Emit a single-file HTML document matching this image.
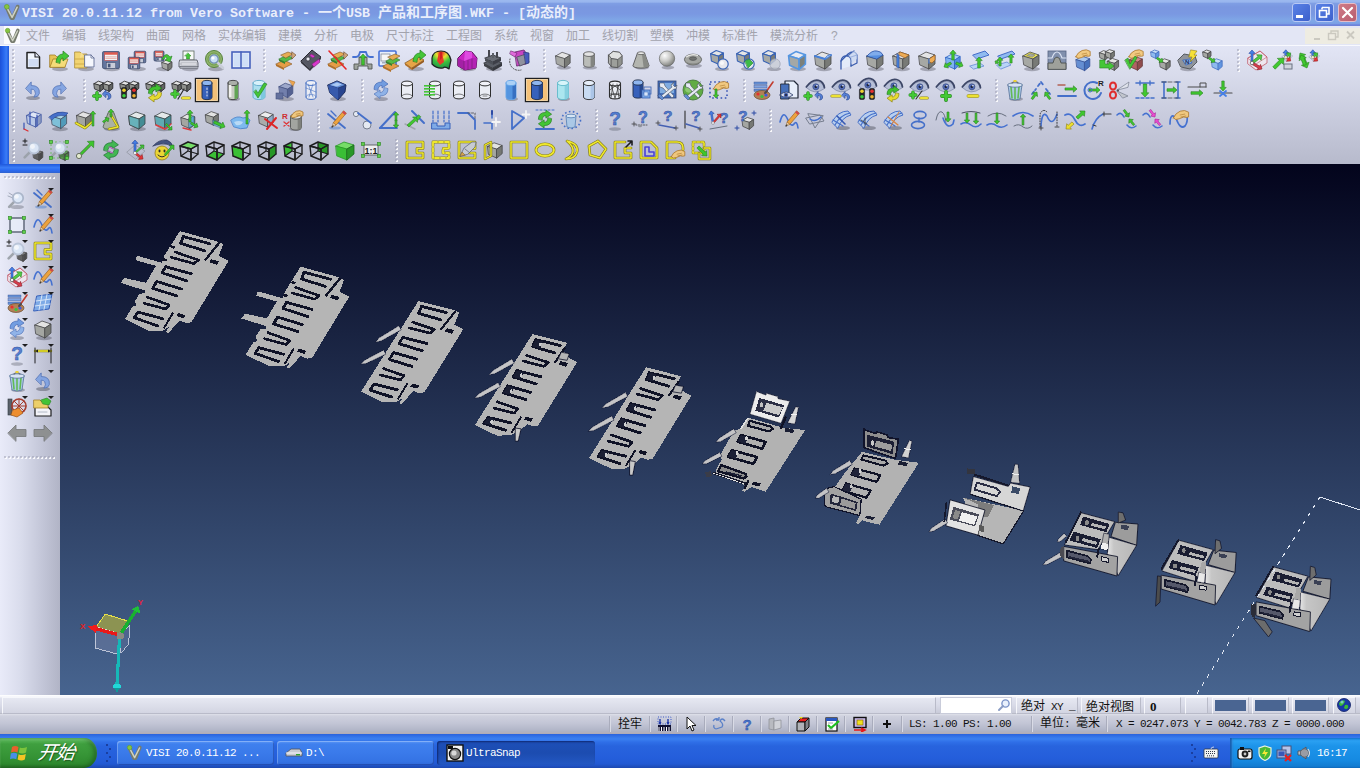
<!DOCTYPE html>
<html lang="zh-CN"><head><meta charset="utf-8"><title>VISI 20.0.11.12 from Vero Software</title>
<style>

html,body{margin:0;padding:0;}
body{width:1360px;height:768px;overflow:hidden;position:relative;background:#c8cbdc;font-family:"Liberation Sans","Noto Sans CJK SC",sans-serif;font-size:12px;}
.abs{position:absolute;}
#title{left:0;top:0;width:1360px;height:26px;background:linear-gradient(#9cb9ef 0,#98b5ee 2px,#7f9ee4 3.5px,#7a97e0 7px,#7a98e2 14px,#7fa8e7 21px,#7b9fe5 23.5px,#6d80d9 25px,#7085db 26px);}
#title .t{position:absolute;left:22px;top:4px;height:18px;line-height:18px;color:#e9eefb;font-weight:bold;white-space:pre;font-family:"Liberation Mono","Noto Sans CJK SC",monospace;font-size:13.33px;}
#title .t .c{font-size:14px;letter-spacing:0;font-weight:bold;}
#menu{left:0;top:26px;width:1360px;height:20px;background:linear-gradient(#e3e6f5 0,#e3e6f5 18.5px,#f8f9fe 19px,#f8f9fe 20px);}
#menu span{position:absolute;top:2px;line-height:16px;font-size:12px;color:#a2a3ad;white-space:pre;font-family:"Liberation Sans","Noto Sans CJK SC",sans-serif;}
#tb{left:0;top:46px;width:1360px;height:118px;background:linear-gradient(#e2e5f5,#dadded 20%,#c8cbdd 60%,#b7bacc);}
#lstrip{left:0;top:46px;width:9px;height:127px;background:linear-gradient(90deg,#1c50d8,#2a6af0 45%,#3a7cf6 70%,#1f58dc);}
#lbar{left:0;top:164px;width:60px;height:9px;background:linear-gradient(#1f58dc,#3a7cf6 40%,#2a6af0 70%,#2e62d0);}
#ltb{left:0;top:173px;width:60px;height:522px;background:linear-gradient(90deg,#e9ebf9,#d9dcec 35%,#c3c6d8 70%,#b1b4c6);}
#st1{left:0;top:695px;width:1360px;height:19px;background:linear-gradient(#ffffff 0,#f4f5fb 2px,#e1e3ef 3px,#d9dbe8 10px,#c9cbd9 18px,#a9abb5 19px);}
#st2{left:0;top:714px;width:1360px;height:20px;background:linear-gradient(#dfe1ea 0,#cfd1de 2px,#c3c6d6 9px,#b2b6c8 16px,#aeb0c0 18px,#b8b0b8 19px,#a6a8b8 20px);}
#task{left:0;top:734px;width:1360px;height:34px;background:linear-gradient(#2a62dc 0,#3576ea 3px,#3b80f0 5px,#2f6fe8 8px,#2864de 12px,#245edb 24px,#2259d2 30px,#1c48b0 34px);}
.mono{font-family:"Liberation Mono","Noto Sans CJK SC",monospace;}

</style></head>
<body>
<div id="title" class="abs"><svg class="abs" style="left:3px;top:3px" width="18.0" height="18.0" viewBox="0 0 18 18"><path d="M4 5 L8.4 15 L10 15 L14.6 3.6" fill="none" stroke="#767b6e" stroke-width="3.8" stroke-linecap="round" stroke-linejoin="round"/><path d="M4.4 5.6 L9.1 14.4 L14.2 4.2" fill="none" stroke="#cfd3c4" stroke-width="1.5" stroke-linecap="round" stroke-linejoin="round"/><circle cx="3.8" cy="3.8" r="2.4" fill="#86c440" stroke="#5f9a2a" stroke-width=".6"/></svg><div class="t">VISI 20.0.11.12 from Vero Software - <span class="c">一个</span>USB <span class="c">产品和工序图</span>.WKF - [<span class="c">动态的</span>]</div></div>
<div id="menu" class="abs"><div class="abs" style="left:4px;top:0;width:16px;height:18px;background:#fbfbfe"></div><svg class="abs" style="left:4px;top:1px" width="17.099999999999998" height="17.099999999999998" viewBox="0 0 18 18"><path d="M4 5 L8.4 15 L10 15 L14.6 3.6" fill="none" stroke="#767b6e" stroke-width="3.8" stroke-linecap="round" stroke-linejoin="round"/><path d="M4.4 5.6 L9.1 14.4 L14.2 4.2" fill="none" stroke="#cfd3c4" stroke-width="1.5" stroke-linecap="round" stroke-linejoin="round"/><circle cx="3.8" cy="3.8" r="2.4" fill="#86c440" stroke="#5f9a2a" stroke-width=".6"/></svg><span style="left:26px">文件</span><span style="left:62px">编辑</span><span style="left:98px">线架构</span><span style="left:146px">曲面</span><span style="left:182px">网格</span><span style="left:218px">实体编辑</span><span style="left:278px">建模</span><span style="left:314px">分析</span><span style="left:350px">电极</span><span style="left:386px">尺寸标注</span><span style="left:446px">工程图</span><span style="left:494px">系统</span><span style="left:530px">视窗</span><span style="left:566px">加工</span><span style="left:602px">线切割</span><span style="left:650px">塑模</span><span style="left:686px">冲模</span><span style="left:722px">标准件</span><span style="left:770px">模流分析</span><span style="left:831px">?</span></div>
<div id="tb" class="abs"></div><div id="lstrip" class="abs"></div><div id="lbar" class="abs"></div><div id="ltb" class="abs"></div>
<div id="st1" class="abs"></div><div id="st2" class="abs"></div><div id="task" class="abs"></div>
<div class="abs" style="left:1292px;top:3px;width:19px;height:19px;border:1px solid #b9c9f4;border-radius:3px;background:linear-gradient(135deg,#5a82e6,#3c60cc);box-sizing:border-box"></div><svg class="abs" style="left:1292px;top:3px" width="19" height="19" viewBox="0 0 19 19"><rect x="4" y="12" width="7" height="3" fill="#fff"/></svg><div class="abs" style="left:1315px;top:3px;width:19px;height:19px;border:1px solid #b9c9f4;border-radius:3px;background:linear-gradient(135deg,#5a82e6,#3c60cc);box-sizing:border-box"></div><svg class="abs" style="left:1315px;top:3px" width="19" height="19" viewBox="0 0 19 19"><path d="M7 4.5 H14 V11 H12 M7 4.5 V6.5" fill="none" stroke="#fff" stroke-width="1.6"/><rect x="4.5" y="7.5" width="7" height="6.5" fill="none" stroke="#fff" stroke-width="1.6"/></svg><div class="abs" style="left:1338px;top:3px;width:19px;height:19px;border:1px solid #e6bcc6;border-radius:3px;background:linear-gradient(135deg,#cf7a86,#b85e70);box-sizing:border-box"></div><svg class="abs" style="left:1338px;top:3px" width="19" height="19" viewBox="0 0 19 19"><path d="M5 5 L14 14 M14 5 L5 14" stroke="#fff" stroke-width="2.2" stroke-linecap="round"/></svg><div class="abs" style="left:1305px;top:28px;width:55px;height:16px;background:#eeece2"></div><svg class="abs" style="left:1305px;top:28px" width="55" height="16" viewBox="0 0 55 16"><rect x="9" y="10" width="6" height="2" fill="#cbc9c0"/><path d="M26 5 V3 H33 V9 H31" fill="none" stroke="#cbc9c0" stroke-width="1.4"/><rect x="23.5" y="5.5" width="7" height="6" fill="none" stroke="#cbc9c0" stroke-width="1.4"/><path d="M42 3.5 L49 10.5 M49 3.5 L42 10.5" stroke="#cbc9c0" stroke-width="1.8"/></svg><div class="abs" style="left:2px;top:697px;width:934px;height:17px;box-sizing:border-box;border:1px solid #f6f7fb;border-right-color:#b9bbc9;border-bottom-color:#b9bbc9;background:linear-gradient(#e6e8f2,#d3d5e2)"></div><div class="abs" style="left:940px;top:697px;width:72px;height:17px;background:#fff;border:1px solid #c9ccda;box-sizing:border-box"></div><svg class="abs" style="left:997px;top:698px" width="14" height="14" viewBox="0 0 14 14"><circle cx="8.5" cy="5.5" r="3.6" fill="#e8f0fc" stroke="#7a92c8" stroke-width="1.4"/><path d="M6 8 L2 12" stroke="#8a9cc4" stroke-width="2" stroke-linecap="round"/></svg><div class="abs" style="left:1016px;top:697px;width:62px;height:17px;box-sizing:border-box;border:1px solid #f6f7fb;border-right-color:#b9bbc9;border-bottom-color:#b9bbc9;background:linear-gradient(#e6e8f2,#d3d5e2)"><span class="mono" style="position:absolute;top:2px;line-height:14px;font-size:12px;color:#101010;white-space:pre;left:4px;font-size:11px;letter-spacing:-.6px"><span style="font-size:12px;letter-spacing:0">绝对</span> XY _</span></div><div class="abs" style="left:1081px;top:697px;width:60px;height:17px;box-sizing:border-box;border:1px solid #f6f7fb;border-right-color:#b9bbc9;border-bottom-color:#b9bbc9;background:linear-gradient(#e6e8f2,#d3d5e2)"><span style="position:absolute;top:2px;line-height:14px;font-size:12px;color:#101010;white-space:pre;left:4px;">绝对视图</span></div><div class="abs" style="left:1144px;top:697px;width:37px;height:17px;box-sizing:border-box;border:1px solid #f6f7fb;border-right-color:#b9bbc9;border-bottom-color:#b9bbc9;background:linear-gradient(#e6e8f2,#d3d5e2)"><span style="position:absolute;top:2px;line-height:14px;font-size:12px;color:#101010;white-space:pre;left:5px;font-weight:bold;font-family:'Liberation Serif',serif;font-size:13px">0</span></div><div class="abs" style="left:1185px;top:697px;width:23px;height:17px;box-sizing:border-box;border:1px solid #f6f7fb;border-right-color:#b9bbc9;border-bottom-color:#b9bbc9;background:linear-gradient(#e6e8f2,#d3d5e2)"></div><div class="abs" style="left:1212px;top:697px;width:37px;height:17px;box-sizing:border-box;border:1px solid #f6f7fb;border-right-color:#b9bbc9;border-bottom-color:#b9bbc9;background:linear-gradient(#e6e8f2,#d3d5e2)"><div style="position:absolute;left:2px;top:2px;width:31px;height:11px;background:#4a6592"></div></div><div class="abs" style="left:1252px;top:697px;width:37px;height:17px;box-sizing:border-box;border:1px solid #f6f7fb;border-right-color:#b9bbc9;border-bottom-color:#b9bbc9;background:linear-gradient(#e6e8f2,#d3d5e2)"><div style="position:absolute;left:2px;top:2px;width:31px;height:11px;background:#4a6592"></div></div><div class="abs" style="left:1292px;top:697px;width:37px;height:17px;box-sizing:border-box;border:1px solid #f6f7fb;border-right-color:#b9bbc9;border-bottom-color:#b9bbc9;background:linear-gradient(#e6e8f2,#d3d5e2)"><div style="position:absolute;left:2px;top:2px;width:31px;height:11px;background:#4a6592"></div></div><div class="abs" style="left:1333px;top:697px;width:23px;height:17px;box-sizing:border-box;border:1px solid #f6f7fb;border-right-color:#b9bbc9;border-bottom-color:#b9bbc9;background:linear-gradient(#e6e8f2,#d3d5e2)"></div><svg class="abs" style="left:1336px;top:697px" width="16" height="16" viewBox="0 0 16 16"><circle cx="8" cy="8" r="6.5" fill="#1838a8" stroke="#0a1a60" stroke-width=".8"/><path d="M3 6 Q6 2 9 4 Q8 8 5 9 Q3 9 3 6Z M9 8 Q13 7 12 11 Q10 13 8 11Z" fill="#38b838"/><circle cx="6" cy="5" r="1.6" fill="#9ad0f8" opacity=".7"/></svg><div class="abs" style="left:610px;top:716px;width:1px;height:16px;background:#d9dbe6"></div><div class="abs" style="left:609px;top:716px;width:1px;height:16px;background:#a9acbc"></div><div class="abs" style="left:650px;top:716px;width:1px;height:16px;background:#d9dbe6"></div><div class="abs" style="left:649px;top:716px;width:1px;height:16px;background:#a9acbc"></div><div class="abs" style="left:677px;top:716px;width:1px;height:16px;background:#d9dbe6"></div><div class="abs" style="left:676px;top:716px;width:1px;height:16px;background:#a9acbc"></div><div class="abs" style="left:705px;top:716px;width:1px;height:16px;background:#d9dbe6"></div><div class="abs" style="left:704px;top:716px;width:1px;height:16px;background:#a9acbc"></div><div class="abs" style="left:733px;top:716px;width:1px;height:16px;background:#d9dbe6"></div><div class="abs" style="left:732px;top:716px;width:1px;height:16px;background:#a9acbc"></div><div class="abs" style="left:761px;top:716px;width:1px;height:16px;background:#d9dbe6"></div><div class="abs" style="left:760px;top:716px;width:1px;height:16px;background:#a9acbc"></div><div class="abs" style="left:789px;top:716px;width:1px;height:16px;background:#d9dbe6"></div><div class="abs" style="left:788px;top:716px;width:1px;height:16px;background:#a9acbc"></div><div class="abs" style="left:817px;top:716px;width:1px;height:16px;background:#d9dbe6"></div><div class="abs" style="left:816px;top:716px;width:1px;height:16px;background:#a9acbc"></div><div class="abs" style="left:845px;top:716px;width:1px;height:16px;background:#d9dbe6"></div><div class="abs" style="left:844px;top:716px;width:1px;height:16px;background:#a9acbc"></div><div class="abs" style="left:873px;top:716px;width:1px;height:16px;background:#d9dbe6"></div><div class="abs" style="left:872px;top:716px;width:1px;height:16px;background:#a9acbc"></div><div class="abs" style="left:902px;top:716px;width:1px;height:16px;background:#d9dbe6"></div><div class="abs" style="left:901px;top:716px;width:1px;height:16px;background:#a9acbc"></div><div class="abs" style="left:1032px;top:716px;width:1px;height:16px;background:#d9dbe6"></div><div class="abs" style="left:1031px;top:716px;width:1px;height:16px;background:#a9acbc"></div><div class="abs" style="left:1107px;top:716px;width:1px;height:16px;background:#d9dbe6"></div><div class="abs" style="left:1106px;top:716px;width:1px;height:16px;background:#a9acbc"></div><span style="position:absolute;top:717px;line-height:15px;font-size:12px;color:#101010;white-space:pre;left:618px;">拴牢</span><span class="mono" style="position:absolute;top:717px;line-height:15px;font-size:12px;color:#101010;white-space:pre;left:909px;font-size:11px;letter-spacing:-.6px;">LS: 1.00 PS: 1.00</span><span class="mono" style="position:absolute;top:717px;line-height:15px;font-size:12px;color:#101010;white-space:pre;left:1040px;font-size:11px;letter-spacing:-.6px;"><span style="font-size:12px;letter-spacing:0">单位</span>: <span style="font-size:12px;letter-spacing:0">毫米</span></span><span class="mono" style="position:absolute;top:717px;line-height:15px;font-size:12px;color:#101010;white-space:pre;left:1116px;font-size:11px;letter-spacing:-.6px;">X = 0247.073 Y = 0042.783 Z = 0000.000</span><svg class="abs" style="left:656px;top:716px" width="16" height="16" viewBox="0 0 16 16"><rect x="2" y="9" width="13" height="6" fill="#101030"/><path d="M3 15 V11 M5.5 15 V11 M8 15 V11 M10.5 15 V11 M13 15 V11" stroke="#fff" stroke-width="1"/><path d="M2 1 H15 V8 H2Z" fill="none" stroke="#3a58c8" stroke-width="1" stroke-dasharray="1 1.5"/><path d="M4 3 V8 M12 3 V8" stroke="#2038a8" stroke-width="1.4"/><path d="M2.5 6 L4 9 L5.5 6 M10.5 6 L12 9 L13.5 6" fill="#2038a8"/></svg><svg class="abs" style="left:683px;top:716px" width="16" height="16" viewBox="0 0 16 16"><path d="M4 1 V13 L7 10 L9 15 L11 14 L9 9.5 H13Z" fill="#fff" stroke="#101010" stroke-width="1"/></svg><svg class="abs" style="left:711px;top:716px" width="16" height="16" viewBox="0 0 16 16"><path d="M2 5 Q5 1 8 4 M8 4 L5 4 M8 4 L8 1 M14 5 Q11 1 9 5 Q13 8 11 11 L5 13 M3 9 Q2 12 5 13" fill="none" stroke="#5a80c8" stroke-width="1.3"/></svg><svg class="abs" style="left:739px;top:716px" width="16" height="16" viewBox="0 0 16 16"><text x="8" y="14" text-anchor="middle" font-family="Liberation Sans,sans-serif" font-weight="bold" font-size="15" fill="#4a78d0" stroke="#28479a" stroke-width=".4">?</text></svg><svg class="abs" style="left:767px;top:716px" width="16" height="16" viewBox="0 0 16 16"><path d="M2 3 L7 2 L7 14 L2 13Z" fill="#b8bac0" stroke="#8a8c94" stroke-width=".7"/><path d="M7 5 L14 4 V12 L7 14Z" fill="#d0d2d8" stroke="#8a8c94" stroke-width=".7"/></svg><svg class="abs" style="left:795px;top:716px" width="16" height="16" viewBox="0 0 16 16"><path d="M2 6 L6 2 H14 L10 6Z" fill="#e82020" stroke="#101010" stroke-width="1"/><path d="M2 6 H10 V15 H2Z" fill="#b0b2b8" stroke="#101010" stroke-width="1"/><path d="M10 6 L14 2 V11 L10 15Z" fill="#808288" stroke="#101010" stroke-width="1"/><path d="M4 1 L6 3 L8 1" fill="#f0e020"/></svg><svg class="abs" style="left:824px;top:716px" width="16" height="16" viewBox="0 0 16 16"><rect x="2" y="2" width="11" height="13" fill="#fff" stroke="#101010" stroke-width="1.2"/><rect x="2" y="2" width="11" height="3" fill="#2a58c0"/><path d="M4 9 L7 12 L15 5" fill="none" stroke="#20c020" stroke-width="2.2"/><path d="M4 7 H9 M4 13 H9" stroke="#8a8c94" stroke-width=".8"/></svg><svg class="abs" style="left:852px;top:716px" width="16" height="16" viewBox="0 0 16 16"><rect x="2" y="1.5" width="12" height="10" fill="#c8b8e8" stroke="#101010" stroke-width="1.4"/><rect x="5" y="4" width="6" height="5" fill="#f0e020" stroke="#806000" stroke-width=".6"/><path d="M2 14 H12 M9 12 L13 14 L9 16" fill="none" stroke="#e81818" stroke-width="1.6"/></svg><svg class="abs" style="left:879px;top:716px" width="16" height="16" viewBox="0 0 16 16"><path d="M8 4 V12 M4 8 H12" stroke="#101010" stroke-width="2"/></svg><div class="abs" style="left:0;top:738px;width:97px;height:30px;border-radius:0 14px 14px 0/0 16px 16px 0;background:linear-gradient(#4aa84a 0,#5cbc5c 2px,#3f9f3f 6px,#379637 16px,#2f8a2f 26px,#256f25 30px);box-shadow:inset -3px 0 5px rgba(20,70,20,.55),inset 0 2px 2px rgba(160,230,160,.45)"></div><svg class="abs" style="left:10px;top:743px" width="20" height="20" viewBox="0 0 20 20"><path d="M2 4 Q5 2 8.5 4 L7.5 9.5 Q4.5 7.8 1 9.5Z" fill="#e8602c"/><path d="M9.8 4.4 Q13 6 17 4 L16 9.6 Q12.5 11.5 8.8 9.8Z" fill="#7cc43c"/><path d="M0.8 10.6 Q4 9 7.3 10.8 L6.3 16.2 Q3 14.6 0 16.2Z" fill="#4a8ee8"/><path d="M8.6 11.2 Q12 13 15.8 11 L14.8 16.6 Q11.5 18.4 7.6 16.6Z" fill="#f4c424"/></svg><div class="abs" style="left:38px;top:741px;width:50px;height:24px;line-height:24px;color:#fff;font-size:19px;font-style:italic;font-family:'Liberation Sans','Noto Sans CJK SC',sans-serif;text-shadow:1px 1px 1px rgba(20,60,20,.7);letter-spacing:-1px;transform:skewX(-8deg)">开始</div><div class="abs" style="left:106px;top:744px;width:2px;height:2px;background:#1a3fa0"></div><div class="abs" style="left:109px;top:748px;width:2px;height:2px;background:#1a3fa0"></div><div class="abs" style="left:106px;top:752px;width:2px;height:2px;background:#1a3fa0"></div><div class="abs" style="left:109px;top:756px;width:2px;height:2px;background:#1a3fa0"></div><div class="abs" style="left:106px;top:760px;width:2px;height:2px;background:#1a3fa0"></div><div class="abs" style="left:117px;top:741px;width:157px;height:24px;border-radius:3px;background:linear-gradient(#5e98f6 0,#3f80ee 3px,#3a7aea 50%,#3573e4 85%,#2f68d8);box-shadow:inset 1px 1px 0 rgba(255,255,255,.25),inset -1px -1px 0 rgba(0,0,60,.25)"></div><svg class="abs" style="left:126px;top:744px" width="17.099999999999998" height="17.099999999999998" viewBox="0 0 18 18"><path d="M4 5 L8.4 15 L10 15 L14.6 3.6" fill="none" stroke="#767b6e" stroke-width="3.8" stroke-linecap="round" stroke-linejoin="round"/><path d="M4.4 5.6 L9.1 14.4 L14.2 4.2" fill="none" stroke="#cfd3c4" stroke-width="1.5" stroke-linecap="round" stroke-linejoin="round"/><circle cx="3.8" cy="3.8" r="2.4" fill="#86c440" stroke="#5f9a2a" stroke-width=".6"/></svg><span class="abs mono" style="left:146px;top:745px;line-height:16px;font-size:11px;letter-spacing:-.6px;color:#fff;white-space:pre">VISI 20.0.11.12 ...</span><div class="abs" style="left:277px;top:741px;width:157px;height:24px;border-radius:3px;background:linear-gradient(#5e98f6 0,#3f80ee 3px,#3a7aea 50%,#3573e4 85%,#2f68d8);box-shadow:inset 1px 1px 0 rgba(255,255,255,.25),inset -1px -1px 0 rgba(0,0,60,.25)"></div><svg class="abs" style="left:285px;top:746px" width="18" height="14" viewBox="0 0 18 14"><path d="M1 7 L6 3 H15 L17 7 V10 H1Z" fill="#c8ccd4" stroke="#50545c" stroke-width=".8"/><path d="M1 7 H17" stroke="#f4f4f8" stroke-width="1"/><rect x="11" y="8" width="4" height="1.4" fill="#30a030"/></svg><span class="abs mono" style="left:306px;top:745px;line-height:16px;font-size:11px;letter-spacing:-.6px;color:#fff;white-space:pre">D:\</span><div class="abs" style="left:437px;top:741px;width:158px;height:24px;border-radius:3px;background:linear-gradient(#1d4fb8 0,#1c4cb0 50%,#2358c4);box-shadow:inset 1px 1px 2px rgba(0,0,40,.5)"></div><svg class="abs" style="left:446px;top:744px" width="18" height="18" viewBox="0 0 18 18"><rect x="1" y="1" width="16" height="16" fill="#f4f4f4" stroke="#101010" stroke-width="1.4"/><circle cx="9" cy="10" r="5.6" fill="#888" stroke="#101010" stroke-width="1.2"/><circle cx="8" cy="9" r="2.6" fill="#d8d8d8"/><rect x="2" y="2" width="5" height="3" fill="#101010"/></svg><span class="abs mono" style="left:466px;top:745px;line-height:16px;font-size:11px;letter-spacing:-.6px;color:#fff;white-space:pre">UltraSnap</span><div class="abs" style="left:1191px;top:744px;width:2px;height:2px;background:#1a3fa0"></div><div class="abs" style="left:1194px;top:748px;width:2px;height:2px;background:#1a3fa0"></div><div class="abs" style="left:1191px;top:752px;width:2px;height:2px;background:#1a3fa0"></div><div class="abs" style="left:1194px;top:756px;width:2px;height:2px;background:#1a3fa0"></div><div class="abs" style="left:1191px;top:760px;width:2px;height:2px;background:#1a3fa0"></div><svg class="abs" style="left:1203px;top:746px" width="16" height="14" viewBox="0 0 16 14"><rect x="1" y="3" width="14" height="9" rx="1" fill="#f4f4f4" stroke="#303848" stroke-width=".8"/><path d="M3 5.5 H13 M3 7.5 H13 M4 9.8 H12" stroke="#303848" stroke-width="1" stroke-dasharray="1 1"/><path d="M8 3 Q8 1 11 1" fill="none" stroke="#e8e8f0" stroke-width=".8"/></svg><div class="abs" style="left:1230px;top:738px;width:130px;height:30px;background:linear-gradient(#1a86e0 0,#2aa0f2 3px,#1d94ea 8px,#168ae2 22px,#1278cc 30px);box-shadow:inset 2px 0 2px rgba(10,50,130,.6),inset 3px 0 0 rgba(90,180,250,.25)"></div><svg class="abs" style="left:1237px;top:745px" width="16" height="16" viewBox="0 0 16 16"><rect x="1" y="4" width="14" height="10" rx="2" fill="#f4f4f4" stroke="#101010" stroke-width="1.2"/><circle cx="8" cy="9" r="3.4" fill="#202020"/><circle cx="8" cy="9" r="1.4" fill="#c8c8c8"/><rect x="3" y="2" width="4" height="3" fill="#101010"/><rect x="11" y="5.5" width="2.5" height="1.6" fill="#101010"/></svg><svg class="abs" style="left:1257px;top:745px" width="16" height="16" viewBox="0 0 16 16"><path d="M8 1 L14 3 V8 Q14 13 8 15.5 Q2 13 2 8 V3Z" fill="#48b838" stroke="#e8f0e0" stroke-width="1.2"/><path d="M9 3 L5 9 H8 L7 13 L11 7 H8Z" fill="#f8e838"/></svg><svg class="abs" style="left:1276px;top:745px" width="17" height="17" viewBox="0 0 17 17"><rect x="6" y="1" width="9" height="8" fill="#b8c4e8" stroke="#485078" stroke-width="1"/><rect x="1" y="5" width="9" height="8" fill="#98a8d8" stroke="#485078" stroke-width="1"/><rect x="2.5" y="6.5" width="6" height="4.5" fill="#3858b8"/><path d="M9 10 L15 16 M15 10 L9 16" stroke="#e82020" stroke-width="2.2"/></svg><svg class="abs" style="left:1296px;top:745px" width="16" height="16" viewBox="0 0 16 16"><path d="M2 6 H5 L10 2 V14 L5 10 H2Z" fill="#c4c6cc" stroke="#50545c" stroke-width=".9"/><circle cx="8.5" cy="8" r="4.2" fill="#9a9ca4" stroke="#50545c" stroke-width=".8"/><path d="M12 4 Q15 8 12 12" fill="none" stroke="#d8dae0" stroke-width="1.2"/></svg><span class="abs mono" style="left:1317px;top:745px;line-height:16px;font-size:11px;letter-spacing:-.6px;color:#fff;white-space:pre">16:17</span><svg class="abs" style="left:0;top:0;opacity:.92" width="1360" height="700" viewBox="0 0 1360 700">
<rect x="13" y="50" width="2" height="2" fill="#fdfdff"/><rect x="12" y="49" width="2" height="2" fill="#9a9cb0" opacity=".55"/><rect x="13" y="54" width="2" height="2" fill="#fdfdff"/><rect x="12" y="53" width="2" height="2" fill="#9a9cb0" opacity=".55"/><rect x="13" y="58" width="2" height="2" fill="#fdfdff"/><rect x="12" y="57" width="2" height="2" fill="#9a9cb0" opacity=".55"/><rect x="13" y="62" width="2" height="2" fill="#fdfdff"/><rect x="12" y="61" width="2" height="2" fill="#9a9cb0" opacity=".55"/><rect x="13" y="66" width="2" height="2" fill="#fdfdff"/><rect x="12" y="65" width="2" height="2" fill="#9a9cb0" opacity=".55"/><rect x="13" y="70" width="2" height="2" fill="#fdfdff"/><rect x="12" y="69" width="2" height="2" fill="#9a9cb0" opacity=".55"/>
<g transform="translate(33,60)"><path d="M-6 -7.5 H2 L6.5 -3 V8 H-6 Z" fill="#f4f8ff" stroke="#101010" stroke-width="1.5" stroke-linejoin="round" stroke-linecap="round" /><path d="M-4.6 -1 L5.2 -1 L5.2 6.6 L-4.6 6.6Z" fill="#cfdcf4" stroke="none" stroke-width="1" stroke-linejoin="round" stroke-linecap="round" /><path d="M2 -7.5 V-3 H6.5" fill="#e8eefc" stroke="#101010" stroke-width="1.1" stroke-linejoin="round" stroke-linecap="round" /></g>
<g transform="translate(59,60)"><ellipse cx="1" cy="9" rx="8" ry="2.2" fill="#30323c" stroke="none" stroke-width="1" opacity="0.35"/><path d="M-9 -5 H-4 L-2 -3 H6 V7 H-9 Z" fill="#e8c048" stroke="#a07818" stroke-width="0.8" stroke-linejoin="round" stroke-linecap="round" /><path d="M-9 7 L-6 -1 H9 L6 7 Z" fill="#f8dc70" stroke="#a07818" stroke-width="0.8" stroke-linejoin="round" stroke-linecap="round" /><path d="M-3 2 Q-2 -6 4 -6 L4 -9 L10 -4 L4 1 L4 -2 Q1 -2 1 3 Z" fill="#38c428" stroke="#187a10" stroke-width="0.7" stroke-linejoin="round" stroke-linecap="round" /></g>
<g transform="translate(85,60)"><ellipse cx="1" cy="9" rx="8" ry="2.2" fill="#30323c" stroke="none" stroke-width="1" opacity="0.35"/><path d="M-10 -8 H-5 L-3 -6 H2 V8 H-10 Z" fill="#f4d468" stroke="#a88420" stroke-width="0.8" stroke-linejoin="round" stroke-linecap="round" /><path d="M-10 -1 H1 M-10 4 H1" fill="none" stroke="#c8a030" stroke-width="0.8" stroke-linejoin="round" stroke-linecap="round" /><path d="M0 -5 H6 L9 -2 V7 H0 Z" fill="#f8faff" stroke="#5a6890" stroke-width="0.9" stroke-linejoin="round" stroke-linecap="round" /><path d="M6 -5 V-2 H9" fill="none" stroke="#5a6890" stroke-width="0.8" stroke-linejoin="round" stroke-linecap="round" /><path d="M-4 -8 L-1 -4 L-5 -2 Z" fill="#f8e088" stroke="none" stroke-width="1" stroke-linejoin="round" stroke-linecap="round" /></g>
<g transform="translate(111,60)"><ellipse cx="1" cy="9" rx="8" ry="2.2" fill="#30323c" stroke="none" stroke-width="1" opacity="0.35"/><rect x="-8.4" y="-8.4" width="16.8" height="16.8" rx="1" fill="#5a6e98" stroke="#2c3a5c" stroke-width="0.8" /><rect x="-6.300000000000001" y="-7.3500000000000005" width="12.600000000000001" height="7.875" rx="0" fill="#f4f4f4" stroke="#c03030" stroke-width="0.6" /><rect x="-6.300000000000001" y="-7.3500000000000005" width="12.600000000000001" height="2.1" rx="0" fill="#e05040" stroke="none" stroke-width="1" /><line x1="-5.25" y1="-3.1500000000000004" x2="5.25" y2="-3.1500000000000004" stroke="#e08070" stroke-width="0.6" stroke-linecap="round" /><line x1="-5.25" y1="-1.5750000000000002" x2="5.25" y2="-1.5750000000000002" stroke="#e08070" stroke-width="0.6" stroke-linecap="round" /><rect x="-4.7250000000000005" y="2.625" width="9.450000000000001" height="5.775" rx="0" fill="#c8ccd8" stroke="#2c3a5c" stroke-width="0.5" /><rect x="-3.1500000000000004" y="3.6750000000000003" width="2.625" height="3.6750000000000003" rx="0" fill="#3a4a70" stroke="none" stroke-width="1" /></g>
<g transform="translate(137,60)"><ellipse cx="1" cy="9" rx="8" ry="2.2" fill="#30323c" stroke="none" stroke-width="1" opacity="0.35"/><rect x="-2.76" y="-8.76" width="11.52" height="11.52" rx="1" fill="#5a6e98" stroke="#2c3a5c" stroke-width="0.8" /><rect x="-1.3200000000000003" y="-8.04" width="8.64" height="5.3999999999999995" rx="0" fill="#f4f4f4" stroke="#c03030" stroke-width="0.6" /><rect x="-1.3200000000000003" y="-8.04" width="8.64" height="1.44" rx="0" fill="#e05040" stroke="none" stroke-width="1" /><line x1="-0.5999999999999996" y1="-5.16" x2="6.6" y2="-5.16" stroke="#e08070" stroke-width="0.6" stroke-linecap="round" /><line x1="-0.5999999999999996" y1="-4.08" x2="6.6" y2="-4.08" stroke="#e08070" stroke-width="0.6" stroke-linecap="round" /><rect x="-0.23999999999999977" y="-1.2000000000000002" width="6.4799999999999995" height="3.96" rx="0" fill="#c8ccd8" stroke="#2c3a5c" stroke-width="0.5" /><rect x="0.8399999999999999" y="-0.48" width="1.7999999999999998" height="2.52" rx="0" fill="#3a4a70" stroke="none" stroke-width="1" /><rect x="-8.76" y="-2.76" width="11.52" height="11.52" rx="1" fill="#5a6e98" stroke="#2c3a5c" stroke-width="0.8" /><rect x="-7.32" y="-2.04" width="8.64" height="5.3999999999999995" rx="0" fill="#f4f4f4" stroke="#c03030" stroke-width="0.6" /><rect x="-7.32" y="-2.04" width="8.64" height="1.44" rx="0" fill="#e05040" stroke="none" stroke-width="1" /><line x1="-6.6" y1="0.8399999999999999" x2="0.5999999999999996" y2="0.8399999999999999" stroke="#e08070" stroke-width="0.6" stroke-linecap="round" /><line x1="-6.6" y1="1.92" x2="0.5999999999999996" y2="1.92" stroke="#e08070" stroke-width="0.6" stroke-linecap="round" /><rect x="-6.24" y="4.8" width="6.4799999999999995" height="3.96" rx="0" fill="#c8ccd8" stroke="#2c3a5c" stroke-width="0.5" /><rect x="-5.16" y="5.52" width="1.7999999999999998" height="2.52" rx="0" fill="#3a4a70" stroke="none" stroke-width="1" /></g>
<g transform="translate(163,60)"><ellipse cx="1" cy="9" rx="8" ry="2.2" fill="#30323c" stroke="none" stroke-width="1" opacity="0.35"/><rect x="-8.96" y="-8.96" width="9.92" height="9.92" rx="1" fill="#5a6e98" stroke="#2c3a5c" stroke-width="0.8" /><rect x="-7.72" y="-8.34" width="7.4399999999999995" height="4.65" rx="0" fill="#f4f4f4" stroke="#c03030" stroke-width="0.6" /><rect x="-7.72" y="-8.34" width="7.4399999999999995" height="1.24" rx="0" fill="#e05040" stroke="none" stroke-width="1" /><line x1="-7.1" y1="-5.859999999999999" x2="-0.8999999999999999" y2="-5.859999999999999" stroke="#e08070" stroke-width="0.6" stroke-linecap="round" /><line x1="-7.1" y1="-4.93" x2="-0.8999999999999999" y2="-4.93" stroke="#e08070" stroke-width="0.6" stroke-linecap="round" /><rect x="-6.79" y="-2.45" width="5.58" height="3.41" rx="0" fill="#c8ccd8" stroke="#2c3a5c" stroke-width="0.5" /><rect x="-5.859999999999999" y="-1.83" width="1.55" height="2.17" rx="0" fill="#3a4a70" stroke="none" stroke-width="1" /><path d="M-1.0 2.5 L3.4 0.0 L9.0 1.9 L5.2 4.4 Z" fill="#e6e6e4" stroke="#3c3c3c" stroke-width="0.8" stroke-linejoin="round" stroke-linecap="round" /><path d="M-1.0 2.5 L5.2 4.4 L5.2 10.6 L-0.3 8.1 Z" fill="#a2a49e" stroke="#3c3c3c" stroke-width="0.8" stroke-linejoin="round" stroke-linecap="round" /><path d="M5.2 4.4 L9.0 1.9 L9.0 7.5 L5.2 10.6 Z" fill="#70726c" stroke="#3c3c3c" stroke-width="0.8" stroke-linejoin="round" stroke-linecap="round" /><path d="M-1 -1 Q3 -9 7 -3 L9 -4 L7 2 L2 0 L4 -1 Q3 -5 1 -1 Z" fill="#38c428" stroke="#187a10" stroke-width="0.6" stroke-linejoin="round" stroke-linecap="round" /></g>
<g transform="translate(189,60)"><ellipse cx="1" cy="9" rx="8" ry="2.2" fill="#30323c" stroke="none" stroke-width="1" opacity="0.35"/><rect x="-6" y="-9" width="11" height="9" rx="0" fill="#f8fcf8" stroke="#506050" stroke-width="0.8" /><path d="M-1 -7 L2 -4 H0.5 V-1 H-2.5 V-4 H-4 Z" fill="#38c428" stroke="#187a10" stroke-width="0.5" stroke-linejoin="round" stroke-linecap="round" /><path d="M-9 0 H8 L9 3 V7 H-10 V3 Z" fill="#d8dae0" stroke="#50545c" stroke-width="0.9" stroke-linejoin="round" stroke-linecap="round" /><rect x="-8" y="3" width="16" height="2" rx="0" fill="#f4f4f8" stroke="#80848c" stroke-width="0.5" /><rect x="-9" y="6.5" width="18" height="2" rx="0" fill="#a8aab4" stroke="#50545c" stroke-width="0.5" /></g>
<g transform="translate(215,60)"><ellipse cx="1" cy="9" rx="8" ry="2.2" fill="#30323c" stroke="none" stroke-width="1" opacity="0.35"/><ellipse cx="-1" cy="-1" rx="8.5" ry="8.5" fill="#8ab060" stroke="#4a7a30" stroke-width="1" /><ellipse cx="-1" cy="-1" rx="6" ry="6" fill="#9ac070" stroke="#5a8a38" stroke-width="0.8" /><line x1="3" y1="3" x2="8" y2="8" stroke="#c8ccd8" stroke-width="2.6" stroke-linecap="round" /><ellipse cx="-1" cy="-1" rx="4.2" ry="4.2" fill="#c8e0f8" stroke="#6a88b0" stroke-width="1.2" /><ellipse cx="-2" cy="-2" rx="1.6" ry="1.6" fill="#fff" stroke="none" stroke-width="1" /></g>
<g transform="translate(241,60)"><rect x="-9" y="-8" width="18" height="16" rx="0" fill="#e8f0fc" stroke="#3a58b8" stroke-width="1.6" /><line x1="0" y1="-8" x2="0" y2="8" stroke="#3a58b8" stroke-width="1.6" stroke-linecap="round" /><path d="M-7.5 -6.5 H-1 V6.5 H-7.5Z M1 -6.5 H7.5 V6.5 H1Z" fill="#cfe0f8" stroke="none" stroke-width="1" stroke-linejoin="round" stroke-linecap="round" /></g>
<rect x="264" y="50" width="2" height="2" fill="#fdfdff"/><rect x="263" y="49" width="2" height="2" fill="#9a9cb0" opacity=".55"/><rect x="264" y="54" width="2" height="2" fill="#fdfdff"/><rect x="263" y="53" width="2" height="2" fill="#9a9cb0" opacity=".55"/><rect x="264" y="58" width="2" height="2" fill="#fdfdff"/><rect x="263" y="57" width="2" height="2" fill="#9a9cb0" opacity=".55"/><rect x="264" y="62" width="2" height="2" fill="#fdfdff"/><rect x="263" y="61" width="2" height="2" fill="#9a9cb0" opacity=".55"/><rect x="264" y="66" width="2" height="2" fill="#fdfdff"/><rect x="263" y="65" width="2" height="2" fill="#9a9cb0" opacity=".55"/><rect x="264" y="70" width="2" height="2" fill="#fdfdff"/><rect x="263" y="69" width="2" height="2" fill="#9a9cb0" opacity=".55"/>
<g transform="translate(285,60)"><path d="M-9 4 L-1 0 L7 4 L-1 8Z" fill="#e89838" stroke="#7a4a10" stroke-width="0.6" stroke-linejoin="round" stroke-linecap="round" /><path d="M-6 -1 L2 -5 L8 -2 L0 2Z" fill="#48b838" stroke="#20701a" stroke-width="0.6" stroke-linejoin="round" stroke-linecap="round" /><path d="M-4 -5 L3 -8 L8 -6 L1 -2Z" fill="#e8a848" stroke="#7a4a10" stroke-width="0.6" stroke-linejoin="round" stroke-linecap="round" /><path d="M-6 -1 L0 2 L0 4 L-6 1Z" fill="#2a7a20" stroke="none" stroke-width="1" stroke-linejoin="round" stroke-linecap="round" /><path d="M-9 4 L-1 8 L-1 10 L-9 6Z" fill="#b06818" stroke="none" stroke-width="1" stroke-linejoin="round" stroke-linecap="round" /><path d="M7 -8 L11 -5 L7 -1 Z" fill="#d0a070" stroke="#604020" stroke-width="0.6" stroke-linejoin="round" stroke-linecap="round" /></g>
<g transform="translate(311,60)"><path d="M-10 1 L1 -10 L10 -3 L-1 9 Z" fill="#4a4c58" stroke="#181820" stroke-width="1" stroke-linejoin="round" stroke-linecap="round" /><path d="M-10 1 L-1 9 L-1 11 L-10 3Z" fill="#282830" stroke="none" stroke-width="1" stroke-linejoin="round" stroke-linecap="round" /><path d="M-1 9 L10 -3 L10 -1 L-1 11Z" fill="#30323a" stroke="none" stroke-width="1" stroke-linejoin="round" stroke-linecap="round" /><ellipse cx="-3" cy="-1" rx="2" ry="2" fill="#e8e8f0" stroke="#181820" stroke-width="0.6" /><path d="M1 4 L8 -1 L9 2 L3 7 Z" fill="#d828c8" stroke="#701068" stroke-width="0.6" stroke-linejoin="round" stroke-linecap="round" /><path d="M0 -6 L4 -4 L2 -2 L-1 -4Z" fill="#d828c8" stroke="#701068" stroke-width="0.5" stroke-linejoin="round" stroke-linecap="round" /></g>
<g transform="translate(337,60)"><path d="M-9 4 L-1 0 L7 4 L-1 8Z" fill="#e89838" stroke="#7a4a10" stroke-width="0.6" stroke-linejoin="round" stroke-linecap="round" /><path d="M-6 -1 L2 -5 L8 -2 L0 2Z" fill="#48b838" stroke="#20701a" stroke-width="0.6" stroke-linejoin="round" stroke-linecap="round" /><path d="M-4 -5 L3 -8 L8 -6 L1 -2Z" fill="#e8a848" stroke="#7a4a10" stroke-width="0.6" stroke-linejoin="round" stroke-linecap="round" /><path d="M-6 -1 L0 2 L0 4 L-6 1Z" fill="#2a7a20" stroke="none" stroke-width="1" stroke-linejoin="round" stroke-linecap="round" /><path d="M-9 4 L-1 8 L-1 10 L-9 6Z" fill="#b06818" stroke="none" stroke-width="1" stroke-linejoin="round" stroke-linecap="round" /><path d="M7 -8 L11 -5 L7 -1 Z" fill="#d0a070" stroke="#604020" stroke-width="0.6" stroke-linejoin="round" stroke-linecap="round" /><line x1="-8" y1="-9" x2="9" y2="9" stroke="#e81818" stroke-width="1.6" stroke-linecap="round" /></g>
<g transform="translate(363,60)"><path d="M-9 9 V4 H-4 V-3 H4 V4 H9 V9 H5 V6 H-5 V9Z" fill="#9aa098" stroke="#484c48" stroke-width="0.9" stroke-linejoin="round" stroke-linecap="round" /><path d="M-10 -3 H-7 Q-4 -3 -3 -8 H3 Q4 -3 7 -3 H10" fill="none" stroke="#3a68d0" stroke-width="1.8" stroke-linejoin="round" stroke-linecap="round" /><polygon points="1.3,5.0 1.3,-2.4 3.2,-2.4 0.0,-6.0 -3.2,-2.4 -1.3,-2.4 -1.3,5.0" fill="#34c820" stroke="#1c7a10" stroke-width=".6" stroke-linejoin="round"/></g>
<g transform="translate(389,60)"><rect x="-10" y="-9" width="17" height="15" rx="1" fill="#e8f0fc" stroke="#3a68d8" stroke-width="1.6" /><rect x="-8" y="-6" width="9" height="7" rx="0" fill="#f8f8f8" stroke="#707888" stroke-width="0.7" /><rect x="-7" y="2" width="6" height="1.5" rx="0" fill="#a0a8b8" stroke="none" stroke-width="1" /><path d="M-6 6 L2 2 L10 6 L2 10Z" fill="#e89838" stroke="#7a4a10" stroke-width="0.6" stroke-linejoin="round" stroke-linecap="round" /><path d="M-3 1 L5 -3 L11 0 L3 4Z" fill="#48b838" stroke="#20701a" stroke-width="0.6" stroke-linejoin="round" stroke-linecap="round" /><path d="M-1 -3 L6 -6 L11 -4 L4 0Z" fill="#e8a848" stroke="#7a4a10" stroke-width="0.6" stroke-linejoin="round" stroke-linecap="round" /><path d="M-3 1 L3 4 L3 6 L-3 3Z" fill="#2a7a20" stroke="none" stroke-width="1" stroke-linejoin="round" stroke-linecap="round" /><path d="M-6 6 L2 10 L2 12 L-6 8Z" fill="#b06818" stroke="none" stroke-width="1" stroke-linejoin="round" stroke-linecap="round" /></g>
<g transform="translate(415,60)"><ellipse cx="1" cy="9" rx="8" ry="2.2" fill="#30323c" stroke="none" stroke-width="1" opacity="0.35"/><path d="M-10 3 L2 -4 L9 0 L-3 8Z" fill="#e8a038" stroke="#7a4a10" stroke-width="0.7" stroke-linejoin="round" stroke-linecap="round" /><path d="M-10 3 L-3 8 L-3 10 L-10 5Z" fill="#b06818" stroke="none" stroke-width="1" stroke-linejoin="round" stroke-linecap="round" /><path d="M-3 8 L9 0 L9 2 L-3 10Z" fill="#905010" stroke="none" stroke-width="1" stroke-linejoin="round" stroke-linecap="round" /><path d="M-2 1 Q-1 -7 5 -7 L5 -10 L11 -5 L5 0 L5 -3 Q2 -3 2 2Z" fill="#38c428" stroke="#187a10" stroke-width="0.7" stroke-linejoin="round" stroke-linecap="round" /></g>
<g transform="translate(441,60)"><defs><radialGradient id="rb" cx=".5" cy=".1" r=".9"><stop offset="0" stop-color="#e81818"/><stop offset=".3" stop-color="#f0e020"/><stop offset=".6" stop-color="#30c030"/><stop offset="1" stop-color="#108838"/></radialGradient></defs><path d="M-9 -2 Q-8 -9 0 -9 Q8 -9 10 0 L8 9 Q4 6 2 8 Q-4 9 -9 4 Z" fill="url(#rb)" stroke="#101010" stroke-width="1.2" stroke-linejoin="round" stroke-linecap="round" /><path d="M-2 -8 L1 -8 L3 2 L-1 5 L-4 1Z" fill="#e83018" stroke="none" stroke-width="1" stroke-linejoin="round" stroke-linecap="round" /><path d="M-1 -8 L1 -8 L1 -2 L-1 0Z" fill="#d01010" stroke="none" stroke-width="1" stroke-linejoin="round" stroke-linecap="round" /></g>
<g transform="translate(467,60)"><ellipse cx="1" cy="9" rx="8" ry="2.2" fill="#30323c" stroke="none" stroke-width="1" opacity="0.35"/><path d="M-9 -2 L-2 -9 L5 -8 L10 -2 L9 8 L-2 10 L-9 6Z" fill="#c818c0" stroke="#500850" stroke-width="1" stroke-linejoin="round" stroke-linecap="round" /><path d="M-9 -2 L-3 1 L-2 10 L-9 6Z" fill="#a010a0" stroke="none" stroke-width="1" stroke-linejoin="round" stroke-linecap="round" /><path d="M-3 1 L5 -2 L10 -2 L9 8 L-2 10Z" fill="#b014b0" stroke="none" stroke-width="1" stroke-linejoin="round" stroke-linecap="round" /><path d="M-3 1 V10 M1 0 V9.5 M5 -1 V9" fill="none" stroke="#701070" stroke-width="0.7" stroke-linejoin="round" stroke-linecap="round" /><path d="M-2 -9 L-3 1 L5 -2 L5 -8Z" fill="#e040e0" stroke="none" stroke-width="1" stroke-linejoin="round" stroke-linecap="round" /></g>
<g transform="translate(493,60)"><ellipse cx="1" cy="9" rx="8" ry="2.2" fill="#30323c" stroke="none" stroke-width="1" opacity="0.35"/><path d="M-9 3 L0 -1 L9 3 L0 8Z" fill="#50545c" stroke="#181a20" stroke-width="0.8" stroke-linejoin="round" stroke-linecap="round" /><path d="M-9 3 V6 L0 11 V8Z" fill="#34363c" stroke="none" stroke-width="1" stroke-linejoin="round" stroke-linecap="round" /><path d="M0 8 L9 3 V6 L0 11Z" fill="#282a30" stroke="none" stroke-width="1" stroke-linejoin="round" stroke-linecap="round" /><path d="M-8 -2 L0 -5 L8 -2 L0 2Z" fill="#60646c" stroke="#181a20" stroke-width="0.8" stroke-linejoin="round" stroke-linecap="round" /><path d="M-8 -2 V1 L0 5 V2Z" fill="#40444c" stroke="none" stroke-width="1" stroke-linejoin="round" stroke-linecap="round" /><path d="M0 2 L8 -2 V1 L0 5Z" fill="#30323a" stroke="none" stroke-width="1" stroke-linejoin="round" stroke-linecap="round" /><rect x="-5" y="-10" width="2" height="7" rx="0" fill="#383a42" stroke="none" stroke-width="1" /><rect x="3" y="-8" width="2" height="6" rx="0" fill="#383a42" stroke="none" stroke-width="1" /><rect x="-1" y="-7" width="2" height="5" rx="0" fill="#50545c" stroke="none" stroke-width="1" /></g>
<g transform="translate(519,60)"><path d="M-9 -1 A9 9 0 0 0 2 10" fill="none" stroke="#404040" stroke-width="1" stroke-linejoin="round" stroke-linecap="round" stroke-dasharray="1 1.6"/><path d="M-4 -8 L5 -10 L9 -4 L7 4 L-2 6Z" fill="#c838c0" stroke="#601060" stroke-width="0.8" stroke-linejoin="round" stroke-linecap="round" /><path d="M-2 -3 L7 -6 L10 2 L1 6Z" fill="#8a8c98" stroke="#404450" stroke-width="0.8" stroke-linejoin="round" stroke-linecap="round" /><path d="M5 -8 L10 -7 L10 3 L7 4Z" fill="#3a50b8" stroke="#182868" stroke-width="0.7" stroke-linejoin="round" stroke-linecap="round" /><path d="M-8 -9 L-2 -7 L-4 -3 L-9 -6Z" fill="#e060d8" stroke="#601060" stroke-width="0.6" stroke-linejoin="round" stroke-linecap="round" /></g>
<rect x="544" y="50" width="2" height="2" fill="#fdfdff"/><rect x="543" y="49" width="2" height="2" fill="#9a9cb0" opacity=".55"/><rect x="544" y="54" width="2" height="2" fill="#fdfdff"/><rect x="543" y="53" width="2" height="2" fill="#9a9cb0" opacity=".55"/><rect x="544" y="58" width="2" height="2" fill="#fdfdff"/><rect x="543" y="57" width="2" height="2" fill="#9a9cb0" opacity=".55"/><rect x="544" y="62" width="2" height="2" fill="#fdfdff"/><rect x="543" y="61" width="2" height="2" fill="#9a9cb0" opacity=".55"/><rect x="544" y="66" width="2" height="2" fill="#fdfdff"/><rect x="543" y="65" width="2" height="2" fill="#9a9cb0" opacity=".55"/><rect x="544" y="70" width="2" height="2" fill="#fdfdff"/><rect x="543" y="69" width="2" height="2" fill="#9a9cb0" opacity=".55"/>
<g transform="translate(563,60)"><g transform="translate(0,-0.5) scale(0.9)"><ellipse cx="1" cy="9" rx="8" ry="2.2" fill="#30323c" stroke="none" stroke-width="1" opacity="0.35"/><path d="M-8.0 -4.0 L-1.0 -8.0 L8.0 -5.0 L2.0 -1.0 Z" fill="#e6e6e4" stroke="#3c3c3c" stroke-width="0.8" stroke-linejoin="round" stroke-linecap="round" /><path d="M-8.0 -4.0 L2.0 -1.0 L2.0 9.0 L-7.0 5.0 Z" fill="#a2a49e" stroke="#3c3c3c" stroke-width="0.8" stroke-linejoin="round" stroke-linecap="round" /><path d="M2.0 -1.0 L8.0 -5.0 L8.0 4.0 L2.0 9.0 Z" fill="#70726c" stroke="#3c3c3c" stroke-width="0.8" stroke-linejoin="round" stroke-linecap="round" /></g></g>
<g transform="translate(589,60)"><g transform="translate(0,-0.5) scale(0.9)"><ellipse cx="1" cy="9" rx="8" ry="2.2" fill="#30323c" stroke="none" stroke-width="1" opacity="0.35"/><path d="M-6 -6.0 L-6 6.0 A6 2.6 0 0 0 6 6.0 L6 -6.0 Z" fill="#b8bab4" stroke="#4a4a4a" stroke-width="0.9" stroke-linejoin="round" stroke-linecap="round" /><path d="M1.7999999999999998 -4.0 L1.7999999999999998 8.2 A6 2.6 0 0 0 6 6.0 L6 -6.0 Z" fill="#7c7e78" stroke="none" stroke-width="1" stroke-linejoin="round" stroke-linecap="round" /><ellipse cx="0" cy="-6.0" rx="6" ry="2.6" fill="#e4e4e2" stroke="#4a4a4a" stroke-width="0.9" /></g></g>
<g transform="translate(615,60)"><g transform="translate(0,-0.5) scale(0.9)"><ellipse cx="1" cy="9" rx="8" ry="2.2" fill="#30323c" stroke="none" stroke-width="1" opacity="0.35"/><path d="M-7 -5 L-2 -9 L5 -8 L8 -4 V5 L3 9 L-4 8 L-7 4Z" fill="#8a8c86" stroke="#3c3c3c" stroke-width="0.8" stroke-linejoin="round" stroke-linecap="round" /><path d="M-7 -5 L-2 -9 L5 -8 L8 -4 L3 0 L-4 -1Z" fill="#e2e2e0" stroke="#3c3c3c" stroke-width="0.8" stroke-linejoin="round" stroke-linecap="round" /><path d="M-7 -5 L-4 -1 V8 L-7 4Z" fill="#b0b2ac" stroke="#3c3c3c" stroke-width="0.7" stroke-linejoin="round" stroke-linecap="round" /><path d="M-4 -1 L3 0 V9 L-4 8Z" fill="#989a94" stroke="#3c3c3c" stroke-width="0.7" stroke-linejoin="round" stroke-linecap="round" /></g></g>
<g transform="translate(641,60)"><g transform="translate(0,-0.5) scale(0.9)"><ellipse cx="1" cy="9" rx="8" ry="2.2" fill="#30323c" stroke="none" stroke-width="1" opacity="0.35"/><path d="M-4 -7 L-9 7 A9 2.6 0 0 0 9 7 L4 -7Z" fill="#b0b2aa" stroke="#3c3c3c" stroke-width="0.9" stroke-linejoin="round" stroke-linecap="round" /><path d="M1 -6 L3 9.4 A9 2.6 0 0 0 9 7 L4 -7Z" fill="#82847e" stroke="none" stroke-width="1" stroke-linejoin="round" stroke-linecap="round" /><ellipse cx="0" cy="-7" rx="4" ry="1.6" fill="#ecece8" stroke="#3c3c3c" stroke-width="0.8" /></g></g>
<g transform="translate(667,60)"><g transform="translate(0,-0.5) scale(0.9)"><ellipse cx="1" cy="9" rx="7" ry="2" fill="#30323c" stroke="none" stroke-width="1" opacity="0.35"/><defs><radialGradient id="sg" cx=".35" cy=".3" r=".75"><stop offset="0" stop-color="#ffffff"/><stop offset=".5" stop-color="#c8c8c4"/><stop offset="1" stop-color="#70726c"/></radialGradient></defs><ellipse cx="0" cy="-1" rx="8.5" ry="8.5" fill="url(#sg)" stroke="#50524e" stroke-width="0.7" /></g></g>
<g transform="translate(693,60)"><g transform="translate(0,-0.5) scale(0.9)"><ellipse cx="1" cy="7" rx="9" ry="2.5" fill="#30323c" stroke="none" stroke-width="1" opacity="0.35"/><ellipse cx="0" cy="0" rx="9.5" ry="6" fill="#a0a29c" stroke="#484a46" stroke-width="0.9" /><path d="M-9.5 0 A9.5 6 0 0 0 9.5 0 A9.5 4.5 0 0 1 -9.5 0" fill="#7a7c76" stroke="none" stroke-width="1" stroke-linejoin="round" stroke-linecap="round" /><ellipse cx="0" cy="-1" rx="4" ry="2" fill="#686a66" stroke="#404240" stroke-width="0.7" /><path d="M-7 -3 A8 4 0 0 1 5 -4.5" fill="none" stroke="#e8e8e4" stroke-width="1.4" stroke-linejoin="round" stroke-linecap="round" /></g></g>
<g transform="translate(719,60)"><ellipse cx="3" cy="9" rx="7" ry="2" fill="#30323c" stroke="none" stroke-width="1" opacity="0.35"/><path d="M-8.4 -6.2 L-2.8 -9.4 L4.4 -7.0 L-0.4 -3.8 Z" fill="#e6e6e4" stroke="#2a58b0" stroke-width="1.1" stroke-linejoin="round" stroke-linecap="round" /><path d="M-8.4 -6.2 L-0.4 -3.8 L-0.4 4.2 L-7.6 1.0 Z" fill="#a2a49e" stroke="#2a58b0" stroke-width="1.1" stroke-linejoin="round" stroke-linecap="round" /><path d="M-0.4 -3.8 L4.4 -7.0 L4.4 0.2 L-0.4 4.2 Z" fill="#70726c" stroke="#2a58b0" stroke-width="1.1" stroke-linejoin="round" stroke-linecap="round" /><ellipse cx="4" cy="4" rx="5.2" ry="5.2" fill="#e8e8ec" stroke="#2a58b0" stroke-width="1.2" /><ellipse cx="3" cy="3" rx="2" ry="2" fill="#fff" stroke="none" stroke-width="1" opacity=".8"/></g>
<g transform="translate(745,60)"><ellipse cx="3" cy="9" rx="7" ry="2" fill="#30323c" stroke="none" stroke-width="1" opacity="0.35"/><path d="M-8.4 -6.2 L-2.8 -9.4 L4.4 -7.0 L-0.4 -3.8 Z" fill="#e6e6e4" stroke="#2a58b0" stroke-width="1.1" stroke-linejoin="round" stroke-linecap="round" /><path d="M-8.4 -6.2 L-0.4 -3.8 L-0.4 4.2 L-7.6 1.0 Z" fill="#a2a49e" stroke="#2a58b0" stroke-width="1.1" stroke-linejoin="round" stroke-linecap="round" /><path d="M-0.4 -3.8 L4.4 -7.0 L4.4 0.2 L-0.4 4.2 Z" fill="#70726c" stroke="#2a58b0" stroke-width="1.1" stroke-linejoin="round" stroke-linecap="round" /><ellipse cx="4" cy="4" rx="5.2" ry="5.2" fill="#e4e8ec" stroke="#2a58b0" stroke-width="1.2" /><path d="M0 1 L4 -1 L8 3 L3 8 Z" fill="#30b838" stroke="#107018" stroke-width="0.6" stroke-linejoin="round" stroke-linecap="round" /></g>
<g transform="translate(771,60)"><ellipse cx="3" cy="9" rx="7" ry="2" fill="#30323c" stroke="none" stroke-width="1" opacity="0.35"/><path d="M-8.4 -6.2 L-2.8 -9.4 L4.4 -7.0 L-0.4 -3.8 Z" fill="#e6e6e4" stroke="#2a58b0" stroke-width="1.1" stroke-linejoin="round" stroke-linecap="round" /><path d="M-8.4 -6.2 L-0.4 -3.8 L-0.4 4.2 L-7.6 1.0 Z" fill="#a2a49e" stroke="#2a58b0" stroke-width="1.1" stroke-linejoin="round" stroke-linecap="round" /><path d="M-0.4 -3.8 L4.4 -7.0 L4.4 0.2 L-0.4 4.2 Z" fill="#70726c" stroke="#2a58b0" stroke-width="1.1" stroke-linejoin="round" stroke-linecap="round" /><ellipse cx="4" cy="4" rx="5.2" ry="5.2" fill="#c8ccd4" stroke="#9098a8" stroke-width="0.8" opacity=".8"/></g>
<g transform="translate(797,60)"><ellipse cx="1" cy="9" rx="8" ry="2.2" fill="#30323c" stroke="none" stroke-width="1" opacity="0.35"/><path d="M-8.4 -4.2 L-1.1 -8.4 L8.4 -5.2 L2.1 -1.1 Z" fill="#e8ecf4" stroke="#4a90e0" stroke-width="1.6" stroke-linejoin="round" stroke-linecap="round" /><path d="M-8.4 -4.2 L2.1 -1.1 L2.1 9.5 L-7.4 5.2 Z" fill="#a0a4a0" stroke="#4a90e0" stroke-width="1.6" stroke-linejoin="round" stroke-linecap="round" /><path d="M2.1 -1.1 L8.4 -5.2 L8.4 4.2 L2.1 9.5 Z" fill="#747870" stroke="#4a90e0" stroke-width="1.6" stroke-linejoin="round" stroke-linecap="round" /></g>
<g transform="translate(823,60)"><ellipse cx="1" cy="9" rx="8" ry="2.2" fill="#30323c" stroke="none" stroke-width="1" opacity="0.35"/><path d="M-8.0 -4.0 L-1.0 -8.0 L8.0 -5.0 L2.0 -1.0 Z" fill="#e6e6e4" stroke="#3c3c3c" stroke-width="0.8" stroke-linejoin="round" stroke-linecap="round" /><path d="M-8.0 -4.0 L2.0 -1.0 L2.0 9.0 L-7.0 5.0 Z" fill="#a2a49e" stroke="#3c3c3c" stroke-width="0.8" stroke-linejoin="round" stroke-linecap="round" /><path d="M2.0 -1.0 L8.0 -5.0 L8.0 4.0 L2.0 9.0 Z" fill="#70726c" stroke="#3c3c3c" stroke-width="0.8" stroke-linejoin="round" stroke-linecap="round" /><path d="M-8 -4 L2 -1 L8 -5" fill="none" stroke="#3a78d8" stroke-width="2" stroke-linejoin="round" stroke-linecap="round" /><path d="M2 -1 Q4 -6 8 -5" fill="#a8c8f0" stroke="#3a78d8" stroke-width="1" stroke-linejoin="round" stroke-linecap="round" /></g>
<g transform="translate(849,60)"><path d="M-8 9 V1 Q-7 -5 -1 -4 Q3 -3 2 4 V6" fill="#e4ecfa" stroke="#2a50a8" stroke-width="1.3" stroke-linejoin="round" stroke-linecap="round" /><path d="M-8 1 L-1 -6 Q5 -11 8 -5 L8 3 L2 6 M2 -3 L8 -5 M-1 -4 L5 -9" fill="none" stroke="#2a50a8" stroke-width="1.2" stroke-linejoin="round" stroke-linecap="round" /><path d="M-1 -4 Q3 -3 2 4 L8 -1 Q9 -8 5 -9Z" fill="#c8d8f4" stroke="none" stroke-width="1" stroke-linejoin="round" stroke-linecap="round" opacity=".7"/></g>
<g transform="translate(875,60)"><ellipse cx="1" cy="9" rx="8" ry="2.2" fill="#30323c" stroke="none" stroke-width="1" opacity="0.35"/><path d="M-8.0 -4.0 L-1.0 -8.0 L8.0 -5.0 L2.0 -1.0 Z" fill="#e6e6e4" stroke="#3c3c3c" stroke-width="0.8" stroke-linejoin="round" stroke-linecap="round" /><path d="M-8.0 -4.0 L2.0 -1.0 L2.0 9.0 L-7.0 5.0 Z" fill="#a2a49e" stroke="#3c3c3c" stroke-width="0.8" stroke-linejoin="round" stroke-linecap="round" /><path d="M2.0 -1.0 L8.0 -5.0 L8.0 4.0 L2.0 9.0 Z" fill="#70726c" stroke="#3c3c3c" stroke-width="0.8" stroke-linejoin="round" stroke-linecap="round" /><path d="M-8 -4 L-1 -8 L8 -5 L2 -1Z" fill="#4a88e0" stroke="#2048a0" stroke-width="0.8" stroke-linejoin="round" stroke-linecap="round" /><path d="M-8 -4 Q-3 -10 2 -9 Q6 -9 8 -5" fill="#78a8ec" stroke="#2048a0" stroke-width="0.8" stroke-linejoin="round" stroke-linecap="round" /></g>
<g transform="translate(901,60)"><ellipse cx="1" cy="9" rx="8" ry="2.2" fill="#30323c" stroke="none" stroke-width="1" opacity="0.35"/><path d="M-8.0 -4.0 L-1.0 -8.0 L8.0 -5.0 L2.0 -1.0 Z" fill="#e6e6e4" stroke="#3c3c3c" stroke-width="0.8" stroke-linejoin="round" stroke-linecap="round" /><path d="M-8.0 -4.0 L2.0 -1.0 L2.0 9.0 L-7.0 5.0 Z" fill="#a2a49e" stroke="#3c3c3c" stroke-width="0.8" stroke-linejoin="round" stroke-linecap="round" /><path d="M2.0 -1.0 L8.0 -5.0 L8.0 4.0 L2.0 9.0 Z" fill="#70726c" stroke="#3c3c3c" stroke-width="0.8" stroke-linejoin="round" stroke-linecap="round" /><path d="M-1 -8 L8 -5 L4 -2 L-2 -5Z" fill="#f0a848" stroke="#905010" stroke-width="0.7" stroke-linejoin="round" stroke-linecap="round" /><path d="M-4 -6 L-2 -5 V8 L-4 7Z" fill="#3a78d8" stroke="#1a3c98" stroke-width="0.5" stroke-linejoin="round" stroke-linecap="round" /></g>
<g transform="translate(927,60)"><ellipse cx="1" cy="9" rx="8" ry="2.2" fill="#30323c" stroke="none" stroke-width="1" opacity="0.35"/><path d="M-8.0 -4.0 L-1.0 -8.0 L8.0 -5.0 L2.0 -1.0 Z" fill="#e6e6e4" stroke="#3c3c3c" stroke-width="0.8" stroke-linejoin="round" stroke-linecap="round" /><path d="M-8.0 -4.0 L2.0 -1.0 L2.0 9.0 L-7.0 5.0 Z" fill="#a2a49e" stroke="#3c3c3c" stroke-width="0.8" stroke-linejoin="round" stroke-linecap="round" /><path d="M2.0 -1.0 L8.0 -5.0 L8.0 4.0 L2.0 9.0 Z" fill="#70726c" stroke="#3c3c3c" stroke-width="0.8" stroke-linejoin="round" stroke-linecap="round" /><path d="M2 -1 L8 -5 V0 L5 3 L2 2Z" fill="#f0a848" stroke="#905010" stroke-width="0.7" stroke-linejoin="round" stroke-linecap="round" /><path d="M2 -1 V3" fill="none" stroke="#3a78d8" stroke-width="1.4" stroke-linejoin="round" stroke-linecap="round" /></g>
<g transform="translate(953,60)"><path d="M-7.2 -2.6 L-0.9 -6.2 L7.2 -3.5 L1.8 0.1 Z" fill="#a8d0f8" stroke="#2058c0" stroke-width="0.8" stroke-linejoin="round" stroke-linecap="round" /><path d="M-7.2 -2.6 L1.8 0.1 L1.8 9.1 L-6.3 5.5 Z" fill="#78b0f0" stroke="#2058c0" stroke-width="0.8" stroke-linejoin="round" stroke-linecap="round" /><path d="M1.8 0.1 L7.2 -3.5 L7.2 4.6 L1.8 9.1 Z" fill="#4888e0" stroke="#2058c0" stroke-width="0.8" stroke-linejoin="round" stroke-linecap="round" /><polygon points="1.2,0.0 1.2,-6.6 3.1,-6.6 0.0,-10.0 -3.1,-6.6 -1.2,-6.6 -1.2,-0.0" fill="#34c820" stroke="#1c7a10" stroke-width=".6" stroke-linejoin="round"/><polygon points="-2.6,2.0 -6.6,4.3 -7.6,2.7 -9.0,7.0 -4.5,8.0 -5.5,6.4 -1.4,4.0" fill="#34c820" stroke="#1c7a10" stroke-width=".6" stroke-linejoin="round"/><polygon points="2.5,4.1 6.4,5.8 5.7,7.5 10.0,6.0 8.1,1.8 7.3,3.6 3.5,1.9" fill="#34c820" stroke="#1c7a10" stroke-width=".6" stroke-linejoin="round"/></g>
<g transform="translate(979,60)"><path d="M-6 -5 L6 -9 L10 -5 L-2 -1Z" fill="#8ab8f0" stroke="#2a58c0" stroke-width="0.9" stroke-linejoin="round" stroke-linecap="round" /><path d="M-9 6 L1 3 L5 6 L-5 9Z" fill="#b8d4f8" stroke="#4a78d0" stroke-width="0.7" stroke-linejoin="round" stroke-linecap="round" /><polygon points="1.3,8.0 1.3,0.6 3.2,0.6 0.0,-3.0 -3.2,0.6 -1.3,0.6 -1.3,8.0" fill="#34c820" stroke="#1c7a10" stroke-width=".6" stroke-linejoin="round"/></g>
<g transform="translate(1005,60)"><path d="M-7 -4 L7 -9 L10 -6 L-4 -1Z" fill="#8ab8f0" stroke="#2a58c0" stroke-width="0.9" stroke-linejoin="round" stroke-linecap="round" /><path d="M-8 5 L2 2 L6 5 L-4 9Z" fill="#b8d4f8" stroke="#4a78d0" stroke-width="0.7" stroke-linejoin="round" stroke-linecap="round" /><polygon points="-3.9,6.0 -3.9,0.2 -2.1,0.2 -5.0,-3.0 -7.9,0.2 -6.1,0.2 -6.1,6.0" fill="#34c820" stroke="#1c7a10" stroke-width=".6" stroke-linejoin="round"/><polygon points="7.1,3.0 7.1,-2.8 8.9,-2.8 6.0,-6.0 3.1,-2.8 4.9,-2.8 4.9,3.0" fill="#34c820" stroke="#1c7a10" stroke-width=".6" stroke-linejoin="round"/><polygon points="-6.6,2.3 -7.6,1.7 -6.8,0.5 -10.0,1.0 -9.2,4.1 -8.4,3.0 -7.4,3.7" fill="#34c820" stroke="#1c7a10" stroke-width=".6" stroke-linejoin="round"/></g>
<g transform="translate(1031,60)"><ellipse cx="1" cy="9" rx="8" ry="2.2" fill="#30323c" stroke="none" stroke-width="1" opacity="0.35"/><path d="M-8.0 -4.0 L-1.0 -8.0 L8.0 -5.0 L2.0 -1.0 Z" fill="#f0e848" stroke="#3c3c3c" stroke-width="0.8" stroke-linejoin="round" stroke-linecap="round" /><path d="M-8.0 -4.0 L2.0 -1.0 L2.0 9.0 L-7.0 5.0 Z" fill="#a2a49e" stroke="#3c3c3c" stroke-width="0.8" stroke-linejoin="round" stroke-linecap="round" /><path d="M2.0 -1.0 L8.0 -5.0 L8.0 4.0 L2.0 9.0 Z" fill="#70726c" stroke="#3c3c3c" stroke-width="0.8" stroke-linejoin="round" stroke-linecap="round" /><path d="M-4 -4.5 L-0.5 -6.5 L4 -5 L1.5 -3Z" fill="#a0a29a" stroke="#606058" stroke-width="0.5" stroke-linejoin="round" stroke-linecap="round" /></g>
<g transform="translate(1057,60)"><rect x="-9" y="-9" width="18" height="18" rx="0" fill="#7a8aa8" stroke="#4a5878" stroke-width="0.8" /><path d="M-9 9 V3 H-4 Q-3 -3 0 -3 Q3 -3 4 3 H9 V9Z" fill="#9a9c94" stroke="#404440" stroke-width="0.9" stroke-linejoin="round" stroke-linecap="round" /><path d="M-9 -2 H-5 Q-3 -8 0 -8 Q3 -8 5 -2 H9" fill="none" stroke="#dce4f4" stroke-width="1.2" stroke-linejoin="round" stroke-linecap="round" /></g>
<g transform="translate(1083,60)"><path d="M-6.8 -0.4 L-0.8 -3.8 L6.8 -1.2 L1.7 2.1 Z" fill="#a8c8f0" stroke="#2a4890" stroke-width="0.8" stroke-linejoin="round" stroke-linecap="round" /><path d="M-6.8 -0.4 L1.7 2.1 L1.7 10.6 L-6.0 7.2 Z" fill="#5a88d0" stroke="#2a4890" stroke-width="0.8" stroke-linejoin="round" stroke-linecap="round" /><path d="M1.7 2.1 L6.8 -1.2 L6.8 6.4 L1.7 10.6 Z" fill="#3a68b8" stroke="#2a4890" stroke-width="0.8" stroke-linejoin="round" stroke-linecap="round" /><path d="M-7.2 -3.2 Q-5.4 -7.7 -0.9 -9.5 Q3.6 -11.3 7.2 -8.6 L7.2 -4.1 Q4.5 -3.2 2.7 -4.1 L-1.8 -2.3 Q-5.4 -0.5 -7.2 -3.2 Z" fill="#f4c878" stroke="#a87020" stroke-width="0.8" stroke-linejoin="round" stroke-linecap="round" /><path d="M-0.9 -5.9 L3.6 -6.8 M0.0 -4.1 L4.5 -5.0" fill="none" stroke="#a87020" stroke-width="0.6" stroke-linejoin="round" stroke-linecap="round" /></g>
<g transform="translate(1109,60)"><path d="M-9.4 -7.2 L-5.5 -9.4 L-0.6 -7.8 L-3.9 -5.5 Z" fill="#e6e6e4" stroke="#3c3c3c" stroke-width="0.8" stroke-linejoin="round" stroke-linecap="round" /><path d="M-9.4 -7.2 L-3.9 -5.5 L-3.9 -0.0 L-8.9 -2.2 Z" fill="#a2a49e" stroke="#3c3c3c" stroke-width="0.8" stroke-linejoin="round" stroke-linecap="round" /><path d="M-3.9 -5.5 L-0.6 -7.8 L-0.6 -2.8 L-3.9 -0.0 Z" fill="#70726c" stroke="#3c3c3c" stroke-width="0.8" stroke-linejoin="round" stroke-linecap="round" /><path d="M-3.4 -8.2 L0.4 -10.4 L5.4 -8.8 L2.1 -6.5 Z" fill="#e6e6e4" stroke="#3c3c3c" stroke-width="0.8" stroke-linejoin="round" stroke-linecap="round" /><path d="M-3.4 -8.2 L2.1 -6.5 L2.1 -1.0 L-2.9 -3.2 Z" fill="#a2a49e" stroke="#3c3c3c" stroke-width="0.8" stroke-linejoin="round" stroke-linecap="round" /><path d="M2.1 -6.5 L5.4 -8.8 L5.4 -3.8 L2.1 -1.0 Z" fill="#70726c" stroke="#3c3c3c" stroke-width="0.8" stroke-linejoin="round" stroke-linecap="round" /><path d="M-1.6 1.2 L3.3 -1.6 L9.6 0.5 L5.4 3.3 Z" fill="#e6e6e4" stroke="#3c3c3c" stroke-width="0.8" stroke-linejoin="round" stroke-linecap="round" /><path d="M-1.6 1.2 L5.4 3.3 L5.4 10.3 L-0.9 7.5 Z" fill="#a2a49e" stroke="#3c3c3c" stroke-width="0.8" stroke-linejoin="round" stroke-linecap="round" /><path d="M5.4 3.3 L9.6 0.5 L9.6 6.8 L5.4 10.3 Z" fill="#70726c" stroke="#3c3c3c" stroke-width="0.8" stroke-linejoin="round" stroke-linecap="round" /><path d="M-9 0 L-4 0 L-4 4 L0 4 L0 2 L5 6 L0 10 L0 8 L-9 8Z" fill="#38c428" stroke="#187a10" stroke-width="0.6" stroke-linejoin="round" stroke-linecap="round" /></g>
<g transform="translate(1135,60)"><path d="M-5.4 -0.2 L0.2 -3.4 L7.4 -1.0 L2.6 2.2 Z" fill="#d08080" stroke="#603030" stroke-width="0.8" stroke-linejoin="round" stroke-linecap="round" /><path d="M-5.4 -0.2 L2.6 2.2 L2.6 10.2 L-4.6 7.0 Z" fill="#b05858" stroke="#603030" stroke-width="0.8" stroke-linejoin="round" stroke-linecap="round" /><path d="M2.6 2.2 L7.4 -1.0 L7.4 6.2 L2.6 10.2 Z" fill="#8a4040" stroke="#603030" stroke-width="0.8" stroke-linejoin="round" stroke-linecap="round" /><path d="M-6.2 -3.2 Q-4.4 -7.7 0.1 -9.5 Q4.6 -11.3 8.2 -8.6 L8.2 -4.1 Q5.5 -3.2 3.7 -4.1 L-0.8 -2.3 Q-4.4 -0.5 -6.2 -3.2 Z" fill="#f4c878" stroke="#a87020" stroke-width="0.8" stroke-linejoin="round" stroke-linecap="round" /><path d="M0.1 -5.9 L4.6 -6.8 M1.0 -4.1 L5.5 -5.0" fill="none" stroke="#a87020" stroke-width="0.6" stroke-linejoin="round" stroke-linecap="round" /><path d="M-10 0 L-7 -2 L-5 4 L0 -4 L2 -2 L-5 9Z" fill="#38c428" stroke="#187a10" stroke-width="0.6" stroke-linejoin="round" stroke-linecap="round" /></g>
<g transform="translate(1161,60)"><path d="M-10.0 -8.0 L-6.5 -10.0 L-2.0 -8.5 L-5.0 -6.5 Z" fill="#c8e0f8" stroke="#3a68c0" stroke-width="0.8" stroke-linejoin="round" stroke-linecap="round" /><path d="M-10.0 -8.0 L-5.0 -6.5 L-5.0 -1.5 L-9.5 -3.5 Z" fill="#88b8f0" stroke="#3a68c0" stroke-width="0.8" stroke-linejoin="round" stroke-linecap="round" /><path d="M-5.0 -6.5 L-2.0 -8.5 L-2.0 -4.0 L-5.0 -1.5 Z" fill="#5890e0" stroke="#3a68c0" stroke-width="0.8" stroke-linejoin="round" stroke-linecap="round" /><path d="M-1.2 1.4 L3.4 -1.2 L9.2 0.8 L5.3 3.4 Z" fill="#e6e6e4" stroke="#3c3c3c" stroke-width="0.8" stroke-linejoin="round" stroke-linecap="round" /><path d="M-1.2 1.4 L5.3 3.4 L5.3 9.9 L-0.5 7.2 Z" fill="#a2a49e" stroke="#3c3c3c" stroke-width="0.8" stroke-linejoin="round" stroke-linecap="round" /><path d="M5.3 3.4 L9.2 0.8 L9.2 6.6 L5.3 9.9 Z" fill="#70726c" stroke="#3c3c3c" stroke-width="0.8" stroke-linejoin="round" stroke-linecap="round" /><polygon points="-4.6,-1.2 -1.1,1.2 -2.0,2.6 2.0,2.0 1.0,-1.9 0.1,-0.5 -3.4,-2.8" fill="#34c820" stroke="#1c7a10" stroke-width=".6" stroke-linejoin="round"/></g>
<g transform="translate(1187,60)"><ellipse cx="1" cy="9" rx="8" ry="2.2" fill="#30323c" stroke="none" stroke-width="1" opacity="0.35"/><path d="M-9 0 L-3 -6 L8 -4 L10 2 L3 9 L-6 7Z" fill="#8a8e94" stroke="#404448" stroke-width="0.9" stroke-linejoin="round" stroke-linecap="round" /><path d="M-4 0 L3 -1 L5 3 L-1 5Z" fill="#78a8e8" stroke="#2a58b0" stroke-width="0.7" stroke-linejoin="round" stroke-linecap="round" /><path d="M4 -10 L10 -9 L7 -5 L10 -5 L3 2 L5 -3 L2 -3Z" fill="#f8e028" stroke="#907800" stroke-width="0.6" stroke-linejoin="round" stroke-linecap="round" /><text x="-2" y="4" font-family="Liberation Sans,sans-serif" font-weight="bold" font-size="6" fill="#102050">N</text></g>
<g transform="translate(1213,60)"><path d="M-10.0 -8.0 L-6.5 -10.0 L-2.0 -8.5 L-5.0 -6.5 Z" fill="#e6e6e4" stroke="#3c3c3c" stroke-width="0.8" stroke-linejoin="round" stroke-linecap="round" /><path d="M-10.0 -8.0 L-5.0 -6.5 L-5.0 -1.5 L-9.5 -3.5 Z" fill="#a2a49e" stroke="#3c3c3c" stroke-width="0.8" stroke-linejoin="round" stroke-linecap="round" /><path d="M-5.0 -6.5 L-2.0 -8.5 L-2.0 -4.0 L-5.0 -1.5 Z" fill="#70726c" stroke="#3c3c3c" stroke-width="0.8" stroke-linejoin="round" stroke-linecap="round" /><path d="M-1.2 1.4 L3.4 -1.2 L9.2 0.8 L5.3 3.4 Z" fill="#c8e0f8" stroke="#3a68c0" stroke-width="0.8" stroke-linejoin="round" stroke-linecap="round" /><path d="M-1.2 1.4 L5.3 3.4 L5.3 9.9 L-0.5 7.2 Z" fill="#88b8f0" stroke="#3a68c0" stroke-width="0.8" stroke-linejoin="round" stroke-linecap="round" /><path d="M5.3 3.4 L9.2 0.8 L9.2 6.6 L5.3 9.9 Z" fill="#5890e0" stroke="#3a68c0" stroke-width="0.8" stroke-linejoin="round" stroke-linecap="round" /><polygon points="-4.6,-1.2 -1.1,1.2 -2.0,2.6 2.0,2.0 1.0,-1.9 0.1,-0.5 -3.4,-2.8" fill="#34c820" stroke="#1c7a10" stroke-width=".6" stroke-linejoin="round"/></g>
<rect x="1238" y="50" width="2" height="2" fill="#fdfdff"/><rect x="1237" y="49" width="2" height="2" fill="#9a9cb0" opacity=".55"/><rect x="1238" y="54" width="2" height="2" fill="#fdfdff"/><rect x="1237" y="53" width="2" height="2" fill="#9a9cb0" opacity=".55"/><rect x="1238" y="58" width="2" height="2" fill="#fdfdff"/><rect x="1237" y="57" width="2" height="2" fill="#9a9cb0" opacity=".55"/><rect x="1238" y="62" width="2" height="2" fill="#fdfdff"/><rect x="1237" y="61" width="2" height="2" fill="#9a9cb0" opacity=".55"/><rect x="1238" y="66" width="2" height="2" fill="#fdfdff"/><rect x="1237" y="65" width="2" height="2" fill="#9a9cb0" opacity=".55"/><rect x="1238" y="70" width="2" height="2" fill="#fdfdff"/><rect x="1237" y="69" width="2" height="2" fill="#9a9cb0" opacity=".55"/>
<g transform="translate(1257,60)"><path d="M-9 -2 L3 -9 L10 -3 L10 3 L-1 10 L-9 4Z" fill="#f0e8f0" stroke="#c05060" stroke-width="0.8" stroke-linejoin="round" stroke-linecap="round" /><path d="M-9 -2 L3 -9 L10 -3 L-1 4Z" fill="none" stroke="#c05060" stroke-width="0.6" stroke-linejoin="round" stroke-linecap="round" /><polygon points="-4.0,3.0 -4.0,-6.6 -1.9,-6.6 -5.0,-10.0 -8.1,-6.6 -6.0,-6.6 -6.0,3.0" fill="#3a78e8" stroke="#1a3c98" stroke-width=".6" stroke-linejoin="round"/><polygon points="-4.2,4.0 2.7,-1.5 4.1,0.3 5.0,-5.0 -0.4,-5.3 1.1,-3.5 -5.8,2.0" fill="#48c838" stroke="#187a10" stroke-width=".6" stroke-linejoin="round"/><polygon points="-5.6,4.0 1.3,8.2 0.2,9.9 5.0,9.0 3.6,4.4 2.5,6.1 -4.4,2.0" fill="#d83040" stroke="#801018" stroke-width=".6" stroke-linejoin="round"/><ellipse cx="-5" cy="3" rx="1.8" ry="1.8" fill="#f8f8f8" stroke="#404040" stroke-width="0.7" /></g>
<g transform="translate(1283,60)"><path d="M-0.96 -3.38 L4.62 -7.72 L9.58 -4.0 L4 0.96 Z" fill="#e8ecf6" stroke="#8a94b0" stroke-width="0.6" stroke-linejoin="round" stroke-linecap="round" /><polygon points="3.7,-2.8 3.7,-7.0 5.6,-7.0 2.8,-10.2 -0.1,-7.0 1.9,-7.0 1.9,-2.8" fill="#3a78e8" stroke="#1a3c98" stroke-width=".6" stroke-linejoin="round"/><polygon points="3.4,-2.1 5.9,-4.3 7.2,-2.8 7.7,-7.1 3.4,-7.2 4.7,-5.7 2.2,-3.4" fill="#38c828" stroke="#187a10" stroke-width=".6" stroke-linejoin="round"/><polygon points="2.2,-2.0 4.6,-0.2 3.4,1.3 7.7,1.0 6.9,-3.3 5.7,-1.7 3.3,-3.5" fill="#e82828" stroke="#901010" stroke-width=".6" stroke-linejoin="round"/><ellipse cx="2.76" cy="-2.76" rx="1.6" ry="1.6" fill="#f0f0d0" stroke="#707060" stroke-width="0.5" /><polygon points="-7.8,9.2 -1.3,2.7 0.6,4.7 1.0,-2.0 -5.7,-1.6 -3.7,0.3 -10.2,6.8" fill="#34c820" stroke="#1c7a10" stroke-width=".6" stroke-linejoin="round"/><rect x="1" y="4" width="8" height="5" rx="0" fill="#d0d4dc" stroke="#606878" stroke-width="1" /></g>
<g transform="translate(1309,60)"><path d="M0.040000000000000036 -3.38 L5.62 -7.72 L10.58 -4.0 L5 0.96 Z" fill="#e8ecf6" stroke="#8a94b0" stroke-width="0.6" stroke-linejoin="round" stroke-linecap="round" /><polygon points="4.7,-2.8 4.7,-7.0 6.6,-7.0 3.8,-10.2 0.9,-7.0 2.9,-7.0 2.9,-2.8" fill="#3a78e8" stroke="#1a3c98" stroke-width=".6" stroke-linejoin="round"/><polygon points="4.4,-2.1 6.9,-4.3 8.2,-2.8 8.7,-7.1 4.4,-7.2 5.7,-5.7 3.2,-3.4" fill="#38c828" stroke="#187a10" stroke-width=".6" stroke-linejoin="round"/><polygon points="3.2,-2.0 5.6,-0.2 4.4,1.3 8.7,1.0 7.9,-3.3 6.7,-1.7 4.3,-3.5" fill="#e82828" stroke="#901010" stroke-width=".6" stroke-linejoin="round"/><ellipse cx="3.76" cy="-2.76" rx="1.6" ry="1.6" fill="#f0f0d0" stroke="#707060" stroke-width="0.5" /><polygon points="-3.8,-1.8 -5.3,-4.2 -3.3,-5.5 -9.0,-7.0 -9.9,-1.1 -7.8,-2.5 -6.2,-0.2" fill="#34c820" stroke="#1c7a10" stroke-width=".6" stroke-linejoin="round"/><polygon points="-7.6,-1.4 -5.3,4.4 -7.6,5.3 -2.0,8.0 0.1,2.2 -2.1,3.1 -4.4,-2.6" fill="#34c820" stroke="#1c7a10" stroke-width=".6" stroke-linejoin="round"/><polygon points="-2.6,4.4 -5.0,-1.5 -2.7,-2.4 -8.0,-5.0 -10.0,0.6 -7.8,-0.4 -5.4,5.6" fill="#34c820" stroke="#1c7a10" stroke-width=".6" stroke-linejoin="round"/></g>
<rect x="13" y="80" width="2" height="2" fill="#fdfdff"/><rect x="12" y="79" width="2" height="2" fill="#9a9cb0" opacity=".55"/><rect x="13" y="84" width="2" height="2" fill="#fdfdff"/><rect x="12" y="83" width="2" height="2" fill="#9a9cb0" opacity=".55"/><rect x="13" y="88" width="2" height="2" fill="#fdfdff"/><rect x="12" y="87" width="2" height="2" fill="#9a9cb0" opacity=".55"/><rect x="13" y="92" width="2" height="2" fill="#fdfdff"/><rect x="12" y="91" width="2" height="2" fill="#9a9cb0" opacity=".55"/><rect x="13" y="96" width="2" height="2" fill="#fdfdff"/><rect x="12" y="95" width="2" height="2" fill="#9a9cb0" opacity=".55"/><rect x="13" y="100" width="2" height="2" fill="#fdfdff"/><rect x="12" y="99" width="2" height="2" fill="#9a9cb0" opacity=".55"/>
<g transform="translate(33,90)"><ellipse cx="0" cy="8" rx="7" ry="2" fill="#30323c" stroke="none" stroke-width="1" opacity="0.4"/><path d="M-7.2 -1.8 L-1.8 -8.1 L-1.8 -4.5 Q7.2 -4.5 6.3 3.6 Q5.4 7.2 0.9 7.2 Q3.6 3.6 1.8 0.9 Q0.9 -0.9 -1.8 -0.9 L-1.8 3.6 Z" fill="#7fa2e2" stroke="#4a6cb4" stroke-width="0.8" stroke-linejoin="round" stroke-linecap="round" /></g>
<g transform="translate(59,90)"><ellipse cx="0" cy="8" rx="7" ry="2" fill="#30323c" stroke="none" stroke-width="1" opacity="0.4"/><path d="M7.2 -1.8 L1.8 -8.1 L1.8 -4.5 Q-7.2 -4.5 -6.3 3.6 Q-5.4 7.2 -0.9 7.2 Q-3.6 3.6 -1.8 0.9 Q-0.9 -0.9 1.8 -0.9 L1.8 3.6 Z" fill="#7fa2e2" stroke="#4a6cb4" stroke-width="0.8" stroke-linejoin="round" stroke-linecap="round" /></g>
<rect x="84" y="80" width="2" height="2" fill="#fdfdff"/><rect x="83" y="79" width="2" height="2" fill="#9a9cb0" opacity=".55"/><rect x="84" y="84" width="2" height="2" fill="#fdfdff"/><rect x="83" y="83" width="2" height="2" fill="#9a9cb0" opacity=".55"/><rect x="84" y="88" width="2" height="2" fill="#fdfdff"/><rect x="83" y="87" width="2" height="2" fill="#9a9cb0" opacity=".55"/><rect x="84" y="92" width="2" height="2" fill="#fdfdff"/><rect x="83" y="91" width="2" height="2" fill="#9a9cb0" opacity=".55"/><rect x="84" y="96" width="2" height="2" fill="#fdfdff"/><rect x="83" y="95" width="2" height="2" fill="#9a9cb0" opacity=".55"/><rect x="84" y="100" width="2" height="2" fill="#fdfdff"/><rect x="83" y="99" width="2" height="2" fill="#9a9cb0" opacity=".55"/>
<g transform="translate(103,90)"><path d="M-8.8 -6.4 L-4.6 -8.8 L0.8 -7.0 L-2.8 -4.6 Z" fill="#e6e6e4" stroke="#202020" stroke-width="0.9" stroke-linejoin="round" stroke-linecap="round" /><path d="M-8.8 -6.4 L-2.8 -4.6 L-2.8 1.4 L-8.2 -1.0 Z" fill="#8a8c86" stroke="#202020" stroke-width="0.9" stroke-linejoin="round" stroke-linecap="round" /><path d="M-2.8 -4.6 L0.8 -7.0 L0.8 -1.6 L-2.8 1.4 Z" fill="#5a5c58" stroke="#202020" stroke-width="0.9" stroke-linejoin="round" stroke-linecap="round" /><path d="M0.2 -6.4 L4.4 -8.8 L9.8 -7.0 L6.2 -4.6 Z" fill="#e6e6e4" stroke="#202020" stroke-width="0.9" stroke-linejoin="round" stroke-linecap="round" /><path d="M0.2 -6.4 L6.2 -4.6 L6.2 1.4 L0.8 -1.0 Z" fill="#8a8c86" stroke="#202020" stroke-width="0.9" stroke-linejoin="round" stroke-linecap="round" /><path d="M6.2 -4.6 L9.8 -7.0 L9.8 -1.6 L6.2 1.4 Z" fill="#5a5c58" stroke="#202020" stroke-width="0.9" stroke-linejoin="round" stroke-linecap="round" /><path d="M-9.2 6 H-2.8 M-6 2.8 V9.2" fill="none" stroke="#187a10" stroke-width="3.4" stroke-linejoin="round" stroke-linecap="round" /><path d="M-9.2 6 H-2.8 M-6 2.8 V9.2" fill="none" stroke="#38c828" stroke-width="2.4" stroke-linejoin="round" stroke-linecap="round" /><path d="M-0.4 3.9 L2.9 0.0 L2.9 2.2 Q8.4 2.2 7.9 7.2 Q7.3 9.4 4.5 9.4 Q6.2 7.2 5.1 5.5 Q4.5 4.5 2.9 4.5 L2.9 7.2 Z" fill="#4a7ad8" stroke="#2a4a98" stroke-width="0.8" stroke-linejoin="round" stroke-linecap="round" /></g>
<g transform="translate(129,90)"><path d="M-8.8 -6.4 L-4.6 -8.8 L0.8 -7.0 L-2.8 -4.6 Z" fill="#e6e6e4" stroke="#202020" stroke-width="0.9" stroke-linejoin="round" stroke-linecap="round" /><path d="M-8.8 -6.4 L-2.8 -4.6 L-2.8 1.4 L-8.2 -1.0 Z" fill="#8a8c86" stroke="#202020" stroke-width="0.9" stroke-linejoin="round" stroke-linecap="round" /><path d="M-2.8 -4.6 L0.8 -7.0 L0.8 -1.6 L-2.8 1.4 Z" fill="#5a5c58" stroke="#202020" stroke-width="0.9" stroke-linejoin="round" stroke-linecap="round" /><path d="M0.2 -6.4 L4.4 -8.8 L9.8 -7.0 L6.2 -4.6 Z" fill="#e6e6e4" stroke="#202020" stroke-width="0.9" stroke-linejoin="round" stroke-linecap="round" /><path d="M0.2 -6.4 L6.2 -4.6 L6.2 1.4 L0.8 -1.0 Z" fill="#8a8c86" stroke="#202020" stroke-width="0.9" stroke-linejoin="round" stroke-linecap="round" /><path d="M6.2 -4.6 L9.8 -7.0 L9.8 -1.6 L6.2 1.4 Z" fill="#5a5c58" stroke="#202020" stroke-width="0.9" stroke-linejoin="round" stroke-linecap="round" /><rect x="-7.6" y="-2.5" width="5.2" height="11" rx="1.5" fill="#181818" stroke="#000" stroke-width="0.5" /><ellipse cx="-5" cy="0.2999999999999998" rx="1.8" ry="1.8" fill="#f0d020" stroke="none" stroke-width="1" /><ellipse cx="-5" cy="5.7" rx="1.8" ry="1.8" fill="#30d030" stroke="none" stroke-width="1" /><rect x="2.4" y="-2.5" width="5.2" height="11" rx="1.5" fill="#181818" stroke="#000" stroke-width="0.5" /><ellipse cx="5" cy="0.2999999999999998" rx="1.8" ry="1.8" fill="#e82020" stroke="none" stroke-width="1" /><ellipse cx="5" cy="5.7" rx="1.8" ry="1.8" fill="#f0b020" stroke="none" stroke-width="1" /></g>
<g transform="translate(155,90)"><path d="M-8.8 -6.4 L-4.6 -8.8 L0.8 -7.0 L-2.8 -4.6 Z" fill="#e6e6e4" stroke="#202020" stroke-width="0.9" stroke-linejoin="round" stroke-linecap="round" /><path d="M-8.8 -6.4 L-2.8 -4.6 L-2.8 1.4 L-8.2 -1.0 Z" fill="#8a8c86" stroke="#202020" stroke-width="0.9" stroke-linejoin="round" stroke-linecap="round" /><path d="M-2.8 -4.6 L0.8 -7.0 L0.8 -1.6 L-2.8 1.4 Z" fill="#5a5c58" stroke="#202020" stroke-width="0.9" stroke-linejoin="round" stroke-linecap="round" /><path d="M0.2 -6.4 L4.4 -8.8 L9.8 -7.0 L6.2 -4.6 Z" fill="#e6e6e4" stroke="#202020" stroke-width="0.9" stroke-linejoin="round" stroke-linecap="round" /><path d="M0.2 -6.4 L6.2 -4.6 L6.2 1.4 L0.8 -1.0 Z" fill="#8a8c86" stroke="#202020" stroke-width="0.9" stroke-linejoin="round" stroke-linecap="round" /><path d="M6.2 -4.6 L9.8 -7.0 L9.8 -1.6 L6.2 1.4 Z" fill="#5a5c58" stroke="#202020" stroke-width="0.9" stroke-linejoin="round" stroke-linecap="round" /><path d="M-6.6 3.0 Q-6.6 -3.6 0.9 -3.6 L0.9 -6.0 L6.6 -1.8 L0.9 2.0 L0.9 -0.3 Q-2.8 -0.3 -2.8 4.0 Z" fill="#34c020" stroke="#1a7a10" stroke-width="0.7" stroke-linejoin="round" stroke-linecap="round" /><path d="M6.6 3.0 Q6.6 9.6 -0.9 9.6 L-0.9 12.0 L-6.6 7.8 L-0.9 4.0 L-0.9 6.3 Q2.8 6.3 2.8 2.0 Z" fill="#e8dc20" stroke="#8a8000" stroke-width="0.7" stroke-linejoin="round" stroke-linecap="round" /></g>
<g transform="translate(181,90)"><path d="M-8.8 -6.4 L-4.6 -8.8 L0.8 -7.0 L-2.8 -4.6 Z" fill="#e6e6e4" stroke="#202020" stroke-width="0.9" stroke-linejoin="round" stroke-linecap="round" /><path d="M-8.8 -6.4 L-2.8 -4.6 L-2.8 1.4 L-8.2 -1.0 Z" fill="#8a8c86" stroke="#202020" stroke-width="0.9" stroke-linejoin="round" stroke-linecap="round" /><path d="M-2.8 -4.6 L0.8 -7.0 L0.8 -1.6 L-2.8 1.4 Z" fill="#5a5c58" stroke="#202020" stroke-width="0.9" stroke-linejoin="round" stroke-linecap="round" /><path d="M0.2 -6.4 L4.4 -8.8 L9.8 -7.0 L6.2 -4.6 Z" fill="#e6e6e4" stroke="#202020" stroke-width="0.9" stroke-linejoin="round" stroke-linecap="round" /><path d="M0.2 -6.4 L6.2 -4.6 L6.2 1.4 L0.8 -1.0 Z" fill="#8a8c86" stroke="#202020" stroke-width="0.9" stroke-linejoin="round" stroke-linecap="round" /><path d="M6.2 -4.6 L9.8 -7.0 L9.8 -1.6 L6.2 1.4 Z" fill="#5a5c58" stroke="#202020" stroke-width="0.9" stroke-linejoin="round" stroke-linecap="round" /><path d="M-9 4 H-3 M-6 1 V7" fill="none" stroke="#187a10" stroke-width="3.4" stroke-linejoin="round" stroke-linecap="round" /><path d="M-9 4 H-3 M-6 1 V7" fill="none" stroke="#38c828" stroke-width="2.4" stroke-linejoin="round" stroke-linecap="round" /><line x1="-3" y1="9" x2="3" y2="-1" stroke="#202020" stroke-width="1.2" stroke-linecap="round" /><path d="M1.6 8 H8.4" fill="none" stroke="#908400" stroke-width="3.2" stroke-linejoin="round" stroke-linecap="round" /><path d="M1.6 8 H8.4" fill="none" stroke="#f0e424" stroke-width="2.2" stroke-linejoin="round" stroke-linecap="round" /></g>
<g transform="translate(207,90)"><rect x="-11.5" y="-11.5" width="23" height="23" rx="0" fill="#f8c070" stroke="#101010" stroke-width="1.4" /><rect x="-10.5" y="-10.5" width="21" height="21" rx="0" fill="none" stroke="#fce0b0" stroke-width="0.8" /><path d="M-5 -7.0 L-5 7.0 A5 2.6 0 0 0 5 7.0 L5 -7.0 Z" fill="#2a58b8" stroke="#102040" stroke-width="0.9" stroke-linejoin="round" stroke-linecap="round" /><path d="M1.5 -5.0 L1.5 9.2 A5 2.6 0 0 0 5 7.0 L5 -7.0 Z" fill="#183c88" stroke="none" stroke-width="1" stroke-linejoin="round" stroke-linecap="round" /><ellipse cx="0" cy="-7.0" rx="5" ry="2.6" fill="#8ab4f0" stroke="#102040" stroke-width="0.9" /><line x1="0" y1="-2" x2="0" y2="6" stroke="#e8e8f0" stroke-width="1" stroke-linecap="round" stroke-dasharray="1.5 2"/></g>
<g transform="translate(233,90)"><ellipse cx="1" cy="9" rx="6" ry="2" fill="#30323c" stroke="none" stroke-width="1" opacity="0.35"/><path d="M-5 -7.0 L-5 7.0 A5 2.6 0 0 0 5 7.0 L5 -7.0 Z" fill="#c8ccc0" stroke="#303030" stroke-width="0.9" stroke-linejoin="round" stroke-linecap="round" /><path d="M1.5 -5.0 L1.5 9.2 A5 2.6 0 0 0 5 7.0 L5 -7.0 Z" fill="#58a048" stroke="none" stroke-width="1" stroke-linejoin="round" stroke-linecap="round" /><ellipse cx="0" cy="-7.0" rx="5" ry="2.6" fill="#a8aca4" stroke="#303030" stroke-width="0.9" /><rect x="-4" y="-5" width="2.4" height="12" rx="0" fill="#f4f4f0" stroke="none" stroke-width="1" /></g>
<g transform="translate(259,90)"><path d="M-6 -7.0 L-6 7.0 A6 2.6 0 0 0 6 7.0 L6 -7.0 Z" fill="#a8e0f0" stroke="#58a8c8" stroke-width="0.9" stroke-linejoin="round" stroke-linecap="round" /><path d="M1.7999999999999998 -5.0 L1.7999999999999998 9.2 A6 2.6 0 0 0 6 7.0 L6 -7.0 Z" fill="#78c8e0" stroke="none" stroke-width="1" stroke-linejoin="round" stroke-linecap="round" /><ellipse cx="0" cy="-7.0" rx="6" ry="2.6" fill="#d8f4fc" stroke="#58a8c8" stroke-width="0.9" /><path d="M-5 2 L-1 8 L8 -6 L5 -7 L-1 3 L-3 0Z" fill="#38c428" stroke="#187a10" stroke-width="0.6" stroke-linejoin="round" stroke-linecap="round" /></g>
<g transform="translate(285,90)"><ellipse cx="1" cy="9" rx="8" ry="2.2" fill="#30323c" stroke="none" stroke-width="1" opacity="0.35"/><path d="M-5.8 -3.4 L0.2 -6.8 L7.8 -4.2 L2.7 -0.8 Z" fill="#98a4c8" stroke="#3a4878" stroke-width="0.8" stroke-linejoin="round" stroke-linecap="round" /><path d="M-5.8 -3.4 L2.7 -0.8 L2.7 7.6 L-5.0 4.2 Z" fill="#6a78a8" stroke="#3a4878" stroke-width="0.8" stroke-linejoin="round" stroke-linecap="round" /><path d="M2.7 -0.8 L7.8 -4.2 L7.8 3.4 L2.7 7.6 Z" fill="#4a588a" stroke="#3a4878" stroke-width="0.8" stroke-linejoin="round" stroke-linecap="round" /><rect x="-9" y="3" width="7" height="6" rx="0" fill="#5a6898" stroke="#3a4878" stroke-width="0.6" /><path d="M4 -10 L10 -8 L8 -4Z" fill="#f0a040" stroke="#a06010" stroke-width="0.5" stroke-linejoin="round" stroke-linecap="round" /></g>
<g transform="translate(311,90)"><path d="M-5 -7.0 L-5 7.0 A5 2.4 0 0 0 5 7.0 L5 -7.0" fill="#eef0f6" stroke="#3a68c0" stroke-width="1.0" stroke-linejoin="round" stroke-linecap="round" /><ellipse cx="0" cy="-7.0" rx="5" ry="2.4" fill="#f4f5fa" stroke="#3a68c0" stroke-width="1.0" /><path d="M-5 7.0 A5 2.4 0 0 1 5 7.0" fill="none" stroke="#3a68c0" stroke-width="0.6" stroke-linejoin="round" stroke-linecap="round" /><path d="M-3 -6 L2 7 M2 -6 L-2 7 M-5 -2 L5 2" fill="none" stroke="#3a68c0" stroke-width="0.6" stroke-linejoin="round" stroke-linecap="round" /></g>
<g transform="translate(337,90)"><ellipse cx="1" cy="9" rx="8" ry="2.2" fill="#30323c" stroke="none" stroke-width="1" opacity="0.35"/><path d="M-9 -5 L0 -9 L9 -5 L8 2 L1 10 L-7 3Z" fill="#1a3888" stroke="#0a1848" stroke-width="0.9" stroke-linejoin="round" stroke-linecap="round" /><path d="M-9 -5 L0 -9 L9 -5 L1 -2Z" fill="#5a88d8" stroke="#0a1848" stroke-width="0.6" stroke-linejoin="round" stroke-linecap="round" /><path d="M-9 -5 L1 -2 L1 10 L-7 3Z" fill="#2a50a8" stroke="none" stroke-width="1" stroke-linejoin="round" stroke-linecap="round" /><path d="M-6 -5 L0 -7.5 L5 -5.5 L0 -3.5Z" fill="#a8c8f4" stroke="none" stroke-width="1" stroke-linejoin="round" stroke-linecap="round" /></g>
<rect x="362" y="80" width="2" height="2" fill="#fdfdff"/><rect x="361" y="79" width="2" height="2" fill="#9a9cb0" opacity=".55"/><rect x="362" y="84" width="2" height="2" fill="#fdfdff"/><rect x="361" y="83" width="2" height="2" fill="#9a9cb0" opacity=".55"/><rect x="362" y="88" width="2" height="2" fill="#fdfdff"/><rect x="361" y="87" width="2" height="2" fill="#9a9cb0" opacity=".55"/><rect x="362" y="92" width="2" height="2" fill="#fdfdff"/><rect x="361" y="91" width="2" height="2" fill="#9a9cb0" opacity=".55"/><rect x="362" y="96" width="2" height="2" fill="#fdfdff"/><rect x="361" y="95" width="2" height="2" fill="#9a9cb0" opacity=".55"/><rect x="362" y="100" width="2" height="2" fill="#fdfdff"/><rect x="361" y="99" width="2" height="2" fill="#9a9cb0" opacity=".55"/>
<g transform="translate(381,90)"><ellipse cx="0" cy="9" rx="7" ry="2" fill="#30323c" stroke="none" stroke-width="1" opacity="0.35"/><path d="M-7.0 -1.0 Q-7.0 -8.0 1.0 -8.0 L1.0 -10.5 L7.0 -6.0 L1.0 -2.0 L1.0 -4.5 Q-3.0 -4.5 -3.0 0.0 Z" fill="#6a98e0" stroke="#3a60b0" stroke-width="0.7" stroke-linejoin="round" stroke-linecap="round" /><path d="M7.0 -1.0 Q7.0 6.0 -1.0 6.0 L-1.0 8.5 L-7.0 4.0 L-1.0 0.0 L-1.0 2.5 Q3.0 2.5 3.0 -2.0 Z" fill="#8ab0e8" stroke="#4a70b8" stroke-width="0.7" stroke-linejoin="round" stroke-linecap="round" /></g>
<g transform="translate(407,90)"><path d="M-5.5 -6.5 L-5.5 6.5 A5.5 2.4 0 0 0 5.5 6.5 L5.5 -6.5" fill="#eef0f6" stroke="#202020" stroke-width="1.0" stroke-linejoin="round" stroke-linecap="round" /><ellipse cx="0" cy="-6.5" rx="5.5" ry="2.4" fill="#f4f5fa" stroke="#202020" stroke-width="1.0" /><path d="M-5.5 6.5 A5.5 2.4 0 0 1 5.5 6.5" fill="none" stroke="#202020" stroke-width="0.6" stroke-linejoin="round" stroke-linecap="round" /></g>
<g transform="translate(433,90)"><path d="M-3.5 -6.5 L-3.5 6.5 A5.5 2.4 0 0 0 7.5 6.5 L7.5 -6.5" fill="#eef0f6" stroke="#202020" stroke-width="1.0" stroke-linejoin="round" stroke-linecap="round" /><ellipse cx="2" cy="-6.5" rx="5.5" ry="2.4" fill="#f4f5fa" stroke="#202020" stroke-width="1.0" /><path d="M-3.5 6.5 A5.5 2.4 0 0 1 7.5 6.5" fill="none" stroke="#202020" stroke-width="0.6" stroke-linejoin="round" stroke-linecap="round" /><rect x="-9" y="-2" width="11" height="1.6" rx="0" fill="#38c428" stroke="none" stroke-width="1" /><rect x="-9" y="1" width="11" height="1.6" rx="0" fill="#38c428" stroke="none" stroke-width="1" /><rect x="-9" y="4" width="11" height="1.6" rx="0" fill="#38c428" stroke="none" stroke-width="1" /><rect x="-9" y="-5" width="11" height="1.6" rx="0" fill="#38c428" stroke="none" stroke-width="1" /></g>
<g transform="translate(459,90)"><path d="M-5.5 -6.5 L-5.5 6.5 A5.5 2.4 0 0 0 5.5 6.5 L5.5 -6.5" fill="#eef0f6" stroke="#202020" stroke-width="1.0" stroke-linejoin="round" stroke-linecap="round" /><ellipse cx="0" cy="-6.5" rx="5.5" ry="2.4" fill="#f4f5fa" stroke="#202020" stroke-width="1.0" /><path d="M-5.5 6.5 A5.5 2.4 0 0 1 5.5 6.5" fill="none" stroke="#202020" stroke-width="0.6" stroke-linejoin="round" stroke-linecap="round" /></g>
<g transform="translate(485,90)"><path d="M-5.5 -6.5 L-5.5 6.5 A5.5 2.4 0 0 0 5.5 6.5 L5.5 -6.5" fill="#eef0f6" stroke="#202020" stroke-width="1.0" stroke-linejoin="round" stroke-linecap="round" /><ellipse cx="0" cy="-6.5" rx="5.5" ry="2.4" fill="#f4f5fa" stroke="#202020" stroke-width="1.0" /><path d="M-5.5 6.5 A5.5 2.4 0 0 1 5.5 6.5" fill="none" stroke="#202020" stroke-width="0.6" stroke-linejoin="round" stroke-linecap="round" /><line x1="-2" y1="6" x2="2" y2="6" stroke="#606060" stroke-width="0.8" stroke-linecap="round" /></g>
<g transform="translate(511,90)"><ellipse cx="1" cy="9" rx="6" ry="2" fill="#30323c" stroke="none" stroke-width="1" opacity="0.35"/><path d="M-5 -7.0 L-5 7.0 A5 2.6 0 0 0 5 7.0 L5 -7.0 Z" fill="#4a90e0" stroke="#5aa0e8" stroke-width="0.9" stroke-linejoin="round" stroke-linecap="round" /><path d="M1.5 -5.0 L1.5 9.2 A5 2.6 0 0 0 5 7.0 L5 -7.0 Z" fill="#2a68c0" stroke="none" stroke-width="1" stroke-linejoin="round" stroke-linecap="round" /><ellipse cx="0" cy="-7.0" rx="5" ry="2.6" fill="#a8d0f8" stroke="#5aa0e8" stroke-width="0.9" /></g>
<g transform="translate(537,90)"><rect x="-11.5" y="-11.5" width="23" height="23" rx="0" fill="#f8c070" stroke="#101010" stroke-width="1.4" /><rect x="-10.5" y="-10.5" width="21" height="21" rx="0" fill="none" stroke="#fce0b0" stroke-width="0.8" /><path d="M-5.5 -7.0 L-5.5 7.0 A5.5 2.6 0 0 0 5.5 7.0 L5.5 -7.0 Z" fill="#2a58b8" stroke="#102040" stroke-width="0.9" stroke-linejoin="round" stroke-linecap="round" /><path d="M1.65 -5.0 L1.65 9.2 A5.5 2.6 0 0 0 5.5 7.0 L5.5 -7.0 Z" fill="#183c88" stroke="none" stroke-width="1" stroke-linejoin="round" stroke-linecap="round" /><ellipse cx="0" cy="-7.0" rx="5.5" ry="2.6" fill="#8ab4f0" stroke="#102040" stroke-width="0.9" /></g>
<g transform="translate(563,90)"><ellipse cx="1" cy="9" rx="6" ry="2" fill="#30323c" stroke="none" stroke-width="1" opacity="0.35"/><path d="M-5.5 -7.0 L-5.5 7.0 A5.5 2.6 0 0 0 5.5 7.0 L5.5 -7.0 Z" fill="#a8e8f0" stroke="#58b8c8" stroke-width="0.9" stroke-linejoin="round" stroke-linecap="round" /><path d="M1.65 -5.0 L1.65 9.2 A5.5 2.6 0 0 0 5.5 7.0 L5.5 -7.0 Z" fill="#80d0e0" stroke="none" stroke-width="1" stroke-linejoin="round" stroke-linecap="round" /><ellipse cx="0" cy="-7.0" rx="5.5" ry="2.6" fill="#d8f8fc" stroke="#58b8c8" stroke-width="0.9" /></g>
<g transform="translate(589,90)"><path d="M-5.5 -7.0 L-5.5 7.0 A5.5 2.6 0 0 0 5.5 7.0 L5.5 -7.0 Z" fill="#c8dcf4" stroke="#202020" stroke-width="0.9" stroke-linejoin="round" stroke-linecap="round" /><path d="M1.65 -5.0 L1.65 9.2 A5.5 2.6 0 0 0 5.5 7.0 L5.5 -7.0 Z" fill="#a8c4e8" stroke="none" stroke-width="1" stroke-linejoin="round" stroke-linecap="round" /><ellipse cx="0" cy="-7.0" rx="5.5" ry="2.6" fill="#e8f0fc" stroke="#202020" stroke-width="0.9" /></g>
<g transform="translate(615,90)"><path d="M-5.5 -6.5 L-5.5 6.5 A5.5 2.4 0 0 0 5.5 6.5 L5.5 -6.5" fill="#eef0f6" stroke="#202020" stroke-width="1.1" stroke-linejoin="round" stroke-linecap="round" /><ellipse cx="0" cy="-6.5" rx="5.5" ry="2.4" fill="#f4f5fa" stroke="#202020" stroke-width="1.1" /><path d="M-5.5 6.5 A5.5 2.4 0 0 1 5.5 6.5" fill="none" stroke="#202020" stroke-width="0.66" stroke-linejoin="round" stroke-linecap="round" /><path d="M-4 -5 L0 8 L4 -5 M-5 0 L0 -4 L5 0 M-5 4 L5 4 M-2 -6 L-4 8 M2 -6 L4 8" fill="none" stroke="#202020" stroke-width="0.7" stroke-linejoin="round" stroke-linecap="round" /></g>
<g transform="translate(641,90)"><path d="M-8 -7.5 L-8 5.5 A5 2.6 0 0 0 2 5.5 L2 -7.5 Z" fill="#2a58b8" stroke="#102040" stroke-width="0.9" stroke-linejoin="round" stroke-linecap="round" /><path d="M-1.5 -5.5 L-1.5 7.7 A5 2.6 0 0 0 2 5.5 L2 -7.5 Z" fill="#183c88" stroke="none" stroke-width="1" stroke-linejoin="round" stroke-linecap="round" /><ellipse cx="-3" cy="-7.5" rx="5" ry="2.6" fill="#8ab4f0" stroke="#102040" stroke-width="0.9" /><rect x="1" y="0" width="8" height="8" rx="0" fill="#78a8e8" stroke="#2a58b0" stroke-width="0.8" /><rect x="3" y="-3" width="7" height="7" rx="0" fill="none" stroke="#2a58b0" stroke-width="0.8" /><rect x="3" y="2" width="4" height="4" rx="0" fill="#d8e8fc" stroke="#2a58b0" stroke-width="0.5" /></g>
<g transform="translate(667,90)"><rect x="-9" y="-9" width="18" height="17" rx="0" fill="#3a68b8" stroke="#203870" stroke-width="0.8" /><rect x="-7" y="-7" width="14" height="10" rx="0" fill="#78a8e0" stroke="none" stroke-width="1" /><path d="M-7 -7 L-3 -7 L-2 -4 L7 6 L5 8 L-4 -2 L-7 -3Z" fill="#e8ecf4" stroke="#404858" stroke-width="0.6" stroke-linejoin="round" stroke-linecap="round" /><path d="M7 -8 L4 -5 L5 -3 L-6 6 L-4 8 L7 -1 L9 -1 L10 -5 L8 -3 L6 -5Z" fill="#e8ecf4" stroke="#404858" stroke-width="0.6" stroke-linejoin="round" stroke-linecap="round" /><path d="M-7 4 L-3 8 L-5 10 L-9 6Z" fill="#5a88d0" stroke="#203870" stroke-width="0.5" stroke-linejoin="round" stroke-linecap="round" /></g>
<g transform="translate(693,90)"><ellipse cx="0" cy="0" rx="10" ry="10" fill="#58a838" stroke="#306820" stroke-width="0.8" /><path d="M-6 -7 Q0 -4 -2 2 Q-6 4 -8 0Z" fill="#88c868" stroke="none" stroke-width="1" stroke-linejoin="round" stroke-linecap="round" /><path d="M-7 -7 L-3 -7 L-2 -4 L7 6 L5 8 L-4 -2 L-7 -3Z" fill="#e8ecf4" stroke="#404858" stroke-width="0.6" stroke-linejoin="round" stroke-linecap="round" /><path d="M7 -8 L4 -5 L5 -3 L-6 6 L-4 8 L7 -1 L9 -1 L10 -5 L8 -3 L6 -5Z" fill="#e8ecf4" stroke="#404858" stroke-width="0.6" stroke-linejoin="round" stroke-linecap="round" /><path d="M-7 4 L-3 8 L-5 10 L-9 6Z" fill="#5a88d0" stroke="#203870" stroke-width="0.5" stroke-linejoin="round" stroke-linecap="round" /></g>
<g transform="translate(719,90)"><rect x="-9" y="-8" width="17" height="16" rx="0" fill="none" stroke="#2a48b0" stroke-width="1.6" stroke-dasharray="1.6 2.6"/><path d="M-5.6 -1.1 Q-3.7 -5.8 1.1 -7.8 Q5.8 -9.6 9.6 -6.8 L9.6 -2.0 Q6.8 -1.1 4.8 -2.0 L0.1 -0.2 Q-3.7 1.8 -5.6 -1.1 Z" fill="#f4c878" stroke="#a87020" stroke-width="0.8" stroke-linejoin="round" stroke-linecap="round" /><path d="M1.1 -4.0 L5.8 -4.9 M2.0 -2.0 L6.8 -3.0" fill="none" stroke="#a87020" stroke-width="0.6" stroke-linejoin="round" stroke-linecap="round" /><polygon points="-4.0,-1.0 -4.0,5.0 -5.7,5.0 -3.0,8.0 -0.3,5.0 -2.0,5.0 -2.0,-1.0" fill="#34c820" stroke="#1c7a10" stroke-width=".6" stroke-linejoin="round"/></g>
<rect x="744" y="80" width="2" height="2" fill="#fdfdff"/><rect x="743" y="79" width="2" height="2" fill="#9a9cb0" opacity=".55"/><rect x="744" y="84" width="2" height="2" fill="#fdfdff"/><rect x="743" y="83" width="2" height="2" fill="#9a9cb0" opacity=".55"/><rect x="744" y="88" width="2" height="2" fill="#fdfdff"/><rect x="743" y="87" width="2" height="2" fill="#9a9cb0" opacity=".55"/><rect x="744" y="92" width="2" height="2" fill="#fdfdff"/><rect x="743" y="91" width="2" height="2" fill="#9a9cb0" opacity=".55"/><rect x="744" y="96" width="2" height="2" fill="#fdfdff"/><rect x="743" y="95" width="2" height="2" fill="#9a9cb0" opacity=".55"/><rect x="744" y="100" width="2" height="2" fill="#fdfdff"/><rect x="743" y="99" width="2" height="2" fill="#9a9cb0" opacity=".55"/>
<g transform="translate(763,90)"><rect x="-9" y="-8" width="13" height="2.4" rx="0" fill="#5a88d0" stroke="#2a4890" stroke-width="0.4" /><rect x="-9" y="-4.5" width="13" height="2.4" rx="0" fill="#7aa0e0" stroke="#2a4890" stroke-width="0.4" /><rect x="-9" y="-1" width="13" height="2.4" rx="0" fill="#5a88d0" stroke="#2a4890" stroke-width="0.4" /><ellipse cx="-1" cy="5" rx="8" ry="4.5" fill="#b07848" stroke="#604020" stroke-width="0.7" /><ellipse cx="-5" cy="4" rx="1.6" ry="1.6" fill="#e82020" stroke="none" stroke-width="1" /><ellipse cx="-1" cy="6.5" rx="1.6" ry="1.6" fill="#30c030" stroke="none" stroke-width="1" /><ellipse cx="3" cy="5" rx="1.6" ry="1.6" fill="#3050e0" stroke="none" stroke-width="1" /><line x1="3" y1="2" x2="10" y2="-8" stroke="#c03020" stroke-width="1.6" stroke-linecap="round" /><line x1="2" y1="3" x2="4" y2="1" stroke="#404040" stroke-width="2" stroke-linecap="round" /></g>
<g transform="translate(789,90)"><path d="M-4 -9 H5 L9 -5 V8 H-4Z" fill="#e8f0fc" stroke="#101828" stroke-width="1.2" stroke-linejoin="round" stroke-linecap="round" /><path d="M-8 -6 H0 V9 H-8Z" fill="#3a68b8" stroke="#101828" stroke-width="0.9" stroke-linejoin="round" stroke-linecap="round" /><path d="M-9 5 Q-3 -1 4 5 Q-3 10 -9 5Z" fill="#d8e0f0" stroke="#203060" stroke-width="0.8" stroke-linejoin="round" stroke-linecap="round" /><ellipse cx="-3" cy="5" rx="2.2" ry="2.2" fill="#3a58a8" stroke="none" stroke-width="1" /><ellipse cx="-3" cy="5" rx="1" ry="1" fill="#101020" stroke="none" stroke-width="1" /></g>
<g transform="translate(815,90)"><g transform="translate(0,-1.5) scale(.86)"><path d="M-10 -1 Q-4 -9 3 -8 Q9 -7 11 0 Q6 4 0 4 Q-6 3 -10 -1 Z" fill="#b4bdd6" stroke="#5a6688" stroke-width="0.6" stroke-linejoin="round" stroke-linecap="round" /><path d="M-10 -2 Q-3 -11 4 -9.5 Q10 -8 11 -1" fill="none" stroke="#303a5c" stroke-width="2.0" stroke-linejoin="round" stroke-linecap="round" /><ellipse cx="1" cy="-2" rx="3.6" ry="3.6" fill="#4a66b8" stroke="#22305c" stroke-width="0.6" /><ellipse cx="1" cy="-2" rx="1.6" ry="1.6" fill="#101830" stroke="none" stroke-width="1" /><ellipse cx="2.2" cy="-3.2" rx="0.9" ry="0.9" fill="#fff" stroke="none" stroke-width="1" /></g><path d="M-10 6 H-4 M-7 3 V9" fill="none" stroke="#187a10" stroke-width="3.4" stroke-linejoin="round" stroke-linecap="round" /><path d="M-10 6 H-4 M-7 3 V9" fill="none" stroke="#38c828" stroke-width="2.4" stroke-linejoin="round" stroke-linecap="round" /><path d="M0.0 5.0 L3.0 1.5 L3.0 3.5 Q8.0 3.5 7.5 8.0 Q7.0 10.0 4.5 10.0 Q6.0 8.0 5.0 6.5 Q4.5 5.5 3.0 5.5 L3.0 8.0 Z" fill="#4a7ad8" stroke="#2a4a98" stroke-width="0.8" stroke-linejoin="round" stroke-linecap="round" /></g>
<g transform="translate(841,90)"><g transform="translate(0,-1.5) scale(.86)"><path d="M-10 -1 Q-4 -9 3 -8 Q9 -7 11 0 Q6 4 0 4 Q-6 3 -10 -1 Z" fill="#b4bdd6" stroke="#5a6688" stroke-width="0.6" stroke-linejoin="round" stroke-linecap="round" /><path d="M-10 -2 Q-3 -11 4 -9.5 Q10 -8 11 -1" fill="none" stroke="#303a5c" stroke-width="2.0" stroke-linejoin="round" stroke-linecap="round" /><ellipse cx="1" cy="-2" rx="3.6" ry="3.6" fill="#4a66b8" stroke="#22305c" stroke-width="0.6" /><ellipse cx="1" cy="-2" rx="1.6" ry="1.6" fill="#101830" stroke="none" stroke-width="1" /><ellipse cx="2.2" cy="-3.2" rx="0.9" ry="0.9" fill="#fff" stroke="none" stroke-width="1" /></g><path d="M-9 6 H-1" fill="none" stroke="#908400" stroke-width="3.2" stroke-linejoin="round" stroke-linecap="round" /><path d="M-9 6 H-1" fill="none" stroke="#f0e424" stroke-width="2.2" stroke-linejoin="round" stroke-linecap="round" /><path d="M1.0 5.0 L4.0 1.5 L4.0 3.5 Q9.0 3.5 8.5 8.0 Q8.0 10.0 5.5 10.0 Q7.0 8.0 6.0 6.5 Q5.5 5.5 4.0 5.5 L4.0 8.0 Z" fill="#4a7ad8" stroke="#2a4a98" stroke-width="0.8" stroke-linejoin="round" stroke-linecap="round" /></g>
<g transform="translate(867,90)"><g transform="translate(0,-1.5) scale(.86)"><path d="M-10 -3 Q-4 -11 3 -10 Q9 -9 11 -2 Q6 2 0 2 Q-6 1 -10 -3 Z" fill="#b4bdd6" stroke="#5a6688" stroke-width="0.6" stroke-linejoin="round" stroke-linecap="round" /><path d="M-10 -4 Q-3 -13 4 -11.5 Q10 -10 11 -3" fill="none" stroke="#303a5c" stroke-width="2.0" stroke-linejoin="round" stroke-linecap="round" /><ellipse cx="1" cy="-4" rx="3.6" ry="3.6" fill="#4a66b8" stroke="#22305c" stroke-width="0.6" /><ellipse cx="1" cy="-4" rx="1.6" ry="1.6" fill="#101830" stroke="none" stroke-width="1" /><ellipse cx="2.2" cy="-5.2" rx="0.9" ry="0.9" fill="#fff" stroke="none" stroke-width="1" /></g><rect x="-7.6" y="-1.5" width="5.2" height="11" rx="1.5" fill="#181818" stroke="#000" stroke-width="0.5" /><ellipse cx="-5" cy="1.2999999999999998" rx="1.8" ry="1.8" fill="#f0d020" stroke="none" stroke-width="1" /><ellipse cx="-5" cy="6.7" rx="1.8" ry="1.8" fill="#30d030" stroke="none" stroke-width="1" /><rect x="2.4" y="-1.5" width="5.2" height="11" rx="1.5" fill="#181818" stroke="#000" stroke-width="0.5" /><ellipse cx="5" cy="1.2999999999999998" rx="1.8" ry="1.8" fill="#e82020" stroke="none" stroke-width="1" /><ellipse cx="5" cy="6.7" rx="1.8" ry="1.8" fill="#f0b020" stroke="none" stroke-width="1" /></g>
<g transform="translate(893,90)"><g transform="translate(0,-1.5) scale(.86)"><path d="M-10 -2 Q-4 -10 3 -9 Q9 -8 11 -1 Q6 3 0 3 Q-6 2 -10 -2 Z" fill="#b4bdd6" stroke="#5a6688" stroke-width="0.6" stroke-linejoin="round" stroke-linecap="round" /><path d="M-10 -3 Q-3 -12 4 -10.5 Q10 -9 11 -2" fill="none" stroke="#303a5c" stroke-width="2.0" stroke-linejoin="round" stroke-linecap="round" /><ellipse cx="1" cy="-3" rx="3.6" ry="3.6" fill="#4a66b8" stroke="#22305c" stroke-width="0.6" /><ellipse cx="1" cy="-3" rx="1.6" ry="1.6" fill="#101830" stroke="none" stroke-width="1" /><ellipse cx="2.2" cy="-4.2" rx="0.9" ry="0.9" fill="#fff" stroke="none" stroke-width="1" /></g><path d="M-6.0 4.0 Q-6.0 -2.0 0.8 -2.0 L0.8 -4.1 L6.0 -0.2 L0.8 3.1 L0.8 1.0 Q-2.5 1.0 -2.5 4.8 Z" fill="#34c020" stroke="#1a7a10" stroke-width="0.7" stroke-linejoin="round" stroke-linecap="round" /><path d="M6.0 4.0 Q6.0 9.9 -0.8 9.9 L-0.8 12.1 L-6.0 8.2 L-0.8 4.8 L-0.8 7.0 Q2.5 7.0 2.5 3.1 Z" fill="#e8dc20" stroke="#8a8000" stroke-width="0.7" stroke-linejoin="round" stroke-linecap="round" /></g>
<g transform="translate(919,90)"><g transform="translate(0,-1.5) scale(.86)"><path d="M-10 -1 Q-4 -9 3 -8 Q9 -7 11 0 Q6 4 0 4 Q-6 3 -10 -1 Z" fill="#b4bdd6" stroke="#5a6688" stroke-width="0.6" stroke-linejoin="round" stroke-linecap="round" /><path d="M-10 -2 Q-3 -11 4 -9.5 Q10 -8 11 -1" fill="none" stroke="#303a5c" stroke-width="2.0" stroke-linejoin="round" stroke-linecap="round" /><ellipse cx="1" cy="-2" rx="3.6" ry="3.6" fill="#4a66b8" stroke="#22305c" stroke-width="0.6" /><ellipse cx="1" cy="-2" rx="1.6" ry="1.6" fill="#101830" stroke="none" stroke-width="1" /><ellipse cx="2.2" cy="-3.2" rx="0.9" ry="0.9" fill="#fff" stroke="none" stroke-width="1" /></g><path d="M-8.8 5 H-3.2 M-6 2.2 V7.8" fill="none" stroke="#187a10" stroke-width="3.4" stroke-linejoin="round" stroke-linecap="round" /><path d="M-8.8 5 H-3.2 M-6 2.2 V7.8" fill="none" stroke="#38c828" stroke-width="2.4" stroke-linejoin="round" stroke-linecap="round" /><line x1="-3" y1="9" x2="3" y2="1" stroke="#202020" stroke-width="1.1" stroke-linecap="round" /><path d="M1.7999999999999998 8 H8.2" fill="none" stroke="#908400" stroke-width="3.2" stroke-linejoin="round" stroke-linecap="round" /><path d="M1.7999999999999998 8 H8.2" fill="none" stroke="#f0e424" stroke-width="2.2" stroke-linejoin="round" stroke-linecap="round" /></g>
<g transform="translate(945,90)"><g transform="translate(0,-1.5) scale(.86)"><path d="M-10 -1 Q-4 -9 3 -8 Q9 -7 11 0 Q6 4 0 4 Q-6 3 -10 -1 Z" fill="#b4bdd6" stroke="#5a6688" stroke-width="0.6" stroke-linejoin="round" stroke-linecap="round" /><path d="M-10 -2 Q-3 -11 4 -9.5 Q10 -8 11 -1" fill="none" stroke="#303a5c" stroke-width="2.0" stroke-linejoin="round" stroke-linecap="round" /><ellipse cx="1" cy="-2" rx="3.6" ry="3.6" fill="#4a66b8" stroke="#22305c" stroke-width="0.6" /><ellipse cx="1" cy="-2" rx="1.6" ry="1.6" fill="#101830" stroke="none" stroke-width="1" /><ellipse cx="2.2" cy="-3.2" rx="0.9" ry="0.9" fill="#fff" stroke="none" stroke-width="1" /></g><path d="M-3 6 H5 M1 2 V10" fill="none" stroke="#187a10" stroke-width="3.8" stroke-linejoin="round" stroke-linecap="round" /><path d="M-3 6 H5 M1 2 V10" fill="none" stroke="#38c828" stroke-width="2.8" stroke-linejoin="round" stroke-linecap="round" /></g>
<g transform="translate(971,90)"><g transform="translate(0,-1.5) scale(.86)"><path d="M-10 -1 Q-4 -9 3 -8 Q9 -7 11 0 Q6 4 0 4 Q-6 3 -10 -1 Z" fill="#b4bdd6" stroke="#5a6688" stroke-width="0.6" stroke-linejoin="round" stroke-linecap="round" /><path d="M-10 -2 Q-3 -11 4 -9.5 Q10 -8 11 -1" fill="none" stroke="#303a5c" stroke-width="2.0" stroke-linejoin="round" stroke-linecap="round" /><ellipse cx="1" cy="-2" rx="3.6" ry="3.6" fill="#4a66b8" stroke="#22305c" stroke-width="0.6" /><ellipse cx="1" cy="-2" rx="1.6" ry="1.6" fill="#101830" stroke="none" stroke-width="1" /><ellipse cx="2.2" cy="-3.2" rx="0.9" ry="0.9" fill="#fff" stroke="none" stroke-width="1" /></g><path d="M-2.5999999999999996 6 H6.6" fill="none" stroke="#908400" stroke-width="3.6" stroke-linejoin="round" stroke-linecap="round" /><path d="M-2.5999999999999996 6 H6.6" fill="none" stroke="#f0e424" stroke-width="2.6" stroke-linejoin="round" stroke-linecap="round" /></g>
<rect x="996" y="80" width="2" height="2" fill="#fdfdff"/><rect x="995" y="79" width="2" height="2" fill="#9a9cb0" opacity=".55"/><rect x="996" y="84" width="2" height="2" fill="#fdfdff"/><rect x="995" y="83" width="2" height="2" fill="#9a9cb0" opacity=".55"/><rect x="996" y="88" width="2" height="2" fill="#fdfdff"/><rect x="995" y="87" width="2" height="2" fill="#9a9cb0" opacity=".55"/><rect x="996" y="92" width="2" height="2" fill="#fdfdff"/><rect x="995" y="91" width="2" height="2" fill="#9a9cb0" opacity=".55"/><rect x="996" y="96" width="2" height="2" fill="#fdfdff"/><rect x="995" y="95" width="2" height="2" fill="#9a9cb0" opacity=".55"/><rect x="996" y="100" width="2" height="2" fill="#fdfdff"/><rect x="995" y="99" width="2" height="2" fill="#9a9cb0" opacity=".55"/>
<g transform="translate(1015,90)"><ellipse cx="1" cy="9" rx="7" ry="2" fill="#30323c" stroke="none" stroke-width="1" opacity="0.35"/><path d="M-7 -5 L-5 9 Q0 11 5 9 L7 -5Z" fill="#a8c8e8" stroke="#4a6890" stroke-width="0.8" stroke-linejoin="round" stroke-linecap="round" /><path d="M-4 -3 L-3 8 M0 -3 V9 M4 -3 L3 8" fill="none" stroke="#58b848" stroke-width="1.6" stroke-linejoin="round" stroke-linecap="round" /><ellipse cx="0" cy="-5" rx="7.5" ry="2.2" fill="#d8e4f4" stroke="#4a6890" stroke-width="0.8" /><path d="M-3 -7 Q0 -10 3 -7" fill="none" stroke="#606870" stroke-width="1.2" stroke-linejoin="round" stroke-linecap="round" /><rect x="-1.5" y="-10" width="3" height="2" rx="0" fill="#f0d020" stroke="none" stroke-width="1" /></g>
<g transform="translate(1041,90)"><path d="M-9 4 L-5 -1 M-3 -4 L0 -8 L3 -4 M5 -1 L9 4" fill="none" stroke="#3a68c8" stroke-width="1.8" stroke-linejoin="round" stroke-linecap="round" stroke-dasharray="3 2"/><polygon points="-8.1,9.6 -5.1,5.4 -3.5,6.5 -4.0,2.0 -8.5,3.0 -6.9,4.1 -9.9,8.4" fill="#34c820" stroke="#1c7a10" stroke-width=".6" stroke-linejoin="round"/><polygon points="9.9,8.4 6.9,4.1 8.5,3.0 4.0,2.0 3.5,6.5 5.1,5.4 8.1,9.6" fill="#34c820" stroke="#1c7a10" stroke-width=".6" stroke-linejoin="round"/></g>
<g transform="translate(1067,90)"><line x1="-9" y1="-5" x2="-2" y2="-5" stroke="#b05848" stroke-width="1.4" stroke-linecap="round" /><line x1="-9" y1="6" x2="9" y2="6" stroke="#3a68c8" stroke-width="1.8" stroke-linecap="round" /><polygon points="-2.0,0.1 6.4,0.1 6.4,2.2 10.0,-1.0 6.4,-4.2 6.4,-2.1 -2.0,-2.1" fill="#34c820" stroke="#1c7a10" stroke-width=".6" stroke-linejoin="round"/></g>
<g transform="translate(1093,90)"><path d="M4 -7 A8.5 8.5 0 1 0 8 3" fill="none" stroke="#3a68c8" stroke-width="2" stroke-linejoin="round" stroke-linecap="round" /><polygon points="-4.0,1.1 3.6,1.1 3.6,3.1 7.0,0.0 3.6,-3.1 3.6,-1.1 -4.0,-1.1" fill="#34c820" stroke="#1c7a10" stroke-width=".6" stroke-linejoin="round"/><ellipse cx="-3" cy="0" rx="2" ry="2" fill="none" stroke="#3a68c8" stroke-width="1" /><text x="5" y="-4" font-family="Liberation Sans,sans-serif" font-weight="bold" font-size="8" fill="#101010">R</text></g>
<g transform="translate(1119,90)"><path d="M-2 0 L10 -8 L9 -3 Z" fill="#e0e4ec" stroke="#606878" stroke-width="0.6" stroke-linejoin="round" stroke-linecap="round" /><path d="M-2 1 L9 6 L4 8Z" fill="#c0c4cc" stroke="#606878" stroke-width="0.6" stroke-linejoin="round" stroke-linecap="round" /><ellipse cx="-6" cy="-4" rx="3" ry="3.6" fill="none" stroke="#e02020" stroke-width="2" /><ellipse cx="-6" cy="5" rx="3" ry="3.6" fill="none" stroke="#e02020" stroke-width="2" /><ellipse cx="-1" cy="0.5" rx="1" ry="1" fill="#404040" stroke="none" stroke-width="1" /></g>
<g transform="translate(1145,90)"><line x1="-9" y1="-7" x2="9" y2="-7" stroke="#3a68c8" stroke-width="1.6" stroke-linecap="round" /><line x1="-5" y1="-9" x2="-5" y2="-5" stroke="#3a68c8" stroke-width="1.4" stroke-linecap="round" /><line x1="5" y1="-9" x2="5" y2="-5" stroke="#3a68c8" stroke-width="1.4" stroke-linecap="round" /><line x1="-9" y1="8" x2="9" y2="8" stroke="#3a68c8" stroke-width="1.6" stroke-linecap="round" stroke-dasharray="3 2"/><polygon points="-1.7,-6.0 -1.7,2.8 -3.8,2.8 0.0,7.0 3.8,2.8 1.7,2.8 1.7,-6.0" fill="#34c820" stroke="#1c7a10" stroke-width=".6" stroke-linejoin="round"/></g>
<g transform="translate(1171,90)"><path d="M-9 -8 H-5 M-7 -8 V8 M-9 8 H-5 M9 -8 H5 M7 -8 V8 M9 8 H5" fill="none" stroke="#3a68c8" stroke-width="1.6" stroke-linejoin="round" stroke-linecap="round" /><line x1="-9" y1="-8" x2="9" y2="-8" stroke="#404040" stroke-width="0.8" stroke-linecap="round" stroke-dasharray="4 2"/><line x1="-9" y1="8" x2="9" y2="8" stroke="#404040" stroke-width="0.8" stroke-linecap="round" stroke-dasharray="4 2"/><polygon points="-4.0,1.3 2.4,1.3 2.4,3.2 6.0,0.0 2.4,-3.2 2.4,-1.3 -4.0,-1.3" fill="#34c820" stroke="#1c7a10" stroke-width=".6" stroke-linejoin="round"/></g>
<g transform="translate(1197,90)"><line x1="-9" y1="-3" x2="9" y2="-3" stroke="#404040" stroke-width="1.2" stroke-linecap="round" /><path d="M3 -3 V-7 H9 V-3" fill="none" stroke="#404040" stroke-width="1" stroke-linejoin="round" stroke-linecap="round" /><polygon points="-6.0,4.3 2.4,4.3 2.4,6.2 6.0,3.0 2.4,-0.2 2.4,1.7 -6.0,1.7" fill="#34c820" stroke="#1c7a10" stroke-width=".6" stroke-linejoin="round"/></g>
<g transform="translate(1223,90)"><line x1="-9" y1="3" x2="9" y2="3" stroke="#404040" stroke-width="1.2" stroke-linecap="round" /><polygon points="-1.2,-9.0 -1.2,-2.6 -3.2,-2.6 0.0,1.0 3.2,-2.6 1.2,-2.6 1.2,-9.0" fill="#34c820" stroke="#1c7a10" stroke-width=".6" stroke-linejoin="round"/><path d="M-3 1 L3 6 M3 1 L-3 6" fill="none" stroke="#3a78e8" stroke-width="1.8" stroke-linejoin="round" stroke-linecap="round" /></g>
<rect x="13" y="110" width="2" height="2" fill="#fdfdff"/><rect x="12" y="109" width="2" height="2" fill="#9a9cb0" opacity=".55"/><rect x="13" y="114" width="2" height="2" fill="#fdfdff"/><rect x="12" y="113" width="2" height="2" fill="#9a9cb0" opacity=".55"/><rect x="13" y="118" width="2" height="2" fill="#fdfdff"/><rect x="12" y="117" width="2" height="2" fill="#9a9cb0" opacity=".55"/><rect x="13" y="122" width="2" height="2" fill="#fdfdff"/><rect x="12" y="121" width="2" height="2" fill="#9a9cb0" opacity=".55"/><rect x="13" y="126" width="2" height="2" fill="#fdfdff"/><rect x="12" y="125" width="2" height="2" fill="#9a9cb0" opacity=".55"/><rect x="13" y="130" width="2" height="2" fill="#fdfdff"/><rect x="12" y="129" width="2" height="2" fill="#9a9cb0" opacity=".55"/>
<g transform="translate(33,120)"><path d="M-6.2 -4.6 L0.1 -8.2 L8.2 -5.5 L2.8 -1.9 Z" fill="#e0e8f8" stroke="#4a60a8" stroke-width="1" stroke-linejoin="round" stroke-linecap="round" /><path d="M-6.2 -4.6 L2.8 -1.9 L2.8 7.1 L-5.3 3.5 Z" fill="#b8c8e8" stroke="#4a60a8" stroke-width="1" stroke-linejoin="round" stroke-linecap="round" /><path d="M2.8 -1.9 L8.2 -5.5 L8.2 2.6 L2.8 7.1 Z" fill="#8898c0" stroke="#4a60a8" stroke-width="1" stroke-linejoin="round" stroke-linecap="round" /><path d="M-3 -8 V4 M4 -5 V6" fill="none" stroke="#2a48b0" stroke-width="1.2" stroke-linejoin="round" stroke-linecap="round" /><line x1="-9" y1="3" x2="-9" y2="9" stroke="#2a48b0" stroke-width="1.2" stroke-linecap="round" /><line x1="-9" y1="9" x2="-5" y2="11" stroke="#e02020" stroke-width="1.2" stroke-linecap="round" /></g>
<g transform="translate(59,120)"><ellipse cx="1" cy="9" rx="8" ry="2.2" fill="#30323c" stroke="none" stroke-width="1" opacity="0.35"/><path d="M-7.6 -3.8 L-0.9 -7.6 L7.6 -4.8 L1.9 -0.9 Z" fill="#a8d8e8" stroke="#384858" stroke-width="0.8" stroke-linejoin="round" stroke-linecap="round" /><path d="M-7.6 -3.8 L1.9 -0.9 L1.9 8.5 L-6.6 4.8 Z" fill="#78c0d8" stroke="#384858" stroke-width="0.8" stroke-linejoin="round" stroke-linecap="round" /><path d="M1.9 -0.9 L7.6 -4.8 L7.6 3.8 L1.9 8.5 Z" fill="#4898b8" stroke="#384858" stroke-width="0.8" stroke-linejoin="round" stroke-linecap="round" /><path d="M-10 -3 Q-2 -10 9 -7 L6 -4 Q-2 -6 -7 0Z" fill="#3a68c8" stroke="#1a3888" stroke-width="0.6" stroke-linejoin="round" stroke-linecap="round" /></g>
<g transform="translate(85,120)"><path d="M-8.2 -4.6 L-1.9 -8.2 L6.2 -5.5 L0.8 -1.9 Z" fill="#e6e6e4" stroke="#3c3c3c" stroke-width="0.8" stroke-linejoin="round" stroke-linecap="round" /><path d="M-8.2 -4.6 L0.8 -1.9 L0.8 7.1 L-7.3 3.5 Z" fill="#a2a49e" stroke="#3c3c3c" stroke-width="0.8" stroke-linejoin="round" stroke-linecap="round" /><path d="M0.8 -1.9 L6.2 -5.5 L6.2 2.6 L0.8 7.1 Z" fill="#70726c" stroke="#3c3c3c" stroke-width="0.8" stroke-linejoin="round" stroke-linecap="round" /><path d="M-9 3 L0 8 L7 2" fill="none" stroke="#807800" stroke-width="2.6" stroke-linejoin="round" stroke-linecap="round" /><path d="M-9 3 L0 8 L7 2" fill="none" stroke="#f0e820" stroke-width="1.6" stroke-linejoin="round" stroke-linecap="round" /><polygon points="8.9,6.0 8.9,-6.0 10.7,-6.0 8.0,-9.0 5.3,-6.0 7.1,-6.0 7.1,6.0" fill="#34c820" stroke="#1c7a10" stroke-width=".6" stroke-linejoin="round"/></g>
<g transform="translate(111,120)"><ellipse cx="1" cy="9" rx="8" ry="2.2" fill="#30323c" stroke="none" stroke-width="1" opacity="0.35"/><path d="M-3 -7 L-8 7 A8 2.4 0 0 0 8 7 L3 -7Z" fill="#a8b0a0" stroke="#485048" stroke-width="0.8" stroke-linejoin="round" stroke-linecap="round" /><ellipse cx="0" cy="-7" rx="3" ry="1.2" fill="#e0e4dc" stroke="#485048" stroke-width="0.6" /><path d="M0 -5 L7 7 L-2 9" fill="none" stroke="#807800" stroke-width="2.4" stroke-linejoin="round" stroke-linecap="round" /><path d="M0 -5 L7 7 L-2 9" fill="none" stroke="#f0e820" stroke-width="1.4" stroke-linejoin="round" stroke-linecap="round" /><polygon points="-7.5,2.7 -4.0,0.4 -3.0,1.9 -2.0,-2.0 -6.0,-2.6 -5.0,-1.1 -8.5,1.3" fill="#34c820" stroke="#1c7a10" stroke-width=".6" stroke-linejoin="round"/><polygon points="0.9,-3.0 0.9,-8.0 2.7,-8.0 0.0,-11.0 -2.7,-8.0 -0.9,-8.0 -0.9,-3.0" fill="#34c820" stroke="#1c7a10" stroke-width=".6" stroke-linejoin="round"/></g>
<g transform="translate(137,120)"><ellipse cx="1" cy="9" rx="8" ry="2.2" fill="#30323c" stroke="none" stroke-width="1" opacity="0.35"/><path d="M-8.0 -4.0 L-1.0 -8.0 L8.0 -5.0 L2.0 -1.0 Z" fill="#e8ecec" stroke="#303838" stroke-width="0.8" stroke-linejoin="round" stroke-linecap="round" /><path d="M-8.0 -4.0 L2.0 -1.0 L2.0 9.0 L-7.0 5.0 Z" fill="#58a8b0" stroke="#303838" stroke-width="0.8" stroke-linejoin="round" stroke-linecap="round" /><path d="M2.0 -1.0 L8.0 -5.0 L8.0 4.0 L2.0 9.0 Z" fill="#3a8890" stroke="#303838" stroke-width="0.8" stroke-linejoin="round" stroke-linecap="round" /><path d="M-8 -4 L2 -1 L2 9 L-7 5Z" fill="#60b0b8" stroke="#303838" stroke-width="0.7" stroke-linejoin="round" stroke-linecap="round" /></g>
<g transform="translate(163,120)"><ellipse cx="1" cy="9" rx="8" ry="2.2" fill="#30323c" stroke="none" stroke-width="1" opacity="0.35"/><path d="M-8.0 -4.0 L-1.0 -8.0 L8.0 -5.0 L2.0 -1.0 Z" fill="#e8ecec" stroke="#303838" stroke-width="0.8" stroke-linejoin="round" stroke-linecap="round" /><path d="M-8.0 -4.0 L2.0 -1.0 L2.0 9.0 L-7.0 5.0 Z" fill="#58a8b0" stroke="#303838" stroke-width="0.8" stroke-linejoin="round" stroke-linecap="round" /><path d="M2.0 -1.0 L8.0 -5.0 L8.0 4.0 L2.0 9.0 Z" fill="#3a8890" stroke="#303838" stroke-width="0.8" stroke-linejoin="round" stroke-linecap="round" /><path d="M-7 5 L2 9 L8 4" fill="none" stroke="#e03030" stroke-width="1.6" stroke-linejoin="round" stroke-linecap="round" /><polygon points="2.4,4.6 6.5,8.6 5.2,9.8 9.0,10.0 8.8,6.2 7.6,7.5 3.6,3.4" fill="#34c820" stroke="#1c7a10" stroke-width=".6" stroke-linejoin="round"/></g>
<g transform="translate(189,120)"><path d="M-7.8 -2.4 L-1.9 -5.8 L5.8 -3.2 L0.7 0.2 Z" fill="#e6e6e4" stroke="#3c3c3c" stroke-width="0.8" stroke-linejoin="round" stroke-linecap="round" /><path d="M-7.8 -2.4 L0.7 0.2 L0.7 8.6 L-7.0 5.2 Z" fill="#a2a49e" stroke="#3c3c3c" stroke-width="0.8" stroke-linejoin="round" stroke-linecap="round" /><path d="M0.7 0.2 L5.8 -3.2 L5.8 4.4 L0.7 8.6 Z" fill="#70726c" stroke="#3c3c3c" stroke-width="0.8" stroke-linejoin="round" stroke-linecap="round" /><path d="M0 -2 L5 -4 V5 L0 8Z" fill="#58a8d0" stroke="#285878" stroke-width="0.6" stroke-linejoin="round" stroke-linecap="round" /><polygon points="2.0,2.0 2.0,-6.8 3.9,-6.8 1.0,-10.0 -1.9,-6.8 -0.0,-6.8 0.0,2.0" fill="#34c820" stroke="#1c7a10" stroke-width=".6" stroke-linejoin="round"/><polygon points="1.5,3.9 5.7,6.3 4.8,7.9 9.0,7.0 7.7,2.9 6.7,4.5 2.5,2.1" fill="#34c820" stroke="#1c7a10" stroke-width=".6" stroke-linejoin="round"/><line x1="-6" y1="8" x2="2" y2="10" stroke="#e03030" stroke-width="1.4" stroke-linecap="round" /></g>
<g transform="translate(215,120)"><path d="M-9.4 -5.2 L-3.8 -8.4 L3.4 -6.0 L-1.4 -2.8 Z" fill="#e6e6e4" stroke="#3c3c3c" stroke-width="0.8" stroke-linejoin="round" stroke-linecap="round" /><path d="M-9.4 -5.2 L-1.4 -2.8 L-1.4 5.2 L-8.6 2.0 Z" fill="#a2a49e" stroke="#3c3c3c" stroke-width="0.8" stroke-linejoin="round" stroke-linecap="round" /><path d="M-1.4 -2.8 L3.4 -6.0 L3.4 1.2 L-1.4 5.2 Z" fill="#70726c" stroke="#3c3c3c" stroke-width="0.8" stroke-linejoin="round" stroke-linecap="round" /><path d="M-2 0 L6 3 L6 8 L-2 5Z" fill="#58a8d0" stroke="#285878" stroke-width="0.6" stroke-linejoin="round" stroke-linecap="round" opacity=".8"/><polygon points="-1.5,3.2 5.8,6.5 4.9,8.6 10.0,7.0 7.8,2.1 6.9,4.2 -0.5,0.8" fill="#34c820" stroke="#1c7a10" stroke-width=".6" stroke-linejoin="round"/></g>
<g transform="translate(241,120)"><path d="M-10 0 Q-4 -5 2 -2 Q6 -4 9 0 L6 8 Q0 10 -7 7Z" fill="#78b8f0" stroke="#3a78c8" stroke-width="0.8" stroke-linejoin="round" stroke-linecap="round" /><path d="M-7 2 Q-2 0 2 2 Q0 6 -5 5Z" fill="#b8dcf8" stroke="none" stroke-width="1" stroke-linejoin="round" stroke-linecap="round" /><polygon points="7.0,4.0 7.0,-6.8 8.9,-6.8 6.0,-10.0 3.1,-6.8 5.0,-6.8 5.0,4.0" fill="#34c820" stroke="#1c7a10" stroke-width=".6" stroke-linejoin="round"/></g>
<g transform="translate(267,120)"><path d="M-8.2 -4.6 L-1.9 -8.2 L6.2 -5.5 L0.8 -1.9 Z" fill="#f0f0f0" stroke="#3c3c3c" stroke-width="0.8" stroke-linejoin="round" stroke-linecap="round" /><path d="M-8.2 -4.6 L0.8 -1.9 L0.8 7.1 L-7.3 3.5 Z" fill="#a8aaa8" stroke="#3c3c3c" stroke-width="0.8" stroke-linejoin="round" stroke-linecap="round" /><path d="M0.8 -1.9 L6.2 -5.5 L6.2 2.6 L0.8 7.1 Z" fill="#88a8c8" stroke="#3c3c3c" stroke-width="0.8" stroke-linejoin="round" stroke-linecap="round" /><path d="M-2 -1 L10 8 M9 -2 L0 9" fill="none" stroke="#e01818" stroke-width="2" stroke-linejoin="round" stroke-linecap="round" /></g>
<g transform="translate(293,120)"><ellipse cx="2" cy="9" rx="6" ry="2" fill="#30323c" stroke="none" stroke-width="1" opacity="0.35"/><path d="M-2.5 -3.5 L-2.5 7.5 A5.5 2.6 0 0 0 8.5 7.5 L8.5 -3.5 Z" fill="#a0a29c" stroke="#484a46" stroke-width="0.9" stroke-linejoin="round" stroke-linecap="round" /><path d="M4.65 -1.5 L4.65 9.7 A5.5 2.6 0 0 0 8.5 7.5 L8.5 -3.5 Z" fill="#787a74" stroke="none" stroke-width="1" stroke-linejoin="round" stroke-linecap="round" /><ellipse cx="3" cy="-3.5" rx="5.5" ry="2.6" fill="#e0e0dc" stroke="#484a46" stroke-width="0.9" /><path d="M-2.0 -3.5 Q-0.5 -7.2 3.2 -8.8 Q7.0 -10.2 10.0 -8.0 L10.0 -4.2 Q7.8 -3.5 6.2 -4.2 L2.5 -2.8 Q-0.5 -1.2 -2.0 -3.5 Z" fill="#f4c878" stroke="#a87020" stroke-width="0.8" stroke-linejoin="round" stroke-linecap="round" /><path d="M3.2 -5.8 L7.0 -6.5 M4.0 -4.2 L7.8 -5.0" fill="none" stroke="#a87020" stroke-width="0.6" stroke-linejoin="round" stroke-linecap="round" /><text x="-11" y="-1" font-family="Liberation Sans,sans-serif" font-weight="bold" font-size="8" fill="#d02020">R</text><path d="M-9 2 L-4 6 M-4 2 L-9 6" fill="none" stroke="#e03030" stroke-width="1.4" stroke-linejoin="round" stroke-linecap="round" /></g>
<rect x="318" y="110" width="2" height="2" fill="#fdfdff"/><rect x="317" y="109" width="2" height="2" fill="#9a9cb0" opacity=".55"/><rect x="318" y="114" width="2" height="2" fill="#fdfdff"/><rect x="317" y="113" width="2" height="2" fill="#9a9cb0" opacity=".55"/><rect x="318" y="118" width="2" height="2" fill="#fdfdff"/><rect x="317" y="117" width="2" height="2" fill="#9a9cb0" opacity=".55"/><rect x="318" y="122" width="2" height="2" fill="#fdfdff"/><rect x="317" y="121" width="2" height="2" fill="#9a9cb0" opacity=".55"/><rect x="318" y="126" width="2" height="2" fill="#fdfdff"/><rect x="317" y="125" width="2" height="2" fill="#9a9cb0" opacity=".55"/><rect x="318" y="130" width="2" height="2" fill="#fdfdff"/><rect x="317" y="129" width="2" height="2" fill="#9a9cb0" opacity=".55"/>
<g transform="translate(337,120)"><line x1="-9" y1="-6" x2="8" y2="8" stroke="#3a68c8" stroke-width="1.8" stroke-linecap="round" /><line x1="-6" y1="-9" x2="-1" y2="-4" stroke="#3a68c8" stroke-width="1.4" stroke-linecap="round" /><ellipse cx="-2" cy="8" rx="6" ry="1.6" fill="#5a88d0" stroke="none" stroke-width="1" opacity=".6"/><polygon points="-1.0,5.2 9.4,-6.8 6.6,-9.2 -3.8,2.8" fill="#f0a030" stroke="#8a5010" stroke-width=".6"/><polygon points="-1.0,5.2 -5.0,7.0 -3.8,2.8" fill="#f4d8a8" stroke="#8a5010" stroke-width=".5"/><polygon points="7.9,-5.0 9.4,-6.8 6.6,-9.2 5.0,-7.4" fill="#d04040"/><line x1="-5" y1="7" x2="-3.96" y2="5.8" stroke="#303030" stroke-width="1.2" stroke-linecap="round" /></g>
<g transform="translate(363,120)"><ellipse cx="-7" cy="-6" rx="2.6" ry="2.6" fill="#e8ecf4" stroke="#707888" stroke-width="1" /><ellipse cx="4" cy="5" rx="4" ry="4" fill="#e8ecf4" stroke="#707888" stroke-width="1" /><line x1="-5" y1="-7" x2="8" y2="3" stroke="#3a68c8" stroke-width="1.8" stroke-linecap="round" /></g>
<g transform="translate(389,120)"><path d="M-9 8 L6 -8" fill="none" stroke="#3a68c8" stroke-width="2" stroke-linejoin="round" stroke-linecap="round" /><line x1="-9" y1="8" x2="8" y2="8" stroke="#3a68c8" stroke-width="1.8" stroke-linecap="round" /><polygon points="7.9,1.0 7.9,-5.0 9.7,-5.0 7.0,-8.0 4.3,-5.0 6.1,-5.0 6.1,1.0" fill="#34c820" stroke="#1c7a10" stroke-width=".6" stroke-linejoin="round"/><polygon points="6.1,0.0 6.1,5.0 4.3,5.0 7.0,8.0 9.7,5.0 7.9,5.0 7.9,-0.0" fill="#34c820" stroke="#1c7a10" stroke-width=".6" stroke-linejoin="round"/></g>
<g transform="translate(415,120)"><line x1="-10" y1="4" x2="0" y2="9" stroke="#a0a4ac" stroke-width="1.4" stroke-linecap="round" /><line x1="-3" y1="-9" x2="9" y2="3" stroke="#3a68c8" stroke-width="2" stroke-linecap="round" /><polygon points="-6.1,7.0 0.9,0.6 2.4,2.4 3.0,-3.0 -2.4,-3.0 -0.8,-1.3 -7.9,5.0" fill="#34c820" stroke="#1c7a10" stroke-width=".6" stroke-linejoin="round"/><rect x="2" y="-5" width="3" height="4" rx="0" fill="#38c428" stroke="#187a10" stroke-width="0.5" transform="rotate(40 3 -3)"/></g>
<g transform="translate(441,120)"><path d="M-8 -9 V2 M-3 -9 V2 M3 -9 V2 M8 -9 V2" fill="none" stroke="#3a68c8" stroke-width="1.2" stroke-linejoin="round" stroke-linecap="round" stroke-dasharray="3 1.5"/><path d="M-9 3 H-4 V6 H4 V3 H9 V9 H-9Z" fill="#7aa8e8" stroke="#2a58b8" stroke-width="1" stroke-linejoin="round" stroke-linecap="round" /></g>
<g transform="translate(467,120)"><path d="M-9 -7 H1 L8 0 V9" fill="none" stroke="#3a68c8" stroke-width="1.8" stroke-linejoin="round" stroke-linecap="round" /><path d="M1 -7 H8 V0" fill="none" stroke="#404040" stroke-width="0.8" stroke-linejoin="round" stroke-linecap="round" stroke-dasharray="2 1.5"/></g>
<g transform="translate(493,120)"><path d="M-1 -9 V-2 M-1 2 V9 M-9 3 H-1" fill="none" stroke="#3a68c8" stroke-width="1.6" stroke-linejoin="round" stroke-linecap="round" /><path d="M3 -2 V6 M-1 2 H7" fill="none" stroke="#f8f8f8" stroke-width="1.8" stroke-linejoin="round" stroke-linecap="round" /><line x1="-1" y1="-9" x2="-1" y2="-6" stroke="#2040a0" stroke-width="2" stroke-linecap="round" /></g>
<g transform="translate(519,120)"><path d="M-7 -9 V9 L5 -2 Z" fill="none" stroke="#3a68c8" stroke-width="1.8" stroke-linejoin="round" stroke-linecap="round" /><path d="M7 -9 V-2 M3.5 -5.5 H10.5" fill="none" stroke="#f8f8f8" stroke-width="1.8" stroke-linejoin="round" stroke-linecap="round" /></g>
<g transform="translate(545,120)"><path d="M-6.6 -1.0 Q-6.6 -7.6 0.9 -7.6 L0.9 -10.0 L6.6 -5.8 L0.9 -1.9 L0.9 -4.3 Q-2.8 -4.3 -2.8 -0.1 Z" fill="#38c428" stroke="#187a10" stroke-width="0.7" stroke-linejoin="round" stroke-linecap="round" /><path d="M6.6 -1.0 Q6.6 5.6 -0.9 5.6 L-0.9 8.0 L-6.6 3.8 L-0.9 -0.1 L-0.9 2.3 Q2.8 2.3 2.8 -1.9 Z" fill="#38c428" stroke="#187a10" stroke-width="0.7" stroke-linejoin="round" stroke-linecap="round" /><line x1="-9" y1="9" x2="9" y2="9" stroke="#3a68c8" stroke-width="1.8" stroke-linecap="round" /><line x1="-9" y1="-10" x2="9" y2="-10" stroke="#3a68c8" stroke-width="1" stroke-linecap="round" stroke-dasharray="2 2"/></g>
<g transform="translate(571,120)"><ellipse cx="0" cy="0" rx="9.5" ry="8.5" fill="none" stroke="#3a68c8" stroke-width="1.6" stroke-dasharray="1.6 2.4"/><path d="M-5 -4 L-4 7 Q0 9 4 7 L5 -4Z" fill="#a8c8e8" stroke="#4a78b0" stroke-width="0.8" stroke-linejoin="round" stroke-linecap="round" /><ellipse cx="0" cy="-4" rx="5" ry="1.8" fill="#d8e8f8" stroke="#4a78b0" stroke-width="0.8" /></g>
<rect x="596" y="110" width="2" height="2" fill="#fdfdff"/><rect x="595" y="109" width="2" height="2" fill="#9a9cb0" opacity=".55"/><rect x="596" y="114" width="2" height="2" fill="#fdfdff"/><rect x="595" y="113" width="2" height="2" fill="#9a9cb0" opacity=".55"/><rect x="596" y="118" width="2" height="2" fill="#fdfdff"/><rect x="595" y="117" width="2" height="2" fill="#9a9cb0" opacity=".55"/><rect x="596" y="122" width="2" height="2" fill="#fdfdff"/><rect x="595" y="121" width="2" height="2" fill="#9a9cb0" opacity=".55"/><rect x="596" y="126" width="2" height="2" fill="#fdfdff"/><rect x="595" y="125" width="2" height="2" fill="#9a9cb0" opacity=".55"/><rect x="596" y="130" width="2" height="2" fill="#fdfdff"/><rect x="595" y="129" width="2" height="2" fill="#9a9cb0" opacity=".55"/>
<g transform="translate(615,120)"><ellipse cx="0" cy="9" rx="6" ry="1.8" fill="#30323c" stroke="none" stroke-width="1" opacity="0.3"/><text x="0" y="5.0" text-anchor="middle" font-family="Liberation Sans,sans-serif" font-weight="bold" font-size="19.0" fill="#4a78d0" stroke="#28479a" stroke-width=".5">?</text></g>
<g transform="translate(641,120)"><text x="2" y="3.0999999999999996" text-anchor="middle" font-family="Liberation Sans,sans-serif" font-weight="bold" font-size="16.15" fill="#4a78d0" stroke="#28479a" stroke-width=".5">?</text><path d="M-9 4 H-5 M-7 2 V6" fill="none" stroke="#303030" stroke-width="0.8" stroke-linejoin="round" stroke-linecap="round" /><line x1="-5" y1="5" x2="6" y2="5" stroke="#303030" stroke-width="0.8" stroke-linecap="round" stroke-dasharray="1 1.5"/><ellipse cx="-1" cy="6" rx="2" ry="1.2" fill="#8a8e98" stroke="none" stroke-width="1" /></g>
<g transform="translate(667,120)"><text x="1" y="0.8000000000000007" text-anchor="middle" font-family="Liberation Sans,sans-serif" font-weight="bold" font-size="15.200000000000001" fill="#4a78d0" stroke="#28479a" stroke-width=".5">?</text><line x1="-8" y1="5" x2="8" y2="8" stroke="#3a58b0" stroke-width="1.4" stroke-linecap="round" /><path d="M-11 3 H-7 M-9 1 V5 M7 8 H11 M9 6 V10" fill="none" stroke="#303030" stroke-width="0.8" stroke-linejoin="round" stroke-linecap="round" /></g>
<g transform="translate(693,120)"><text x="3" y="0.8000000000000007" text-anchor="middle" font-family="Liberation Sans,sans-serif" font-weight="bold" font-size="15.200000000000001" fill="#4a78d0" stroke="#28479a" stroke-width=".5">?</text><line x1="-8" y1="-9" x2="-8" y2="8" stroke="#303030" stroke-width="1.2" stroke-linecap="round" /><line x1="-7" y1="4" x2="6" y2="8" stroke="#3a58b0" stroke-width="1.4" stroke-linecap="round" /><path d="M5 9 H9 M7 7 V11" fill="none" stroke="#303030" stroke-width="0.8" stroke-linejoin="round" stroke-linecap="round" /></g>
<g transform="translate(719,120)"><text x="5" y="2.8000000000000007" text-anchor="middle" font-family="Liberation Sans,sans-serif" font-weight="bold" font-size="15.200000000000001" fill="#4a78d0" stroke="#28479a" stroke-width=".5">?</text><polygon points="-5.2,2.9 -6.7,-6.2 -4.8,-6.5 -8.0,-9.0 -10.2,-5.6 -8.3,-5.9 -6.8,3.1" fill="#3a78e8" stroke="#1a3c98" stroke-width=".6" stroke-linejoin="round"/><polygon points="-5.4,3.5 0.6,-3.2 2.0,-2.0 2.0,-6.0 -2.0,-5.6 -0.6,-4.3 -6.6,2.5" fill="#e82828" stroke="#901010" stroke-width=".6" stroke-linejoin="round"/><line x1="-9" y1="9" x2="8" y2="6" stroke="#606878" stroke-width="1" stroke-linecap="round" /><ellipse cx="-6" cy="3" rx="1.4" ry="1.4" fill="#fff" stroke="#606060" stroke-width="0.5" /></g>
<g transform="translate(745,120)"><path d="M-2.6 0.2 L2.3 -2.6 L8.6 -0.5 L4.4 2.3 Z" fill="#e6e6e4" stroke="#3c3c3c" stroke-width="0.8" stroke-linejoin="round" stroke-linecap="round" /><path d="M-2.6 0.2 L4.4 2.3 L4.4 9.3 L-1.9 6.5 Z" fill="#a2a49e" stroke="#3c3c3c" stroke-width="0.8" stroke-linejoin="round" stroke-linecap="round" /><path d="M4.4 2.3 L8.6 -0.5 L8.6 5.8 L4.4 9.3 Z" fill="#70726c" stroke="#3c3c3c" stroke-width="0.8" stroke-linejoin="round" stroke-linecap="round" /><text x="-2" y="0.8000000000000007" text-anchor="middle" font-family="Liberation Sans,sans-serif" font-weight="bold" font-size="15.200000000000001" fill="#4a78d0" stroke="#28479a" stroke-width=".5">?</text><path d="M-10 8 H-6 M-8 6 V10 M7 -7 H11 M9 -9 V-5" fill="none" stroke="#2040a0" stroke-width="1" stroke-linejoin="round" stroke-linecap="round" /></g>
<rect x="770" y="110" width="2" height="2" fill="#fdfdff"/><rect x="769" y="109" width="2" height="2" fill="#9a9cb0" opacity=".55"/><rect x="770" y="114" width="2" height="2" fill="#fdfdff"/><rect x="769" y="113" width="2" height="2" fill="#9a9cb0" opacity=".55"/><rect x="770" y="118" width="2" height="2" fill="#fdfdff"/><rect x="769" y="117" width="2" height="2" fill="#9a9cb0" opacity=".55"/><rect x="770" y="122" width="2" height="2" fill="#fdfdff"/><rect x="769" y="121" width="2" height="2" fill="#9a9cb0" opacity=".55"/><rect x="770" y="126" width="2" height="2" fill="#fdfdff"/><rect x="769" y="125" width="2" height="2" fill="#9a9cb0" opacity=".55"/><rect x="770" y="130" width="2" height="2" fill="#fdfdff"/><rect x="769" y="129" width="2" height="2" fill="#9a9cb0" opacity=".55"/>
<g transform="translate(789,120)"><path d="M-9 2 Q-6 -10 -2 -2 Q2 8 5 4 Q8 0 9 8" fill="none" stroke="#3a6ad0" stroke-width="1.6" stroke-linejoin="round" stroke-linecap="round" /><polygon points="0.8,4.4 10.4,-6.8 7.6,-9.2 -2.0,2.0" fill="#f0a030" stroke="#8a5010" stroke-width=".6"/><polygon points="0.8,4.4 -3.0,6.0 -2.0,2.0" fill="#f4d8a8" stroke="#8a5010" stroke-width=".5"/><polygon points="9.0,-5.1 10.4,-6.8 7.6,-9.2 6.1,-7.6" fill="#d04040"/><line x1="-3" y1="6" x2="-2.04" y2="4.88" stroke="#303030" stroke-width="1.2" stroke-linecap="round" /></g>
<g transform="translate(815,120)"><path d="M-9 -2 L5 -5 L9 1 L-5 4Z M-7 -6 L0 8 L8 -4Z" fill="none" stroke="#707888" stroke-width="1" stroke-linejoin="round" stroke-linecap="round" /><path d="M-5 -1 Q0 3 6 -3" fill="none" stroke="#3a6ad0" stroke-width="1.4" stroke-linejoin="round" stroke-linecap="round" /></g>
<g transform="translate(841,120)"><ellipse cx="2" cy="8" rx="7" ry="2" fill="#30323c" stroke="none" stroke-width="1" opacity="0.4"/><path d="M-9 2 Q-3 -9 7 -9 L10 -5 Q1 -3 -3 8Z" fill="#b8d0f0" stroke="#3a68c8" stroke-width="1" stroke-linejoin="round" stroke-linecap="round" /><path d="M-6 5 Q-1 -5 9 -7 M-8 0 L2 6" fill="none" stroke="#3a68c8" stroke-width="1.2" stroke-linejoin="round" stroke-linecap="round" /><line x1="-4" y1="-4" x2="4" y2="4" stroke="#2a50b0" stroke-width="1.6" stroke-linecap="round" /></g>
<g transform="translate(867,120)"><ellipse cx="2" cy="8" rx="7" ry="2" fill="#30323c" stroke="none" stroke-width="1" opacity="0.4"/><path d="M-9 2 Q-3 -9 7 -9 L10 -5 Q1 -3 -3 8Z" fill="#b8d0f0" stroke="#3a68c8" stroke-width="1" stroke-linejoin="round" stroke-linecap="round" /><path d="M-6 5 Q-1 -5 9 -7 M-8 0 L2 6" fill="none" stroke="#3a68c8" stroke-width="1.2" stroke-linejoin="round" stroke-linecap="round" /><path d="M-6 0 L0 4 M-2 -2 V5" fill="none" stroke="#303030" stroke-width="0.8" stroke-linejoin="round" stroke-linecap="round" /></g>
<g transform="translate(893,120)"><ellipse cx="2" cy="8" rx="7" ry="2" fill="#30323c" stroke="none" stroke-width="1" opacity="0.4"/><path d="M-9 2 Q-3 -9 7 -9 L10 -5 Q1 -3 -3 8Z" fill="#b8d0f0" stroke="#3a68c8" stroke-width="1" stroke-linejoin="round" stroke-linecap="round" /><path d="M-6 5 Q-1 -5 9 -7 M-8 0 L2 6" fill="none" stroke="#3a68c8" stroke-width="1.2" stroke-linejoin="round" stroke-linecap="round" /><line x1="-5" y1="-3" x2="5" y2="5" stroke="#e08030" stroke-width="1.2" stroke-linecap="round" /><line x1="-2" y1="6" x2="6" y2="-8" stroke="#e08030" stroke-width="1" stroke-linecap="round" /></g>
<g transform="translate(919,120)"><ellipse cx="1" cy="-5" rx="6" ry="3.6" fill="none" stroke="#3a68c8" stroke-width="1.6" /><ellipse cx="-1" cy="5" rx="6.5" ry="3.6" fill="none" stroke="#3a68c8" stroke-width="1.6" /><line x1="0" y1="-2" x2="0" y2="2" stroke="#3a68c8" stroke-width="1.4" stroke-linecap="round" /></g>
<g transform="translate(945,120)"><path d="M-9 0 Q-7 -10 -3 -8 Q0 -6 1 2" fill="none" stroke="#606878" stroke-width="1" stroke-linejoin="round" stroke-linecap="round" /><path d="M-2 -2 Q2 10 8 4 L9 0" fill="none" stroke="#3a6ad0" stroke-width="1.6" stroke-linejoin="round" stroke-linecap="round" /><polygon points="2.0,-8.0 2.0,-1.2 0.1,-1.2 3.0,2.0 5.9,-1.2 4.0,-1.2 4.0,-8.0" fill="#34c820" stroke="#1c7a10" stroke-width=".6" stroke-linejoin="round"/></g>
<g transform="translate(971,120)"><path d="M-9 -7 Q0 -10 9 -7" fill="none" stroke="#404858" stroke-width="1" stroke-linejoin="round" stroke-linecap="round" /><path d="M-10 4 Q-5 1 0 5 Q5 9 10 4" fill="none" stroke="#3a6ad0" stroke-width="1.6" stroke-linejoin="round" stroke-linecap="round" /><polygon points="-4.9,-7.0 -4.9,0.0 -6.7,0.0 -4.0,3.0 -1.3,-0.0 -3.1,-0.0 -3.1,-7.0" fill="#34c820" stroke="#1c7a10" stroke-width=".6" stroke-linejoin="round"/><polygon points="4.1,-7.0 4.1,1.0 2.3,1.0 5.0,4.0 7.7,1.0 5.9,1.0 5.9,-7.0" fill="#34c820" stroke="#1c7a10" stroke-width=".6" stroke-linejoin="round"/></g>
<g transform="translate(997,120)"><path d="M-9 -4 Q0 -10 9 -4" fill="none" stroke="#606878" stroke-width="1" stroke-linejoin="round" stroke-linecap="round" /><path d="M-10 5 Q-5 2 0 6 Q5 9 10 5" fill="none" stroke="#3a6ad0" stroke-width="1.6" stroke-linejoin="round" stroke-linecap="round" /><polygon points="-0.9,-7.0 -0.9,1.0 -2.7,1.0 0.0,4.0 2.7,1.0 0.9,1.0 0.9,-7.0" fill="#34c820" stroke="#1c7a10" stroke-width=".6" stroke-linejoin="round"/></g>
<g transform="translate(1023,120)"><path d="M-10 -4 Q0 -11 10 -4" fill="none" stroke="#3a6ad0" stroke-width="1.6" stroke-linejoin="round" stroke-linecap="round" /><path d="M-9 6 Q-4 3 0 7 Q5 10 9 6" fill="none" stroke="#606878" stroke-width="1" stroke-linejoin="round" stroke-linecap="round" /><polygon points="0.9,5.0 0.9,-3.0 2.7,-3.0 0.0,-6.0 -2.7,-3.0 -0.9,-3.0 -0.9,5.0" fill="#34c820" stroke="#1c7a10" stroke-width=".6" stroke-linejoin="round"/></g>
<g transform="translate(1049,120)"><path d="M-8 6 Q-7 -10 -2 -4 Q3 8 8 -6" fill="none" stroke="#3a6ad0" stroke-width="1.6" stroke-linejoin="round" stroke-linecap="round" /><path d="M-9 7 V-6 Q-6 -12 -2 -8 M8 -8 V6" fill="none" stroke="#202020" stroke-width="0.9" stroke-linejoin="round" stroke-linecap="round" stroke-dasharray="1 1.6"/><path d="M-10 8 H-6 M-8 6 V10 M6 7 H10" fill="none" stroke="#202020" stroke-width="0.8" stroke-linejoin="round" stroke-linecap="round" /></g>
<g transform="translate(1075,120)"><path d="M-10 -5 Q-4 -8 0 0 Q4 8 10 4" fill="none" stroke="#3a6ad0" stroke-width="1.7" stroke-linejoin="round" stroke-linecap="round" /><polygon points="3.0,-0.9 8.0,-5.2 9.4,-3.7 10.0,-9.0 4.6,-9.1 6.0,-7.5 1.0,-3.1" fill="#34c820" stroke="#1c7a10" stroke-width=".6" stroke-linejoin="round"/><polygon points="-3.0,1.9 -6.9,5.3 -8.3,3.7 -9.0,9.0 -3.6,9.1 -5.0,7.5 -1.0,4.1" fill="#f0e020" stroke="#8a7800" stroke-width=".6" stroke-linejoin="round"/></g>
<g transform="translate(1101,120)"><path d="M-9 9 Q-6 -2 2 -6" fill="none" stroke="#3a6ad0" stroke-width="1.6" stroke-linejoin="round" stroke-linecap="round" /><line x1="2" y1="-6" x2="10" y2="-6" stroke="#303030" stroke-width="1.2" stroke-linecap="round" /><line x1="3" y1="-8" x2="3" y2="-4" stroke="#303030" stroke-width="1" stroke-linecap="round" /><line x1="-8" y1="5" x2="-5" y2="6" stroke="#303030" stroke-width="1" stroke-linecap="round" /></g>
<g transform="translate(1127,120)"><path d="M-10 -5 Q-6 -9 -3 -3" fill="none" stroke="#3a6ad0" stroke-width="1.6" stroke-linejoin="round" stroke-linecap="round" /><path d="M0 5 Q4 10 9 6" fill="none" stroke="#3a6ad0" stroke-width="1.6" stroke-linejoin="round" stroke-linecap="round" /><polygon points="-3.8,-9.4 -0.7,-5.0 -2.2,-3.9 2.0,-3.0 2.5,-7.3 1.0,-6.2 -2.2,-10.6" fill="#34c820" stroke="#1c7a10" stroke-width=".6" stroke-linejoin="round"/><polygon points="7.8,4.4 4.8,0.8 6.3,-0.4 2.0,-1.0 1.8,3.3 3.3,2.1 6.2,5.6" fill="#34c820" stroke="#1c7a10" stroke-width=".6" stroke-linejoin="round"/></g>
<g transform="translate(1153,120)"><path d="M-10 -5 Q-6 -9 -3 -3" fill="none" stroke="#3a6ad0" stroke-width="1.6" stroke-linejoin="round" stroke-linecap="round" /><path d="M0 5 Q4 10 9 6" fill="none" stroke="#3a6ad0" stroke-width="1.6" stroke-linejoin="round" stroke-linecap="round" /><polygon points="-3.8,-9.4 -0.7,-5.0 -2.2,-3.9 2.0,-3.0 2.5,-7.3 1.0,-6.2 -2.2,-10.6" fill="#f040d0" stroke="#a01890" stroke-width=".6" stroke-linejoin="round"/><polygon points="7.8,4.4 4.8,0.8 6.3,-0.4 2.0,-1.0 1.8,3.3 3.3,2.1 6.2,5.6" fill="#f040d0" stroke="#a01890" stroke-width=".6" stroke-linejoin="round"/></g>
<g transform="translate(1179,120)"><path d="M-9 4 Q-9 -8 -3 -2 Q1 10 6 6 Q9 2 8 -4" fill="none" stroke="#3a6ad0" stroke-width="1.7" stroke-linejoin="round" stroke-linecap="round" /><path d="M-5.6 -2.1 Q-3.7 -6.8 1.1 -8.8 Q5.8 -10.6 9.6 -7.8 L9.6 -3.0 Q6.8 -2.1 4.8 -3.0 L0.1 -1.2 Q-3.7 0.8 -5.6 -2.1 Z" fill="#f4c878" stroke="#a87020" stroke-width="0.8" stroke-linejoin="round" stroke-linecap="round" /><path d="M1.1 -5.0 L5.8 -5.9 M2.0 -3.0 L6.8 -4.0" fill="none" stroke="#a87020" stroke-width="0.6" stroke-linejoin="round" stroke-linecap="round" /></g>
<rect x="13" y="140" width="2" height="2" fill="#fdfdff"/><rect x="12" y="139" width="2" height="2" fill="#9a9cb0" opacity=".55"/><rect x="13" y="144" width="2" height="2" fill="#fdfdff"/><rect x="12" y="143" width="2" height="2" fill="#9a9cb0" opacity=".55"/><rect x="13" y="148" width="2" height="2" fill="#fdfdff"/><rect x="12" y="147" width="2" height="2" fill="#9a9cb0" opacity=".55"/><rect x="13" y="152" width="2" height="2" fill="#fdfdff"/><rect x="12" y="151" width="2" height="2" fill="#9a9cb0" opacity=".55"/><rect x="13" y="156" width="2" height="2" fill="#fdfdff"/><rect x="12" y="155" width="2" height="2" fill="#9a9cb0" opacity=".55"/><rect x="13" y="160" width="2" height="2" fill="#fdfdff"/><rect x="12" y="159" width="2" height="2" fill="#9a9cb0" opacity=".55"/>
<g transform="translate(33,150)"><path d="M0.2 2.6 L4.4 0.2 L9.8 2.0 L6.2 4.4 Z" fill="#707070" stroke="#3c3c3c" stroke-width="0.8" stroke-linejoin="round" stroke-linecap="round" /><path d="M0.2 2.6 L6.2 4.4 L6.2 10.4 L0.8 8.0 Z" fill="#585858" stroke="#3c3c3c" stroke-width="0.8" stroke-linejoin="round" stroke-linecap="round" /><path d="M6.2 4.4 L9.8 2.0 L9.8 7.4 L6.2 10.4 Z" fill="#404040" stroke="#3c3c3c" stroke-width="0.8" stroke-linejoin="round" stroke-linecap="round" /><line x1="-2.8499999999999996" y1="1.8499999999999996" x2="-8.35" y2="7.35" stroke="#9aa0a8" stroke-width="2.6" stroke-linecap="round" /><ellipse cx="1" cy="-2" rx="5.5" ry="5.5" fill="#dce8f8" stroke="#b8c4d8" stroke-width="1.8" /><ellipse cx="-0.5" cy="-3.5" rx="2.475" ry="2.475" fill="#fff" stroke="none" stroke-width="1" opacity=".7"/><path d="M-10 -9 H-6 M-8 -11 V-7 M-10 -5 H-6" fill="none" stroke="#101010" stroke-width="1" stroke-linejoin="round" stroke-linecap="round" /></g>
<g transform="translate(59,150)"><path d="M0.2 2.6 L4.4 0.2 L9.8 2.0 L6.2 4.4 Z" fill="#589850" stroke="#3c3c3c" stroke-width="0.8" stroke-linejoin="round" stroke-linecap="round" /><path d="M0.2 2.6 L6.2 4.4 L6.2 10.4 L0.8 8.0 Z" fill="#487840" stroke="#3c3c3c" stroke-width="0.8" stroke-linejoin="round" stroke-linecap="round" /><path d="M6.2 4.4 L9.8 2.0 L9.8 7.4 L6.2 10.4 Z" fill="#386030" stroke="#3c3c3c" stroke-width="0.8" stroke-linejoin="round" stroke-linecap="round" /><rect x="-8" y="-8" width="16" height="16" rx="0" fill="none" stroke="#58b848" stroke-width="0.8" stroke-dasharray="2 2"/><line x1="-2.8499999999999996" y1="1.8499999999999996" x2="-8.35" y2="7.35" stroke="#9aa0a8" stroke-width="2.6" stroke-linecap="round" /><ellipse cx="1" cy="-2" rx="5.5" ry="5.5" fill="#dce8f8" stroke="#b8c4d8" stroke-width="1.8" /><ellipse cx="-0.5" cy="-3.5" rx="2.475" ry="2.475" fill="#fff" stroke="none" stroke-width="1" opacity=".7"/><rect x="-9.6" y="-9.6" width="3.2" height="3.2" rx="0" fill="#58d040" stroke="#208018" stroke-width="0.6" /><rect x="6.4" y="-9.6" width="3.2" height="3.2" rx="0" fill="#58d040" stroke="#208018" stroke-width="0.6" /><rect x="-9.6" y="6.4" width="3.2" height="3.2" rx="0" fill="#58d040" stroke="#208018" stroke-width="0.6" /><rect x="6.4" y="6.4" width="3.2" height="3.2" rx="0" fill="#58d040" stroke="#208018" stroke-width="0.6" /></g>
<g transform="translate(85,150)"><line x1="-6" y1="6" x2="4" y2="-4" stroke="#909890" stroke-width="3.2" stroke-linecap="round" /><polygon points="-5.2,6.8 6.2,-4.7 8.6,-2.3 9.0,-9.0 2.3,-8.6 4.7,-6.2 -6.8,5.2" fill="#34c820" stroke="#1c7a10" stroke-width=".6" stroke-linejoin="round"/><ellipse cx="-6" cy="6" rx="2.6" ry="2.6" fill="#e8f0d0" stroke="#606858" stroke-width="1" /></g>
<g transform="translate(111,150)"><path d="M-7.4 0.0 Q-7.4 -7.4 1.1 -7.4 L1.1 -10.0 L7.4 -5.2 L1.1 -1.1 L1.1 -3.7 Q-3.2 -3.7 -3.2 1.1 Z" fill="#38b848" stroke="#186828" stroke-width="0.7" stroke-linejoin="round" stroke-linecap="round" /><path d="M7.4 0.0 Q7.4 7.4 -1.1 7.4 L-1.1 10.0 L-7.4 5.2 L-1.1 1.1 L-1.1 3.7 Q3.2 3.7 3.2 -1.1 Z" fill="#38b848" stroke="#186828" stroke-width="0.7" stroke-linejoin="round" stroke-linecap="round" /><path d="M-2 -3 L3 -1 M2 3 L-3 1" fill="none" stroke="#c050c0" stroke-width="1" stroke-linejoin="round" stroke-linecap="round" /></g>
<g transform="translate(137,150)"><path d="M-10 2 L-2 -5 L8 1 L-1 9Z" fill="none" stroke="#8a8e98" stroke-width="0.7" stroke-linejoin="round" stroke-linecap="round" /><polygon points="-1.0,3.0 -1.0,-6.6 1.1,-6.6 -2.0,-10.0 -5.1,-6.6 -3.0,-6.6 -3.0,3.0" fill="#3a78e8" stroke="#1a3c98" stroke-width=".6" stroke-linejoin="round"/><polygon points="-1.5,3.6 5.3,-2.4 6.6,-1.0 7.0,-5.0 3.0,-5.0 4.2,-3.6 -2.5,2.4" fill="#38c428" stroke="#187a10" stroke-width=".6" stroke-linejoin="round"/><polygon points="-2.6,3.8 2.7,7.8 1.4,9.4 6.0,9.0 5.1,4.5 3.9,6.2 -1.4,2.2" fill="#e82828" stroke="#901010" stroke-width=".6" stroke-linejoin="round"/><ellipse cx="-2" cy="3" rx="1.6" ry="1.6" fill="#fff" stroke="#606060" stroke-width="0.5" /></g>
<g transform="translate(163,150)"><path d="M-10 -4 Q-4 -11 4 -10 Q9 -8 10 -3 Q4 -7 -2 -6 Q-7 -5 -10 -4Z" fill="#3a4a78" stroke="#1a2448" stroke-width="0.6" stroke-linejoin="round" stroke-linecap="round" /><ellipse cx="-1" cy="3" rx="7" ry="7" fill="#f0d828" stroke="#907810" stroke-width="0.8" /><ellipse cx="-3.5" cy="1" rx="1" ry="1.4" fill="#202020" stroke="none" stroke-width="1" /><ellipse cx="1.5" cy="1" rx="1" ry="1.4" fill="#202020" stroke="none" stroke-width="1" /><path d="M-5 5 Q-1 9 3 5" fill="none" stroke="#202020" stroke-width="1" stroke-linejoin="round" stroke-linecap="round" /><polygon points="2.7,5.7 9.3,-1.7 11.0,-0.2 11.0,-5.0 6.2,-4.5 7.8,-3.0 1.3,4.3" fill="#34c820" stroke="#1c7a10" stroke-width=".6" stroke-linejoin="round"/></g>
<g transform="translate(189,150)"><path d="M-1 -8 L-1 1 L-8 6 M-1 1 L9 4" fill="none" stroke="#101010" stroke-width="1.2" stroke-linejoin="round" stroke-linecap="round" /><path d="M-9 -4 L-1 -8 L9 -5 L2 -1 Z" fill="#70e060" stroke="none" stroke-width="1" stroke-linejoin="round" stroke-linecap="round" /><path d="M-9 -4 L-1 -8 L9 -5 L2 -1 Z" fill="none" stroke="#101010" stroke-width="1.4" stroke-linejoin="round" stroke-linecap="round" /><path d="M-9 -4 L2 -1 L2 10 L-8 6 Z" fill="none" stroke="#101010" stroke-width="1.4" stroke-linejoin="round" stroke-linecap="round" /><path d="M2 -1 L9 -5 L9 4 L2 10 Z" fill="none" stroke="#101010" stroke-width="1.4" stroke-linejoin="round" stroke-linecap="round" /></g>
<g transform="translate(215,150)"><path d="M-8 6 L-1 1 L9 4 L2 10 Z" fill="#30c028" stroke="none" stroke-width="1" stroke-linejoin="round" stroke-linecap="round" /><path d="M-1 -8 L-1 1 L-8 6 M-1 1 L9 4" fill="none" stroke="#101010" stroke-width="1.2" stroke-linejoin="round" stroke-linecap="round" /><path d="M-9 -4 L-1 -8 L9 -5 L2 -1 Z" fill="none" stroke="#101010" stroke-width="1.4" stroke-linejoin="round" stroke-linecap="round" /><path d="M-9 -4 L2 -1 L2 10 L-8 6 Z" fill="none" stroke="#101010" stroke-width="1.4" stroke-linejoin="round" stroke-linecap="round" /><path d="M2 -1 L9 -5 L9 4 L2 10 Z" fill="none" stroke="#101010" stroke-width="1.4" stroke-linejoin="round" stroke-linecap="round" /></g>
<g transform="translate(241,150)"><path d="M-1 -8 L-1 1 L-8 6 M-1 1 L9 4" fill="none" stroke="#101010" stroke-width="1.2" stroke-linejoin="round" stroke-linecap="round" /><path d="M-9 -4 L2 -1 L2 10 L-8 6 Z" fill="#30c028" stroke="none" stroke-width="1" stroke-linejoin="round" stroke-linecap="round" /><path d="M-9 -4 L-1 -8 L9 -5 L2 -1 Z" fill="none" stroke="#101010" stroke-width="1.4" stroke-linejoin="round" stroke-linecap="round" /><path d="M-9 -4 L2 -1 L2 10 L-8 6 Z" fill="none" stroke="#101010" stroke-width="1.4" stroke-linejoin="round" stroke-linecap="round" /><path d="M2 -1 L9 -5 L9 4 L2 10 Z" fill="none" stroke="#101010" stroke-width="1.4" stroke-linejoin="round" stroke-linecap="round" /></g>
<g transform="translate(267,150)"><path d="M-1 -8 L-1 1 L-8 6 M-1 1 L9 4" fill="none" stroke="#101010" stroke-width="1.2" stroke-linejoin="round" stroke-linecap="round" /><path d="M2 -1 L9 -5 L9 4 L2 10 Z" fill="#1c9418" stroke="none" stroke-width="1" stroke-linejoin="round" stroke-linecap="round" /><path d="M-9 -4 L-1 -8 L9 -5 L2 -1 Z" fill="none" stroke="#101010" stroke-width="1.4" stroke-linejoin="round" stroke-linecap="round" /><path d="M-9 -4 L2 -1 L2 10 L-8 6 Z" fill="none" stroke="#101010" stroke-width="1.4" stroke-linejoin="round" stroke-linecap="round" /><path d="M2 -1 L9 -5 L9 4 L2 10 Z" fill="none" stroke="#101010" stroke-width="1.4" stroke-linejoin="round" stroke-linecap="round" /></g>
<g transform="translate(293,150)"><path d="M-9 -4 L-1 -8 L-1 1 L-8 6 Z" fill="#30c028" stroke="none" stroke-width="1" stroke-linejoin="round" stroke-linecap="round" /><path d="M-1 -8 L-1 1 L-8 6 M-1 1 L9 4" fill="none" stroke="#101010" stroke-width="1.2" stroke-linejoin="round" stroke-linecap="round" /><path d="M-9 -4 L-1 -8 L9 -5 L2 -1 Z" fill="none" stroke="#101010" stroke-width="1.4" stroke-linejoin="round" stroke-linecap="round" /><path d="M-9 -4 L2 -1 L2 10 L-8 6 Z" fill="none" stroke="#101010" stroke-width="1.4" stroke-linejoin="round" stroke-linecap="round" /><path d="M2 -1 L9 -5 L9 4 L2 10 Z" fill="none" stroke="#101010" stroke-width="1.4" stroke-linejoin="round" stroke-linecap="round" /></g>
<g transform="translate(319,150)"><path d="M-1 -8 L9 -5 L9 4 L-1 1 Z" fill="#1c9418" stroke="none" stroke-width="1" stroke-linejoin="round" stroke-linecap="round" /><path d="M-1 -8 L-1 1 L-8 6 M-1 1 L9 4" fill="none" stroke="#101010" stroke-width="1.2" stroke-linejoin="round" stroke-linecap="round" /><path d="M-9 -4 L-1 -8 L9 -5 L2 -1 Z" fill="none" stroke="#101010" stroke-width="1.4" stroke-linejoin="round" stroke-linecap="round" /><path d="M-9 -4 L2 -1 L2 10 L-8 6 Z" fill="none" stroke="#101010" stroke-width="1.4" stroke-linejoin="round" stroke-linecap="round" /><path d="M2 -1 L9 -5 L9 4 L2 10 Z" fill="none" stroke="#101010" stroke-width="1.4" stroke-linejoin="round" stroke-linecap="round" /></g>
<g transform="translate(345,150)"><path d="M-9 -4 L-1 -8 L9 -5 L2 -1 Z" fill="#70e060" stroke="#1c9418" stroke-width="0.8" stroke-linejoin="round" stroke-linecap="round" /><path d="M-9 -4 L2 -1 L2 10 L-8 6 Z" fill="#30c028" stroke="#1c9418" stroke-width="0.8" stroke-linejoin="round" stroke-linecap="round" /><path d="M2 -1 L9 -5 L9 4 L2 10 Z" fill="#1c9418" stroke="#106010" stroke-width="0.8" stroke-linejoin="round" stroke-linecap="round" /></g>
<g transform="translate(371,150)"><rect x="-7" y="-5" width="14" height="10" rx="0" fill="#f4f4f4" stroke="#404040" stroke-width="0.8" /><rect x="-9.6" y="-7.6" width="3.2" height="3.2" rx="0" fill="#58d040" stroke="#208018" stroke-width="0.6" /><rect x="6.4" y="-7.6" width="3.2" height="3.2" rx="0" fill="#58d040" stroke="#208018" stroke-width="0.6" /><rect x="-9.6" y="4.4" width="3.2" height="3.2" rx="0" fill="#58d040" stroke="#208018" stroke-width="0.6" /><rect x="6.4" y="4.4" width="3.2" height="3.2" rx="0" fill="#58d040" stroke="#208018" stroke-width="0.6" /><text x="0" y="3.6" text-anchor="middle" font-family="Liberation Sans,sans-serif" font-weight="bold" font-size="9" fill="#101010">1:1</text></g>
<rect x="396" y="140" width="2" height="2" fill="#fdfdff"/><rect x="395" y="139" width="2" height="2" fill="#9a9cb0" opacity=".55"/><rect x="396" y="144" width="2" height="2" fill="#fdfdff"/><rect x="395" y="143" width="2" height="2" fill="#9a9cb0" opacity=".55"/><rect x="396" y="148" width="2" height="2" fill="#fdfdff"/><rect x="395" y="147" width="2" height="2" fill="#9a9cb0" opacity=".55"/><rect x="396" y="152" width="2" height="2" fill="#fdfdff"/><rect x="395" y="151" width="2" height="2" fill="#9a9cb0" opacity=".55"/><rect x="396" y="156" width="2" height="2" fill="#fdfdff"/><rect x="395" y="155" width="2" height="2" fill="#9a9cb0" opacity=".55"/><rect x="396" y="160" width="2" height="2" fill="#fdfdff"/><rect x="395" y="159" width="2" height="2" fill="#9a9cb0" opacity=".55"/>
<g transform="translate(415,150)"><path d="M-8 -8 H8 V-1.5 H2 V3 H8 V8 H-8Z" fill="none" stroke="#7a7200" stroke-width="2.7" stroke-linejoin="round" stroke-linecap="round" /><path d="M-8 -8 H8 V-1.5 H2 V3 H8 V8 H-8Z" fill="none" stroke="#f4ec20" stroke-width="1.5" stroke-linejoin="round" stroke-linecap="round" /></g>
<g transform="translate(441,150)"><path d="M-8 -8 H8 V-1.5 H2 V3 H8 V8 H-8Z" fill="none" stroke="#8a8000" stroke-width="2.8" stroke-linejoin="round" stroke-linecap="round" stroke-dasharray="4 2"/><path d="M-8 -8 H8 V-1.5 H2 V3 H8 V8 H-8Z" fill="none" stroke="#f4ec20" stroke-width="1.8" stroke-linejoin="round" stroke-linecap="round" stroke-dasharray="4 2"/></g>
<g transform="translate(467,150)"><path d="M-8 -8 H8 V-1.5 H2 V3 H8 V8 H-8Z" fill="none" stroke="#7a7200" stroke-width="2.7" stroke-linejoin="round" stroke-linecap="round" /><path d="M-8 -8 H8 V-1.5 H2 V3 H8 V8 H-8Z" fill="none" stroke="#f4ec20" stroke-width="1.5" stroke-linejoin="round" stroke-linecap="round" /><path d="M-7 6 L-3 -2 L5 -8 L9 -8 L8 -3 L1 4Z" fill="#c8ccd4" stroke="#505868" stroke-width="0.7" stroke-linejoin="round" stroke-linecap="round" /><path d="M-7 6 L-5 2 L-2 5Z" fill="#d8a040" stroke="#705010" stroke-width="0.5" stroke-linejoin="round" stroke-linecap="round" /><line x1="-2" y1="-1" x2="3" y2="3" stroke="#505868" stroke-width="0.7" stroke-linecap="round" /></g>
<g transform="translate(493,150)"><path d="M-5.2 -3.6 L1.1 -7.2 L9.2 -4.5 L3.8 -0.9 Z" fill="#e6e6e4" stroke="#3c3c3c" stroke-width="0.8" stroke-linejoin="round" stroke-linecap="round" /><path d="M-5.2 -3.6 L3.8 -0.9 L3.8 8.1 L-4.3 4.5 Z" fill="#a2a49e" stroke="#3c3c3c" stroke-width="0.8" stroke-linejoin="round" stroke-linecap="round" /><path d="M3.8 -0.9 L9.2 -4.5 L9.2 3.6 L3.8 8.1 Z" fill="#70726c" stroke="#3c3c3c" stroke-width="0.8" stroke-linejoin="round" stroke-linecap="round" /><path d="M-8 -5 L-2 -8 L-2 6 L-8 9Z" fill="none" stroke="#7a7200" stroke-width="2.5" stroke-linejoin="round" stroke-linecap="round" /><path d="M-8 -5 L-2 -8 L-2 6 L-8 9Z" fill="none" stroke="#f4ec20" stroke-width="1.3" stroke-linejoin="round" stroke-linecap="round" /></g>
<g transform="translate(519,150)"><path d="M-8 -8 H8 V8 H-8Z" fill="none" stroke="#7a7200" stroke-width="2.7" stroke-linejoin="round" stroke-linecap="round" /><path d="M-8 -8 H8 V8 H-8Z" fill="none" stroke="#f4ec20" stroke-width="1.5" stroke-linejoin="round" stroke-linecap="round" /></g>
<g transform="translate(545,150)"><path d="M-9 0 A9 6 0 1 0 9 0 A9 6 0 1 0 -9 0" fill="none" stroke="#8a8000" stroke-width="2.8" stroke-linejoin="round" stroke-linecap="round" /><path d="M-9 0 A9 6 0 1 0 9 0 A9 6 0 1 0 -9 0" fill="none" stroke="#f4ec20" stroke-width="1.8" stroke-linejoin="round" stroke-linecap="round" /></g>
<g transform="translate(571,150)"><path d="M-4 -9 Q8 -6 6 2 Q4 9 -5 9 Q3 5 2 0 Q2 -4 -4 -9Z" fill="none" stroke="#7a7200" stroke-width="2.7" stroke-linejoin="round" stroke-linecap="round" /><path d="M-4 -9 Q8 -6 6 2 Q4 9 -5 9 Q3 5 2 0 Q2 -4 -4 -9Z" fill="none" stroke="#f4ec20" stroke-width="1.5" stroke-linejoin="round" stroke-linecap="round" /></g>
<g transform="translate(597,150)"><path d="M-8 -4 L1 -9 L9 -1 L3 8 L-7 5Z" fill="none" stroke="#7a7200" stroke-width="2.7" stroke-linejoin="round" stroke-linecap="round" /><path d="M-8 -4 L1 -9 L9 -1 L3 8 L-7 5Z" fill="none" stroke="#f4ec20" stroke-width="1.5" stroke-linejoin="round" stroke-linecap="round" /></g>
<g transform="translate(623,150)"><path d="M-8 -8 H2 M8 -2 V-2 H2 V3 H8 V8 H-8 V-8" fill="none" stroke="#7a7200" stroke-width="2.7" stroke-linejoin="round" stroke-linecap="round" /><path d="M-8 -8 H2 M8 -2 V-2 H2 V3 H8 V8 H-8 V-8" fill="none" stroke="#f4ec20" stroke-width="1.5" stroke-linejoin="round" stroke-linecap="round" /><path d="M3 -3 L9 -9 M5 -9 H9 V-5" fill="none" stroke="#101010" stroke-width="1.6" stroke-linejoin="round" stroke-linecap="round" /></g>
<g transform="translate(649,150)"><path d="M-8 -8 H2 L8 -2 V8 H-8Z" fill="none" stroke="#7a7200" stroke-width="2.7" stroke-linejoin="round" stroke-linecap="round" /><path d="M-8 -8 H2 L8 -2 V8 H-8Z" fill="none" stroke="#f4ec20" stroke-width="1.5" stroke-linejoin="round" stroke-linecap="round" /><path d="M-4 -3 H0 V2 H5 V6 H-4Z" fill="none" stroke="#4038d8" stroke-width="1.6" stroke-linejoin="round" stroke-linecap="round" /></g>
<g transform="translate(675,150)"><path d="M-8 -8 H2 Q8 -8 8 -2 V0 M-8 -8 V8 H0" fill="none" stroke="#7a7200" stroke-width="2.7" stroke-linejoin="round" stroke-linecap="round" /><path d="M-8 -8 H2 Q8 -8 8 -2 V0 M-8 -8 V8 H0" fill="none" stroke="#f4ec20" stroke-width="1.5" stroke-linejoin="round" stroke-linecap="round" /><path d="M-3.8 6.7 Q-2.1 2.5 2.1 0.8 Q6.4 -1.0 9.8 1.6 L9.8 5.8 Q7.2 6.7 5.5 5.8 L1.3 7.5 Q-2.1 9.2 -3.8 6.7 Z" fill="#f4c878" stroke="#a87020" stroke-width="0.8" stroke-linejoin="round" stroke-linecap="round" /><path d="M2.1 4.2 L6.4 3.3 M3.0 5.8 L7.2 5.0" fill="none" stroke="#a87020" stroke-width="0.6" stroke-linejoin="round" stroke-linecap="round" /></g>
<g transform="translate(701,150)"><path d="M-8 -8 H3 V3 H-8Z" fill="none" stroke="#8a8000" stroke-width="2.6" stroke-linejoin="round" stroke-linecap="round" stroke-dasharray="2.5 1.5"/><path d="M-8 -8 H3 V3 H-8Z" fill="none" stroke="#f4ec20" stroke-width="1.6" stroke-linejoin="round" stroke-linecap="round" stroke-dasharray="2.5 1.5"/><path d="M-2 3 V9 H9 V-2 H3" fill="none" stroke="#7a7200" stroke-width="2.5" stroke-linejoin="round" stroke-linecap="round" /><path d="M-2 3 V9 H9 V-2 H3" fill="none" stroke="#f4ec20" stroke-width="1.3" stroke-linejoin="round" stroke-linecap="round" /><polygon points="-4.1,-1.9 2.1,4.2 0.6,5.7 6.0,6.0 5.7,0.6 4.2,2.1 -1.9,-4.1" fill="#34c820" stroke="#1c7a10" stroke-width=".6" stroke-linejoin="round"/></g>
<g transform="translate(17,199)"><ellipse cx="0" cy="8" rx="7" ry="2" fill="#30323c" stroke="none" stroke-width="1" opacity="0.3"/><line x1="-8" y1="-6" x2="-3" y2="-3" stroke="#a0a8b8" stroke-width="1" stroke-linecap="round" /><line x1="-9" y1="-3" x2="-4" y2="-1" stroke="#a0a8b8" stroke-width="1" stroke-linecap="round" /><line x1="-2.6399999999999997" y1="2.6399999999999997" x2="-7.84" y2="7.84" stroke="#9aa0a8" stroke-width="2.6" stroke-linecap="round" /><ellipse cx="1" cy="-1" rx="5.2" ry="5.2" fill="#dce8f8" stroke="#a8b4c8" stroke-width="1.8" /><ellipse cx="-0.5" cy="-2.5" rx="2.3400000000000003" ry="2.3400000000000003" fill="#fff" stroke="none" stroke-width="1" opacity=".7"/></g>
<g transform="translate(43,199)"><line x1="-9" y1="-6" x2="8" y2="8" stroke="#3a68c8" stroke-width="1.8" stroke-linecap="round" /><line x1="-6" y1="-9" x2="-1" y2="-4" stroke="#3a68c8" stroke-width="1.4" stroke-linecap="round" /><ellipse cx="-2" cy="8" rx="6" ry="1.6" fill="#5a88d0" stroke="none" stroke-width="1" opacity=".6"/><polygon points="-1.0,5.2 9.4,-6.8 6.6,-9.2 -3.8,2.8" fill="#f0a030" stroke="#8a5010" stroke-width=".6"/><polygon points="-1.0,5.2 -5.0,7.0 -3.8,2.8" fill="#f4d8a8" stroke="#8a5010" stroke-width=".5"/><polygon points="7.9,-5.0 9.4,-6.8 6.6,-9.2 5.0,-7.4" fill="#d04040"/><line x1="-5" y1="7" x2="-3.96" y2="5.8" stroke="#303030" stroke-width="1.2" stroke-linecap="round" /></g>
<polygon points="48,188 54,188 51,191" fill="#101010"/>
<g transform="translate(17,225)"><rect x="-7" y="-7" width="14" height="14" rx="0" fill="#e8ecf8" stroke="#606878" stroke-width="1.6" /><rect x="-8.6" y="-8.6" width="3.2" height="3.2" rx="0" fill="#58d040" stroke="#208018" stroke-width="0.6" /><rect x="5.4" y="-8.6" width="3.2" height="3.2" rx="0" fill="#58d040" stroke="#208018" stroke-width="0.6" /><rect x="-8.6" y="5.4" width="3.2" height="3.2" rx="0" fill="#58d040" stroke="#208018" stroke-width="0.6" /><rect x="5.4" y="5.4" width="3.2" height="3.2" rx="0" fill="#58d040" stroke="#208018" stroke-width="0.6" /></g>
<g transform="translate(43,225)"><path d="M-9 2 Q-6 -10 -2 -2 Q2 8 5 4 Q8 0 9 8" fill="none" stroke="#3a6ad0" stroke-width="1.6" stroke-linejoin="round" stroke-linecap="round" /><polygon points="0.8,4.4 10.4,-6.8 7.6,-9.2 -2.0,2.0" fill="#f0a030" stroke="#8a5010" stroke-width=".6"/><polygon points="0.8,4.4 -3.0,6.0 -2.0,2.0" fill="#f4d8a8" stroke="#8a5010" stroke-width=".5"/><polygon points="9.0,-5.1 10.4,-6.8 7.6,-9.2 6.1,-7.6" fill="#d04040"/><line x1="-3" y1="6" x2="-2.04" y2="4.88" stroke="#303030" stroke-width="1.2" stroke-linecap="round" /></g>
<polygon points="48,214 54,214 51,217" fill="#101010"/>
<g transform="translate(17,251)"><path d="M0.2 2.6 L4.4 0.2 L9.8 2.0 L6.2 4.4 Z" fill="#707070" stroke="#3c3c3c" stroke-width="0.8" stroke-linejoin="round" stroke-linecap="round" /><path d="M0.2 2.6 L6.2 4.4 L6.2 10.4 L0.8 8.0 Z" fill="#585858" stroke="#3c3c3c" stroke-width="0.8" stroke-linejoin="round" stroke-linecap="round" /><path d="M6.2 4.4 L9.8 2.0 L9.8 7.4 L6.2 10.4 Z" fill="#404040" stroke="#3c3c3c" stroke-width="0.8" stroke-linejoin="round" stroke-linecap="round" /><line x1="-2.8499999999999996" y1="1.8499999999999996" x2="-8.35" y2="7.35" stroke="#9aa0a8" stroke-width="2.6" stroke-linecap="round" /><ellipse cx="1" cy="-2" rx="5.5" ry="5.5" fill="#dce8f8" stroke="#b8c4d8" stroke-width="1.8" /><ellipse cx="-0.5" cy="-3.5" rx="2.475" ry="2.475" fill="#fff" stroke="none" stroke-width="1" opacity=".7"/><path d="M-10 -9 H-6 M-8 -11 V-7 M-10 -5 H-6" fill="none" stroke="#101010" stroke-width="1" stroke-linejoin="round" stroke-linecap="round" /></g>
<polygon points="22,240 28,240 25,243" fill="#101010"/>
<g transform="translate(43,251)"><path d="M-8 -8 H8 V-1.5 H2 V3 H8 V8 H-8Z" fill="none" stroke="#7a7200" stroke-width="2.7" stroke-linejoin="round" stroke-linecap="round" /><path d="M-8 -8 H8 V-1.5 H2 V3 H8 V8 H-8Z" fill="none" stroke="#f4ec20" stroke-width="1.5" stroke-linejoin="round" stroke-linecap="round" /></g>
<polygon points="48,240 54,240 51,243" fill="#101010"/>
<g transform="translate(17,277)"><path d="M-9 -2 L3 -9 L10 -3 L10 3 L-1 10 L-9 4Z" fill="#f0e8f0" stroke="#c05060" stroke-width="0.8" stroke-linejoin="round" stroke-linecap="round" /><path d="M-9 -2 L3 -9 L10 -3 L-1 4Z" fill="none" stroke="#c05060" stroke-width="0.6" stroke-linejoin="round" stroke-linecap="round" /><polygon points="-4.0,3.0 -4.0,-6.6 -1.9,-6.6 -5.0,-10.0 -8.1,-6.6 -6.0,-6.6 -6.0,3.0" fill="#3a78e8" stroke="#1a3c98" stroke-width=".6" stroke-linejoin="round"/><polygon points="-4.2,4.0 2.7,-1.5 4.1,0.3 5.0,-5.0 -0.4,-5.3 1.1,-3.5 -5.8,2.0" fill="#48c838" stroke="#187a10" stroke-width=".6" stroke-linejoin="round"/><polygon points="-5.6,4.0 1.3,8.2 0.2,9.9 5.0,9.0 3.6,4.4 2.5,6.1 -4.4,2.0" fill="#d83040" stroke="#801018" stroke-width=".6" stroke-linejoin="round"/><ellipse cx="-5" cy="3" rx="1.8" ry="1.8" fill="#f8f8f8" stroke="#404040" stroke-width="0.7" /></g>
<polygon points="22,266 28,266 25,269" fill="#101010"/>
<g transform="translate(43,277)"><path d="M-9 2 Q-6 -10 -2 -2 Q2 8 5 4 Q8 0 9 8" fill="none" stroke="#3a6ad0" stroke-width="1.6" stroke-linejoin="round" stroke-linecap="round" /><polygon points="0.8,4.4 10.4,-6.8 7.6,-9.2 -2.0,2.0" fill="#f0a030" stroke="#8a5010" stroke-width=".6"/><polygon points="0.8,4.4 -3.0,6.0 -2.0,2.0" fill="#f4d8a8" stroke="#8a5010" stroke-width=".5"/><polygon points="9.0,-5.1 10.4,-6.8 7.6,-9.2 6.1,-7.6" fill="#d04040"/><line x1="-3" y1="6" x2="-2.04" y2="4.88" stroke="#303030" stroke-width="1.2" stroke-linecap="round" /></g>
<polygon points="48,266 54,266 51,269" fill="#101010"/>
<g transform="translate(17,303)"><rect x="-9" y="-8" width="13" height="2.4" rx="0" fill="#5a88d0" stroke="#2a4890" stroke-width="0.4" /><rect x="-9" y="-4.5" width="13" height="2.4" rx="0" fill="#7aa0e0" stroke="#2a4890" stroke-width="0.4" /><rect x="-9" y="-1" width="13" height="2.4" rx="0" fill="#5a88d0" stroke="#2a4890" stroke-width="0.4" /><ellipse cx="-1" cy="5" rx="8" ry="4.5" fill="#b07848" stroke="#604020" stroke-width="0.7" /><ellipse cx="-5" cy="4" rx="1.6" ry="1.6" fill="#e82020" stroke="none" stroke-width="1" /><ellipse cx="-1" cy="6.5" rx="1.6" ry="1.6" fill="#30c030" stroke="none" stroke-width="1" /><ellipse cx="3" cy="5" rx="1.6" ry="1.6" fill="#3050e0" stroke="none" stroke-width="1" /><line x1="3" y1="2" x2="10" y2="-8" stroke="#c03020" stroke-width="1.6" stroke-linecap="round" /><line x1="2" y1="3" x2="4" y2="1" stroke="#404040" stroke-width="2" stroke-linecap="round" /></g>
<polygon points="22,292 28,292 25,295" fill="#101010"/>
<g transform="translate(43,303)"><path d="M-6 -7 L9 -9 L6 6 L-9 8Z" fill="#78a8e8" stroke="#2a58b8" stroke-width="1" stroke-linejoin="round" stroke-linecap="round" /><path d="M-1 -8 L-4 7 M4 -8.5 L1 6.5 M-7 -2 L8 -4 M-8 3 L7 1" fill="none" stroke="#d8e8fc" stroke-width="1" stroke-linejoin="round" stroke-linecap="round" /></g>
<polygon points="48,292 54,292 51,295" fill="#101010"/>
<g transform="translate(17,329)"><ellipse cx="0" cy="9" rx="7" ry="2" fill="#30323c" stroke="none" stroke-width="1" opacity="0.35"/><path d="M-7.0 -1.0 Q-7.0 -8.0 1.0 -8.0 L1.0 -10.5 L7.0 -6.0 L1.0 -2.0 L1.0 -4.5 Q-3.0 -4.5 -3.0 0.0 Z" fill="#6a98e0" stroke="#3a60b0" stroke-width="0.7" stroke-linejoin="round" stroke-linecap="round" /><path d="M7.0 -1.0 Q7.0 6.0 -1.0 6.0 L-1.0 8.5 L-7.0 4.0 L-1.0 0.0 L-1.0 2.5 Q3.0 2.5 3.0 -2.0 Z" fill="#8ab0e8" stroke="#4a70b8" stroke-width="0.7" stroke-linejoin="round" stroke-linecap="round" /></g>
<polygon points="22,318 28,318 25,321" fill="#101010"/>
<g transform="translate(43,329)"><ellipse cx="1" cy="9" rx="8" ry="2.2" fill="#30323c" stroke="none" stroke-width="1" opacity="0.35"/><path d="M-8.0 -4.0 L-1.0 -8.0 L8.0 -5.0 L2.0 -1.0 Z" fill="#e6e6e4" stroke="#3c3c3c" stroke-width="0.8" stroke-linejoin="round" stroke-linecap="round" /><path d="M-8.0 -4.0 L2.0 -1.0 L2.0 9.0 L-7.0 5.0 Z" fill="#a2a49e" stroke="#3c3c3c" stroke-width="0.8" stroke-linejoin="round" stroke-linecap="round" /><path d="M2.0 -1.0 L8.0 -5.0 L8.0 4.0 L2.0 9.0 Z" fill="#70726c" stroke="#3c3c3c" stroke-width="0.8" stroke-linejoin="round" stroke-linecap="round" /></g>
<polygon points="48,318 54,318 51,321" fill="#101010"/>
<g transform="translate(17,355)"><ellipse cx="0" cy="9" rx="6" ry="1.8" fill="#30323c" stroke="none" stroke-width="1" opacity="0.3"/><text x="0" y="5.0" text-anchor="middle" font-family="Liberation Sans,sans-serif" font-weight="bold" font-size="19.0" fill="#4a78d0" stroke="#28479a" stroke-width=".5">?</text></g>
<polygon points="22,344 28,344 25,347" fill="#101010"/>
<g transform="translate(43,355)"><line x1="-8" y1="-4" x2="8" y2="-4" stroke="#807800" stroke-width="2.4" stroke-linecap="round" /><line x1="-8" y1="-4" x2="8" y2="-4" stroke="#f0e820" stroke-width="1.4" stroke-linecap="round" /><path d="M-8 -7 V8 M8 -7 V8" fill="none" stroke="#101010" stroke-width="1.0" stroke-linejoin="round" stroke-linecap="round" /><path d="M-8 -4 l3 -1.5 v3Z M8 -4 l-3 -1.5 v3Z" fill="#101010" stroke="none" stroke-width="1" stroke-linejoin="round" stroke-linecap="round" /></g>
<polygon points="48,344 54,344 51,347" fill="#101010"/>
<g transform="translate(17,381)"><ellipse cx="1" cy="9" rx="7" ry="2" fill="#30323c" stroke="none" stroke-width="1" opacity="0.35"/><path d="M-7 -5 L-5 9 Q0 11 5 9 L7 -5Z" fill="#a8c8e8" stroke="#4a6890" stroke-width="0.8" stroke-linejoin="round" stroke-linecap="round" /><path d="M-4 -3 L-3 8 M0 -3 V9 M4 -3 L3 8" fill="none" stroke="#58b848" stroke-width="1.6" stroke-linejoin="round" stroke-linecap="round" /><ellipse cx="0" cy="-5" rx="7.5" ry="2.2" fill="#d8e4f4" stroke="#4a6890" stroke-width="0.8" /><path d="M-3 -7 Q0 -10 3 -7" fill="none" stroke="#606870" stroke-width="1.2" stroke-linejoin="round" stroke-linecap="round" /><rect x="-1.5" y="-10" width="3" height="2" rx="0" fill="#f0d020" stroke="none" stroke-width="1" /></g>
<polygon points="22,370 28,370 25,373" fill="#101010"/>
<g transform="translate(43,381)"><ellipse cx="0" cy="8" rx="7" ry="2" fill="#30323c" stroke="none" stroke-width="1" opacity="0.4"/><path d="M-7.2 -1.8 L-1.8 -8.1 L-1.8 -4.5 Q7.2 -4.5 6.3 3.6 Q5.4 7.2 0.9 7.2 Q3.6 3.6 1.8 0.9 Q0.9 -0.9 -1.8 -0.9 L-1.8 3.6 Z" fill="#7fa2e2" stroke="#4a6cb4" stroke-width="0.8" stroke-linejoin="round" stroke-linecap="round" /></g>
<polygon points="48,370 54,370 51,373" fill="#101010"/>
<g transform="translate(17,407)"><rect x="-9" y="-8" width="4" height="16" rx="0" fill="#505860" stroke="#202830" stroke-width="0.6" /><ellipse cx="2" cy="-1" rx="7" ry="7" fill="none" stroke="#a03020" stroke-width="1.6" /><path d="M2 -8 V6 M-5 -1 H9 M-3 -6 L7 4 M7 -6 L-3 4" fill="none" stroke="#a03020" stroke-width="1" stroke-linejoin="round" stroke-linecap="round" /><path d="M-4 3 L2 1 L6 6 L0 10 L-6 8Z" fill="#f08820" stroke="#904808" stroke-width="0.7" stroke-linejoin="round" stroke-linecap="round" /></g>
<polygon points="22,396 28,396 25,399" fill="#101010"/>
<g transform="translate(43,407)"><path d="M-8 -2 H3 L8 3 V9 H-8Z" fill="#f8f8fc" stroke="#101010" stroke-width="1.2" stroke-linejoin="round" stroke-linecap="round" /><path d="M-9 -7 H-3 L-1 -5 H5 V1 H-9Z" fill="#f0d060" stroke="#a07818" stroke-width="0.8" stroke-linejoin="round" stroke-linecap="round" /><path d="M-2 -7 L4 -9 L8 -6 L6 -2 L0 -3Z" fill="#38c428" stroke="#187a10" stroke-width="0.6" stroke-linejoin="round" stroke-linecap="round" /><line x1="-5" y1="5" x2="4" y2="5" stroke="#a0a8b8" stroke-width="0.8" stroke-linecap="round" /></g>
<polygon points="48,396 54,396 51,399" fill="#101010"/>
<g transform="translate(17,433)"><path d="M-9 0 L-1 -8 V-3.5 H9 V3.5 H-1 V8Z" fill="#8a8c8c" stroke="#6c6e6e" stroke-width="0.8" stroke-linejoin="round" stroke-linecap="round" /></g>
<g transform="translate(43,433)"><path d="M9 0 L1 -8 V-3.5 H-9 V3.5 H1 V8Z" fill="#8a8c8c" stroke="#6c6e6e" stroke-width="0.8" stroke-linejoin="round" stroke-linecap="round" /></g>
<rect x="5" y="177" width="2" height="2" fill="#fdfdff"/><rect x="4" y="176" width="2" height="2" fill="#9a9cb0" opacity=".55"/><rect x="9" y="177" width="2" height="2" fill="#fdfdff"/><rect x="8" y="176" width="2" height="2" fill="#9a9cb0" opacity=".55"/><rect x="13" y="177" width="2" height="2" fill="#fdfdff"/><rect x="12" y="176" width="2" height="2" fill="#9a9cb0" opacity=".55"/><rect x="17" y="177" width="2" height="2" fill="#fdfdff"/><rect x="16" y="176" width="2" height="2" fill="#9a9cb0" opacity=".55"/><rect x="21" y="177" width="2" height="2" fill="#fdfdff"/><rect x="20" y="176" width="2" height="2" fill="#9a9cb0" opacity=".55"/><rect x="25" y="177" width="2" height="2" fill="#fdfdff"/><rect x="24" y="176" width="2" height="2" fill="#9a9cb0" opacity=".55"/><rect x="29" y="177" width="2" height="2" fill="#fdfdff"/><rect x="28" y="176" width="2" height="2" fill="#9a9cb0" opacity=".55"/><rect x="33" y="177" width="2" height="2" fill="#fdfdff"/><rect x="32" y="176" width="2" height="2" fill="#9a9cb0" opacity=".55"/><rect x="37" y="177" width="2" height="2" fill="#fdfdff"/><rect x="36" y="176" width="2" height="2" fill="#9a9cb0" opacity=".55"/><rect x="41" y="177" width="2" height="2" fill="#fdfdff"/><rect x="40" y="176" width="2" height="2" fill="#9a9cb0" opacity=".55"/><rect x="45" y="177" width="2" height="2" fill="#fdfdff"/><rect x="44" y="176" width="2" height="2" fill="#9a9cb0" opacity=".55"/><rect x="49" y="177" width="2" height="2" fill="#fdfdff"/><rect x="48" y="176" width="2" height="2" fill="#9a9cb0" opacity=".55"/><rect x="53" y="177" width="2" height="2" fill="#fdfdff"/><rect x="52" y="176" width="2" height="2" fill="#9a9cb0" opacity=".55"/>
<rect x="5" y="457" width="2" height="2" fill="#fdfdff"/><rect x="4" y="456" width="2" height="2" fill="#9a9cb0" opacity=".55"/><rect x="9" y="457" width="2" height="2" fill="#fdfdff"/><rect x="8" y="456" width="2" height="2" fill="#9a9cb0" opacity=".55"/><rect x="13" y="457" width="2" height="2" fill="#fdfdff"/><rect x="12" y="456" width="2" height="2" fill="#9a9cb0" opacity=".55"/><rect x="17" y="457" width="2" height="2" fill="#fdfdff"/><rect x="16" y="456" width="2" height="2" fill="#9a9cb0" opacity=".55"/><rect x="21" y="457" width="2" height="2" fill="#fdfdff"/><rect x="20" y="456" width="2" height="2" fill="#9a9cb0" opacity=".55"/><rect x="25" y="457" width="2" height="2" fill="#fdfdff"/><rect x="24" y="456" width="2" height="2" fill="#9a9cb0" opacity=".55"/><rect x="29" y="457" width="2" height="2" fill="#fdfdff"/><rect x="28" y="456" width="2" height="2" fill="#9a9cb0" opacity=".55"/><rect x="33" y="457" width="2" height="2" fill="#fdfdff"/><rect x="32" y="456" width="2" height="2" fill="#9a9cb0" opacity=".55"/><rect x="37" y="457" width="2" height="2" fill="#fdfdff"/><rect x="36" y="456" width="2" height="2" fill="#9a9cb0" opacity=".55"/><rect x="41" y="457" width="2" height="2" fill="#fdfdff"/><rect x="40" y="456" width="2" height="2" fill="#9a9cb0" opacity=".55"/><rect x="45" y="457" width="2" height="2" fill="#fdfdff"/><rect x="44" y="456" width="2" height="2" fill="#9a9cb0" opacity=".55"/><rect x="49" y="457" width="2" height="2" fill="#fdfdff"/><rect x="48" y="456" width="2" height="2" fill="#9a9cb0" opacity=".55"/><rect x="53" y="457" width="2" height="2" fill="#fdfdff"/><rect x="52" y="456" width="2" height="2" fill="#9a9cb0" opacity=".55"/>
</svg><svg class="abs" id="vp" style="left:60px;top:164px" width="1300" height="531" viewBox="60 164 1300 531" shape-rendering="crispEdges">
<defs><linearGradient id="bg" x1="0" y1="0" x2="0" y2="1"><stop offset="0" stop-color="#03041c"/><stop offset="1" stop-color="#47648f"/></linearGradient><linearGradient id="rl9" x1="0" y1="0" x2="1" y2="0"><stop offset="0" stop-color="#e6e6e6"/><stop offset=".22" stop-color="#c6c6c6"/><stop offset="1" stop-color="#b6b6b6"/></linearGradient></defs>
<rect x="60" y="164" width="1300" height="531" fill="url(#bg)"/>
<g id="p1"><polygon points="179.8,231.1 216.5,241.2 223.2,244.2 218.8,256.1 228.5,261.0 191.3,322.3 186.0,323.0 179.8,320.5 168.3,333.1 165.8,332.0 169.1,326.7 162.9,330.9 148.8,330.7 138.1,325.6 124.9,319.2 132.4,306.8 136.4,305.6 135.0,301.0 139.5,293.9 144.8,293.2 145.7,290.7 120.6,282.9 124.4,278.0 146.1,282.8 155.9,265.9 135.5,260.1 136.9,255.7 162.1,262.8 163.8,256.6" fill="#b5b5b5" /><polyline points="209.9,243.7 183.3,236.6 180.7,243.3 204.6,250.8" fill="none" stroke="#0f1226" stroke-width="2.8" stroke-linejoin="round" stroke-linecap="round" /><polyline points="174.9,251.9 198.4,260.1 193.9,263.6 171.4,257.4" fill="none" stroke="#0f1226" stroke-width="2.6" stroke-linejoin="round" stroke-linecap="round" /><polyline points="191.3,273.8 165.6,266.7 162.1,272.9 186.9,280.9" fill="none" stroke="#0f1226" stroke-width="2.8" stroke-linejoin="round" stroke-linecap="round" /><polyline points="181.5,289.0 156.7,281.5 152.8,288.2 177.1,296.1" fill="none" stroke="#0f1226" stroke-width="2.8" stroke-linejoin="round" stroke-linecap="round" /><polyline points="147.0,297.0 169.1,305.0 165.6,309.0 143.9,303.2" fill="none" stroke="#0f1226" stroke-width="2.6" stroke-linejoin="round" stroke-linecap="round" /><polyline points="162.9,318.7 138.1,312.1 134.2,317.8 157.6,325.8" fill="none" stroke="#0f1226" stroke-width="2.8" stroke-linejoin="round" stroke-linecap="round" /><polyline points="218.8,243.3 205.5,259.7" fill="none" stroke="#0f1226" stroke-width="2.4" stroke-linejoin="round" stroke-linecap="round" /><polygon points="211.2,259.2 218.8,261.4 217.0,265.0 209.0,262.3" fill="#0f1226" /><polyline points="172.7,313.4 164.3,327.6" fill="none" stroke="#0f1226" stroke-width="2.0" stroke-linejoin="round" stroke-linecap="round" /><polygon points="178.0,313.0 185.5,315.2 183.8,318.3 176.2,316.1" fill="#0f1226" /><polygon points="171.4,245.0 175.3,246.8 173.6,248.6 170.0,247.3" fill="#0f1226" /><polygon points="163.4,257.9 167.8,259.7 165.6,261.4 162.1,260.7" fill="#0f1226" /></g>
<g transform="translate(120.8,35.6)"><polygon points="179.8,231.1 216.5,241.2 223.2,244.2 218.8,256.1 228.5,261.0 191.3,322.3 186.0,323.0 179.8,320.5 168.3,333.1 165.8,332.0 169.1,326.7 162.9,330.9 148.8,330.7 138.1,325.6 124.9,319.2 132.4,306.8 136.4,305.6 135.0,301.0 139.5,293.9 144.8,293.2 145.7,290.7 120.6,282.9 124.4,278.0 146.1,282.8 155.9,265.9 135.5,260.1 136.9,255.7 162.1,262.8 163.8,256.6" fill="#b5b5b5" /><polyline points="209.9,243.7 183.3,236.6 180.7,243.3 204.6,250.8" fill="none" stroke="#0f1226" stroke-width="2.8" stroke-linejoin="round" stroke-linecap="round" /><polyline points="174.9,251.9 198.4,260.1 193.9,263.6 171.4,257.4" fill="none" stroke="#0f1226" stroke-width="2.6" stroke-linejoin="round" stroke-linecap="round" /><polyline points="191.3,273.8 165.6,266.7 162.1,272.9 186.9,280.9" fill="none" stroke="#0f1226" stroke-width="2.8" stroke-linejoin="round" stroke-linecap="round" /><polyline points="181.5,289.0 156.7,281.5 152.8,288.2 177.1,296.1" fill="none" stroke="#0f1226" stroke-width="2.8" stroke-linejoin="round" stroke-linecap="round" /><polyline points="147.0,297.0 169.1,305.0 165.6,309.0 143.9,303.2" fill="none" stroke="#0f1226" stroke-width="2.6" stroke-linejoin="round" stroke-linecap="round" /><polyline points="162.9,318.7 138.1,312.1 134.2,317.8 157.6,325.8" fill="none" stroke="#0f1226" stroke-width="2.8" stroke-linejoin="round" stroke-linecap="round" /><polyline points="218.8,243.3 205.5,259.7" fill="none" stroke="#0f1226" stroke-width="2.4" stroke-linejoin="round" stroke-linecap="round" /><polygon points="211.2,259.2 218.8,261.4 217.0,265.0 209.0,262.3" fill="#0f1226" /><polyline points="172.7,313.4 164.3,327.6" fill="none" stroke="#0f1226" stroke-width="2.0" stroke-linejoin="round" stroke-linecap="round" /><polygon points="178.0,313.0 185.5,315.2 183.8,318.3 176.2,316.1" fill="#0f1226" /><polygon points="171.4,245.0 175.3,246.8 173.6,248.6 170.0,247.3" fill="#0f1226" /><polygon points="163.4,257.9 167.8,259.7 165.6,261.4 162.1,260.7" fill="#0f1226" /></g>
<g transform="matrix(0.9556 -0.0372 -0.0553 1.0063 259.343 75.125)"><polygon points="179.8,231.1 216.5,241.2 223.2,244.2 218.8,256.1 228.5,261.0 191.3,322.3 186.0,323.0 179.8,320.5 168.3,333.1 165.8,332.0 169.1,326.7 162.9,330.9 148.8,330.7 138.1,325.6 124.9,319.2" fill="#b5b5b5" /><polyline points="209.9,243.7 183.3,236.6 180.7,243.3 204.6,250.8" fill="none" stroke="#0f1226" stroke-width="2.8" stroke-linejoin="round" stroke-linecap="round" /><polyline points="174.9,251.9 198.4,260.1 193.9,263.6 171.4,257.4" fill="none" stroke="#0f1226" stroke-width="2.6" stroke-linejoin="round" stroke-linecap="round" /><polyline points="191.3,273.8 165.6,266.7 162.1,272.9 186.9,280.9" fill="none" stroke="#0f1226" stroke-width="2.8" stroke-linejoin="round" stroke-linecap="round" /><polyline points="181.5,289.0 156.7,281.5 152.8,288.2 177.1,296.1" fill="none" stroke="#0f1226" stroke-width="2.8" stroke-linejoin="round" stroke-linecap="round" /><polyline points="147.0,297.0 169.1,305.0 165.6,309.0 143.9,303.2" fill="none" stroke="#0f1226" stroke-width="2.6" stroke-linejoin="round" stroke-linecap="round" /><polyline points="162.9,318.7 138.1,312.1 134.2,317.8 157.6,325.8" fill="none" stroke="#0f1226" stroke-width="2.8" stroke-linejoin="round" stroke-linecap="round" /><polyline points="218.8,243.3 205.5,259.7" fill="none" stroke="#0f1226" stroke-width="2.4" stroke-linejoin="round" stroke-linecap="round" /><polygon points="211.2,259.2 218.8,261.4 217.0,265.0 209.0,262.3" fill="#0f1226" /><polyline points="172.7,313.4 164.3,327.6" fill="none" stroke="#0f1226" stroke-width="2.0" stroke-linejoin="round" stroke-linecap="round" /><polygon points="178.0,313.0 185.5,315.2 183.8,318.3 176.2,316.1" fill="#0f1226" /></g><polygon points="398.8,325.7 379.2,337.7 375.2,342.3 381.2,341.0 401.3,329.8" fill="#c4c4c6" stroke="#1a1e38" stroke-width="0.6" stroke-linejoin="round"/><polygon points="383.7,349.9 364.6,360.1 360.7,364.2 366.3,363.5 385.8,354.2" fill="#c4c4c6" stroke="#1a1e38" stroke-width="0.6" stroke-linejoin="round"/>
<g transform="matrix(0.9541 -0.0410 -0.0584 1.0063 374.385 108.970)"><polygon points="179.8,231.1 216.5,241.2 213.4,249.0 217.9,255.2 228.5,261.0 191.3,322.3 186.0,323.0 179.8,320.5 172.7,326.7 162.9,330.9 148.8,330.7 138.1,325.6 124.9,319.2" fill="#b5b5b5" /><polyline points="209.9,243.7 183.3,236.6 180.7,243.3 204.6,250.8" fill="none" stroke="#0f1226" stroke-width="2.8" stroke-linejoin="round" stroke-linecap="round" /><polygon points="183.3,236.6 191.1,238.7 188.5,245.4 180.7,243.3" fill="#1a1e33" /><ellipse cx="188.6" cy="241.7" rx="1.3" ry="2" fill="#cfd0d2" transform="rotate(20 188.6 241.7)"/><polyline points="174.9,251.9 198.4,260.1 193.9,263.6 171.4,257.4" fill="none" stroke="#0f1226" stroke-width="2.6" stroke-linejoin="round" stroke-linecap="round" /><polyline points="191.3,273.8 165.6,266.7 162.1,272.9 186.9,280.9" fill="none" stroke="#0f1226" stroke-width="2.8" stroke-linejoin="round" stroke-linecap="round" /><polygon points="165.6,266.7 173.2,268.8 169.6,275.0 162.1,272.9" fill="#1a1e33" /><ellipse cx="170.3" cy="271.6" rx="1.3" ry="2" fill="#cfd0d2" transform="rotate(20 170.3 271.6)"/><polyline points="181.5,289.0 156.7,281.5 152.8,288.2 177.1,296.1" fill="none" stroke="#0f1226" stroke-width="2.8" stroke-linejoin="round" stroke-linecap="round" /><polygon points="156.7,281.5 164.0,283.7 160.1,290.4 152.8,288.2" fill="#1a1e33" /><ellipse cx="160.9" cy="286.7" rx="1.3" ry="2" fill="#cfd0d2" transform="rotate(20 160.9 286.7)"/><polyline points="147.0,297.0 169.1,305.0 165.6,309.0 143.9,303.2" fill="none" stroke="#0f1226" stroke-width="2.6" stroke-linejoin="round" stroke-linecap="round" /><polyline points="162.9,318.7 138.1,312.1 134.2,317.8 157.6,325.8" fill="none" stroke="#0f1226" stroke-width="2.8" stroke-linejoin="round" stroke-linecap="round" /><polygon points="138.1,312.1 145.4,314.0 141.5,319.8 134.2,317.8" fill="#1a1e33" /><ellipse cx="142.3" cy="316.6" rx="1.3" ry="2" fill="#cfd0d2" transform="rotate(20 142.3 316.6)"/><polyline points="214.3,246.8 205.5,259.7" fill="none" stroke="#0f1226" stroke-width="2.4" stroke-linejoin="round" stroke-linecap="round" /><polygon points="211.2,259.2 218.8,261.4 217.0,265.0 209.0,262.3" fill="#0f1226" /><polyline points="172.7,313.4 164.3,327.6" fill="none" stroke="#0f1226" stroke-width="2.0" stroke-linejoin="round" stroke-linecap="round" /><polygon points="178.0,313.0 185.5,315.2 183.8,318.3 176.2,316.1" fill="#0f1226" /></g><polygon points="511.9,358.9 492.9,370.4 489.1,374.9 494.8,373.8 514.3,363.1" fill="#c4c4c6" stroke="#1a1e38" stroke-width="0.6" stroke-linejoin="round"/><polygon points="498.1,382.5 478.5,393.8 474.5,398.2 480.4,397.2 500.4,386.7" fill="#c4c4c6" stroke="#1a1e38" stroke-width="0.6" stroke-linejoin="round"/><polygon points="561.2,352.2 569.3,353.7 567.1,360.3 558.3,358.8" fill="#b5b5b5" stroke="#10132a" stroke-width="0.8" stroke-linejoin="round"/><polygon points="515.3,428.1 521.1,428.8 518.2,441.2 515.3,441.2" fill="#c8c8c8" stroke="#10132a" stroke-width="0.8" stroke-linejoin="round"/>
<g transform="matrix(0.9581 -0.0342 -0.0504 1.0094 485.497 140.110)"><polygon points="179.8,231.1 216.5,241.2 213.4,249.0 217.9,255.2 228.5,261.0 191.3,322.3 186.0,323.0 179.8,320.5 172.7,326.7 162.9,330.9 148.8,330.7 138.1,325.6 124.9,319.2" fill="#b5b5b5" /><polyline points="209.9,243.7 183.3,236.6 180.7,243.3 204.6,250.8" fill="none" stroke="#0f1226" stroke-width="2.8" stroke-linejoin="round" stroke-linecap="round" /><polygon points="183.3,236.6 191.1,238.7 188.5,245.4 180.7,243.3" fill="#1a1e33" /><ellipse cx="188.6" cy="241.7" rx="1.3" ry="2" fill="#cfd0d2" transform="rotate(20 188.6 241.7)"/><polyline points="174.9,251.9 198.4,260.1 193.9,263.6 171.4,257.4" fill="none" stroke="#0f1226" stroke-width="2.6" stroke-linejoin="round" stroke-linecap="round" /><polyline points="191.3,273.8 165.6,266.7 162.1,272.9 186.9,280.9" fill="none" stroke="#0f1226" stroke-width="2.8" stroke-linejoin="round" stroke-linecap="round" /><polygon points="165.6,266.7 173.2,268.8 169.6,275.0 162.1,272.9" fill="#1a1e33" /><ellipse cx="170.3" cy="271.6" rx="1.3" ry="2" fill="#cfd0d2" transform="rotate(20 170.3 271.6)"/><polyline points="181.5,289.0 156.7,281.5 152.8,288.2 177.1,296.1" fill="none" stroke="#0f1226" stroke-width="2.8" stroke-linejoin="round" stroke-linecap="round" /><polygon points="156.7,281.5 164.0,283.7 160.1,290.4 152.8,288.2" fill="#1a1e33" /><ellipse cx="160.9" cy="286.7" rx="1.3" ry="2" fill="#cfd0d2" transform="rotate(20 160.9 286.7)"/><polyline points="147.0,297.0 169.1,305.0 165.6,309.0 143.9,303.2" fill="none" stroke="#0f1226" stroke-width="2.6" stroke-linejoin="round" stroke-linecap="round" /><polyline points="162.9,318.7 138.1,312.1 134.2,317.8 157.6,325.8" fill="none" stroke="#0f1226" stroke-width="2.8" stroke-linejoin="round" stroke-linecap="round" /><polygon points="138.1,312.1 145.4,314.0 141.5,319.8 134.2,317.8" fill="#1a1e33" /><ellipse cx="142.3" cy="316.6" rx="1.3" ry="2" fill="#cfd0d2" transform="rotate(20 142.3 316.6)"/><polyline points="214.3,246.8 205.5,259.7" fill="none" stroke="#0f1226" stroke-width="2.4" stroke-linejoin="round" stroke-linecap="round" /><polygon points="211.2,259.2 218.8,261.4 217.0,265.0 209.0,262.3" fill="#0f1226" /><polyline points="172.7,313.4 164.3,327.6" fill="none" stroke="#0f1226" stroke-width="2.0" stroke-linejoin="round" stroke-linecap="round" /><polygon points="178.0,313.0 185.5,315.2 183.8,318.3 176.2,316.1" fill="#0f1226" /></g><polygon points="625.5,392.3 605.9,403.7 601.9,408.1 607.8,407.1 627.8,396.5" fill="#c4c4c6" stroke="#1a1e38" stroke-width="0.6" stroke-linejoin="round"/><polygon points="611.7,415.9 592.1,427.1 588.0,431.5 593.9,430.5 614.0,420.2" fill="#c4c4c6" stroke="#1a1e38" stroke-width="0.6" stroke-linejoin="round"/><polygon points="675.5,385.1 683.5,386.5 681.4,393.2 672.6,391.8" fill="#b5b5b5" stroke="#10132a" stroke-width="0.8" stroke-linejoin="round"/><polygon points="629.6,460.6 635.4,461.6 632.8,475.2 629.6,475.2" fill="#c8c8c8" stroke="#10132a" stroke-width="0.8" stroke-linejoin="round"/>
<polygon points="748.6,417.7 783.3,427.8 805.2,430.0 765.6,491.8 755.2,488.3 751.4,487.1 744.3,492.0 742.1,490.4 745.9,485.5 716.4,474.5 716.4,469.1 721.9,459.2 719.7,455.9 733.9,430.8 741.0,428.6" fill="#b2b2b2" /><polyline points="748.1,418.2 741.0,428.4" fill="none" stroke="#e0e0e0" stroke-width="1.6" stroke-linejoin="round" stroke-linecap="round" /><polygon points="749.8,420.9 770.0,426.4 772.7,429.1 768.9,431.3 748.1,425.9" fill="#a8a8a8" stroke="#0f1226" stroke-width="2.2" stroke-linejoin="round"/><polygon points="741.0,435.1 765.6,441.9 762.3,448.8 737.7,441.7" fill="#b0b0b0" stroke="#0f1226" stroke-width="2.6" stroke-linejoin="round"/><polygon points="741.0,435.1 748.1,437.1 745.1,443.7 737.7,441.7" fill="#1c2036" /><ellipse cx="746.48" cy="438.22" rx="1.4" ry="2.2" fill="#d8d8d8"/><polygon points="731.7,450.2 756.9,457.0 753.4,463.8 728.2,456.8" fill="#b0b0b0" stroke="#0f1226" stroke-width="2.6" stroke-linejoin="round"/><polygon points="731.7,450.2 738.8,452.1 735.6,459.0 728.2,456.8" fill="#1c2036" /><ellipse cx="737.18" cy="452.87" rx="1.4" ry="2.2" fill="#d8d8d8"/><polygon points="721.3,465.2 745.9,474.0 746.5,476.7 743.2,478.4 718.0,471.2" fill="#8c8c8c" stroke="#0f1226" stroke-width="2.4" stroke-linejoin="round"/><polygon points="726.2,471.2 741.6,475.1 743.7,476.7 725.7,472.9" fill="#1c2036" /><polyline points="713.7,473.2 744.8,483.5" fill="none" stroke="#15182c" stroke-width="2.6" stroke-linejoin="round" stroke-linecap="round" /><polyline points="713.7,473.6 744.8,483.9" fill="none" stroke="#e4e4e4" stroke-width="1.0" stroke-linejoin="round" stroke-linecap="round" stroke-dasharray="1.5 1.5"/><polygon points="704.9,472.1 710.9,471.2 712.0,475.6 706.6,477.6" fill="#3a3c48" /><polyline points="748.1,481.1 744.6,488.3" fill="none" stroke="#0f1226" stroke-width="2.2" stroke-linejoin="round" stroke-linecap="round" /><polygon points="753.0,481.6 760.7,483.5 759.1,486.6 752.0,484.9" fill="#0f1226" /><polygon points="785.5,427.8 794.3,429.7 792.8,433.2 784.5,431.4" fill="#1a1e33" /><polyline points="785.5,417.6 781.1,427.8" fill="none" stroke="#0f1226" stroke-width="2.4" stroke-linejoin="round" stroke-linecap="round" /><polygon points="756.4,391.3 765.8,395.0 766.6,393.2 777.5,396.4 778.2,398.6 789.9,401.1 781.1,423.4 749.8,414.2" fill="#ececec" stroke="#2a2d40" stroke-width="0.8" stroke-linejoin="round"/><polygon points="759.3,397.9 784.1,405.2 779.0,417.6 755.3,410.7" fill="#2b2e44" /><polygon points="766.6,402.7 782.6,407.4 779.0,415.1 763.2,410.6" fill="#c9c9c9" /><ellipse cx="761.75" cy="404.88" rx="1.6" ry="2.6" fill="#c0c0c0"/><polygon points="795.7,406.6 798.6,407.4 795.0,424.1 787.4,423.0" fill="#d6d6d6" stroke="#1a1d33" stroke-width="0.7" stroke-linejoin="round"/><polyline points="791.4,414.2 797.2,415.1" fill="none" stroke="#f4f4f4" stroke-width="1.0" stroke-linejoin="round" stroke-linecap="round" /><polygon points="733.8,428.7 718.7,438.3 715.9,442.3 720.7,441.6 736.2,432.8" fill="#c4c4c6" stroke="#1a1e38" stroke-width="0.6" stroke-linejoin="round"/><polygon points="719.7,452.3 705.0,460.5 702.2,464.1 706.8,463.8 721.9,456.3" fill="#c4c4c6" stroke="#1a1e38" stroke-width="0.6" stroke-linejoin="round"/>
<polygon points="862.0,451.7 894.8,459.8 918.9,462.7 879.5,524.6 868.5,522.2 862.7,520.3 858.3,524.6 856.1,523.2 859.1,516.6 833.5,488.9 843.8,474.3" fill="#b2b2b2" /><polygon points="863.4,455.4 885.3,460.5 887.5,463.4 883.1,465.6 861.2,459.5" fill="#a8a8a8" stroke="#0f1226" stroke-width="2.0" stroke-linejoin="round"/><polygon points="854.7,468.5 880.2,475.1 876.6,481.9 851.3,474.6" fill="#b0b0b0" stroke="#0f1226" stroke-width="2.2" stroke-linejoin="round"/><polygon points="854.7,468.5 862.0,470.4 858.6,476.8 851.3,474.6" fill="#20243a" /><ellipse cx="860.08" cy="471.13" rx="1.3" ry="2" fill="#d8d8d8"/><polygon points="845.9,483.4 870.7,490.4 866.4,497.7 842.6,490.4" fill="#b0b0b0" stroke="#0f1226" stroke-width="2.2" stroke-linejoin="round"/><polygon points="845.9,483.4 853.2,485.4 849.9,492.1 842.6,490.4" fill="#20243a" /><ellipse cx="851.33" cy="486.29" rx="1.3" ry="2" fill="#c8c8c8"/><polygon points="899.5,460.9 908.2,463.0 906.5,466.3 898.0,464.4" fill="#1a1e33" /><polygon points="865.9,515.5 874.7,517.4 872.9,519.8 864.9,518.1" fill="#1a1e33" /><polygon points="864.2,428.4 866.4,430.6 875.8,433.5 876.6,431.8 887.5,435.0 888.2,437.6 898.4,439.3 895.5,458.6 864.2,447.8" fill="#8e8e8e" stroke="#10132a" stroke-width="1.6" stroke-linejoin="round"/><polygon points="867.4,434.7 894.1,441.7 892.8,454.2 866.8,446.6" fill="#1c1f34" /><polygon points="875.8,440.5 892.2,444.9 891.1,451.0 875.1,446.6" fill="#9c9c9c" /><ellipse cx="872.48" cy="442.98" rx="1.4" ry="2.6" fill="#c8c8c8"/><polygon points="827.7,488.2 834.3,486.7 861.2,499.1 859.8,515.5 827.0,507.1 824.1,505.0 824.8,490.4" fill="#a2a2a2" stroke="#10132a" stroke-width="1.2" stroke-linejoin="round"/><polygon points="830.6,493.3 857.6,502.0 856.1,511.1 829.9,503.5" fill="#22253a" /><polygon points="841.6,498.5 855.7,502.9 854.7,509.0 840.1,505.0" fill="#9a9a9a" /><polygon points="832.8,495.9 839.4,497.7 838.2,503.5 832.1,502.0" fill="#b8b8b8" /><polygon points="909.4,440.1 912.0,441.1 908.6,458.0 901.4,456.8" fill="#d2d2d2" stroke="#1a1d33" stroke-width="0.7" stroke-linejoin="round"/><polyline points="904.7,448.8 910.1,449.8" fill="none" stroke="#f4f4f4" stroke-width="1.0" stroke-linejoin="round" stroke-linecap="round" /><polygon points="849.8,460.3 833.2,470.5 829.9,474.6 835.1,473.8 852.2,464.5" fill="#c4c4c6" stroke="#1a1e38" stroke-width="0.6" stroke-linejoin="round"/><polygon points="826.4,488.2 816.8,495.2 815.3,498.4 818.8,498.3 829.0,492.0" fill="#c4c4c6" stroke="#1a1e38" stroke-width="0.6" stroke-linejoin="round"/>
<polygon points="963.1,497.6 1023.6,510.7 1003.2,543.8 977.7,535.5" fill="#b6b6b6" /><polygon points="963.1,497.6 993.8,504.9 987.9,517.3 979.2,515.8 977.7,504.2" fill="#7c7c7c" /><polygon points="973.3,476.5 1008.3,486.4 1010.5,483.0 1030.2,487.0 1023.2,511.0 970.1,494.2" fill="#d6d6d6" stroke="#15182c" stroke-width="0.8" stroke-linejoin="round"/><polyline points="977.0,482.6 996.7,488.4 1000.3,491.8 996.7,496.1 974.8,489.6 977.0,482.6" fill="none" stroke="#2a2d44" stroke-width="2.0" stroke-linejoin="round" stroke-linecap="round" /><polygon points="1012.4,486.4 1020.0,488.1 1018.8,494.2 1011.2,492.5" fill="#3a4a66" /><polyline points="974.8,474.7 1008.3,485.5" fill="none" stroke="#15182c" stroke-width="2.0" stroke-linejoin="round" stroke-linecap="round" /><polygon points="966.8,468.4 974.8,469.2 975.1,474.3 967.5,473.8" fill="#33353f" /><polygon points="1014.9,464.1 1018.2,464.5 1019.7,483.5 1010.5,482.3" fill="#c4c4c4" stroke="#1a1d33" stroke-width="0.7" stroke-linejoin="round"/><polyline points="1012.7,473.8 1018.8,474.7" fill="none" stroke="#efefef" stroke-width="1.0" stroke-linejoin="round" stroke-linecap="round" /><polygon points="950.0,499.8 985.0,510.0 978.0,535.1 945.9,525.8" fill="#e2e2e2" stroke="#15182c" stroke-width="0.9" stroke-linejoin="round"/><polygon points="953.6,506.8 979.2,514.4 975.1,526.3 949.7,519.5" fill="#4a4c5a" /><polygon points="962.0,512.2 977.4,516.6 974.1,524.9 958.8,520.5" fill="#f0f0f0" /><polygon points="955.1,510.0 960.2,511.5 957.6,519.5 952.6,518.0" fill="#8a8a8a" /><polygon points="979.2,524.6 984.3,526.0 983.5,536.2 978.0,535.1" fill="#5a5a5a" /><polygon points="979.2,531.1 983.8,532.2 983.5,536.2 978.6,535.5" fill="#c0c0c0" /><polygon points="945.1,518.9 931.3,528.1 928.9,531.9 933.4,531.3 947.6,523.0" fill="#c4c4c6" stroke="#1a1e38" stroke-width="0.6" stroke-linejoin="round"/><polyline points="946.4,502.7 944.2,521.7" fill="none" stroke="#15182c" stroke-width="1.6" stroke-linejoin="round" stroke-linecap="round" /><polyline points="970.1,494.2 1023.2,511.0" fill="none" stroke="#15182c" stroke-width="1.2" stroke-linejoin="round" stroke-linecap="round" /><polyline points="1023.6,511.0 1003.2,543.8 978.0,535.5" fill="none" stroke="#15182c" stroke-width="1.2" stroke-linejoin="round" stroke-linecap="round" />
<polygon points="1081.2,512.8 1114.7,521.6 1097.9,549.7 1064.4,544.9" fill="#bcbcbc" stroke="#15182c" stroke-width="0.8" stroke-linejoin="round"/><polyline points="1080.9,512.4 1065.5,542.7" fill="none" stroke="#15182c" stroke-width="2.0" stroke-linejoin="round" stroke-linecap="round" stroke-dasharray="1.2 0.8"/><polygon points="1083.0,516.5 1109.6,524.0 1106.4,532.2 1080.1,524.9" fill="#1a1d32" /><polygon points="1091.8,522.9 1106.4,526.7 1104.9,529.3 1090.6,525.6" fill="#b4b4b4" /><ellipse cx="1086.98" cy="522.58" rx="2" ry="2.6" fill="#8a8a8a"/><polygon points="1073.4,531.6 1100.8,539.2 1097.0,548.0 1069.3,540.4" fill="#1a1d32" /><polygon points="1082.8,538.0 1097.6,542.0 1096.2,544.8 1081.6,541.0" fill="#b4b4b4" /><ellipse cx="1077.5" cy="538.63" rx="2" ry="2.6" fill="#8a8a8a"/><polygon points="1115.4,522.3 1138.0,524.0 1136.6,545.3 1111.0,536.6" fill="#9c9c9c" stroke="#15182c" stroke-width="0.9" stroke-linejoin="round"/><polygon points="1121.5,524.5 1128.8,525.8 1128.2,530.3 1121.0,529.0" fill="#3a4054" /><polygon points="1118.3,512.1 1123.0,512.8 1125.6,520.1 1118.3,523.0" fill="#6e6e6e" stroke="#15182c" stroke-width="0.8" stroke-linejoin="round"/><polygon points="1108.9,537.2 1136.6,545.3 1118.3,575.5 1107.4,553.6" fill="url(#rl9)" stroke="#15182c" stroke-width="0.8" stroke-linejoin="round"/><polygon points="1063.7,546.4 1117.6,556.6 1116.9,576.0 1063.7,560.9" fill="#a3a3a3" stroke="#15182c" stroke-width="0.9" stroke-linejoin="round"/><polygon points="1066.9,550.7 1087.7,556.1 1090.9,559.5 1090.2,563.4 1066.9,557.3" fill="#55586a" stroke="#15182c" stroke-width="1.8" stroke-linejoin="round"/><polygon points="1068.8,556.1 1088.4,560.5 1089.2,562.4 1068.8,557.6" fill="#22253a" /><polygon points="1101.6,556.6 1108.9,558.5 1108.4,562.4 1101.3,560.9" fill="#d0d0d0" stroke="#15182c" stroke-width="1.0" stroke-linejoin="round"/><polygon points="1103.8,533.2 1109.3,534.2 1107.4,550.3 1100.8,548.8" fill="#b0b0b0" stroke="#15182c" stroke-width="0.6" stroke-linejoin="round"/><polygon points="1102.0,542.7 1108.1,543.9 1107.4,550.3 1100.8,548.8" fill="#f0f0f0" /><polyline points="1098.7,548.5 1097.2,556.6" fill="none" stroke="#15182c" stroke-width="2" stroke-linejoin="round" stroke-linecap="round" /><polygon points="1060.3,552.3 1045.6,561.1 1042.8,564.9 1047.5,564.5 1062.6,556.5" fill="#c4c4c6" stroke="#1a1e38" stroke-width="0.6" stroke-linejoin="round"/><polygon points="1064.2,533.2 1057.9,539.3 1057.4,542.0 1060.1,541.7 1066.9,536.2" fill="#c4c4c6" stroke="#1a1e38" stroke-width="0.6" stroke-linejoin="round"/><polygon points="1060.7,547.1 1063.7,546.4 1063.7,559.5 1060.0,555.1" fill="#4a4a52" />
<polygon points="1178.8,540.2 1213.1,549.6 1195.0,581.5 1161.9,570.9" fill="#bcbcbc" stroke="#15182c" stroke-width="0.8" stroke-linejoin="round"/><polyline points="1178.5,540.0 1161.2,569.2" fill="none" stroke="#15182c" stroke-width="2.0" stroke-linejoin="round" stroke-linecap="round" stroke-dasharray="1.2 0.8"/><polygon points="1180.6,545.0 1207.8,552.8 1204.2,561.0 1177.0,553.8" fill="#1a1d32" /><polygon points="1189.8,552.0 1204.5,555.9 1203.1,558.2 1188.8,554.6" fill="#b4b4b4" /><ellipse cx="1183.75" cy="550.5" rx="2" ry="2.4" fill="#8a8a8a"/><polygon points="1172.0,560.0 1198.8,567.2 1195.5,575.8 1168.5,568.2" fill="#1a1d32" /><polygon points="1180.8,566.2 1195.8,570.1 1194.4,572.8 1179.5,569.0" fill="#b4b4b4" /><ellipse cx="1175.0" cy="565.88" rx="2" ry="2.4" fill="#8a8a8a"/><polygon points="1213.8,550.2 1236.2,552.5 1235.0,572.5 1208.1,564.6" fill="#9c9c9c" stroke="#15182c" stroke-width="0.9" stroke-linejoin="round"/><polygon points="1219.4,553.4 1226.9,554.8 1226.2,558.5 1218.8,557.2" fill="#3a4054" /><polygon points="1215.6,539.6 1220.0,540.9 1221.5,548.4 1215.0,553.8" fill="#6e6e6e" stroke="#15182c" stroke-width="0.8" stroke-linejoin="round"/><polygon points="1205.6,565.2 1235.0,572.5 1216.2,604.2 1205.0,582.1" fill="url(#rl9)" stroke="#15182c" stroke-width="0.8" stroke-linejoin="round"/><polygon points="1161.2,575.2 1215.6,585.2 1215.0,605.0 1161.2,589.0" fill="#a3a3a3" stroke="#15182c" stroke-width="0.9" stroke-linejoin="round"/><polygon points="1164.6,579.9 1185.6,585.0 1188.1,588.4 1187.5,592.1 1164.6,586.1" fill="#55586a" stroke="#15182c" stroke-width="1.8" stroke-linejoin="round"/><polygon points="1166.9,585.2 1185.6,589.6 1186.2,591.5 1166.9,586.5" fill="#22253a" /><polygon points="1199.4,585.2 1206.2,586.5 1206.0,590.2 1199.1,589.0" fill="#d0d0d0" stroke="#15182c" stroke-width="1.0" stroke-linejoin="round"/><polygon points="1198.8,572.1 1205.6,573.4 1204.4,583.0 1196.9,581.8" fill="#e8e8e8" stroke="#15182c" stroke-width="0.6" stroke-linejoin="round"/><polygon points="1201.9,561.5 1206.2,562.1 1205.0,573.4 1199.4,572.1" fill="#a8a8a8" /><polyline points="1196.2,576.5 1194.8,585.2" fill="none" stroke="#15182c" stroke-width="2" stroke-linejoin="round" stroke-linecap="round" /><polygon points="1157.5,575.9 1161.0,576.5 1160.0,602.1 1155.6,606.2" fill="#4c4c4c" stroke="#15182c" stroke-width="0.8" stroke-linejoin="round"/>
<polygon points="1273.5,566.9 1307.9,576.2 1289.8,608.1 1256.6,597.5" fill="#bcbcbc" stroke="#15182c" stroke-width="0.8" stroke-linejoin="round"/><polyline points="1273.2,566.6 1256.0,595.9" fill="none" stroke="#15182c" stroke-width="2.0" stroke-linejoin="round" stroke-linecap="round" stroke-dasharray="1.2 0.8"/><polygon points="1275.4,571.6 1302.5,579.4 1299.0,587.6 1271.8,580.4" fill="#1a1d32" /><polygon points="1284.5,578.6 1299.2,582.5 1297.9,584.9 1283.5,581.2" fill="#b4b4b4" /><ellipse cx="1278.5" cy="577.1" rx="2" ry="2.4" fill="#8a8a8a"/><polygon points="1266.8,586.6 1293.5,593.9 1290.2,602.4 1263.2,594.9" fill="#1a1d32" /><polygon points="1275.5,592.9 1290.5,596.7 1289.1,599.4 1274.2,595.6" fill="#b4b4b4" /><ellipse cx="1269.75" cy="592.48" rx="2" ry="2.4" fill="#8a8a8a"/><polygon points="1308.5,576.9 1331.0,579.1 1329.8,599.1 1302.9,591.2" fill="#9c9c9c" stroke="#15182c" stroke-width="0.9" stroke-linejoin="round"/><polygon points="1314.1,580.0 1321.6,581.4 1321.0,585.1 1313.5,583.9" fill="#3a4054" /><polygon points="1310.4,566.2 1314.8,567.5 1316.2,575.0 1309.8,580.4" fill="#6e6e6e" stroke="#15182c" stroke-width="0.8" stroke-linejoin="round"/><polygon points="1300.4,591.9 1329.8,599.1 1311.0,630.9 1299.8,608.7" fill="url(#rl9)" stroke="#15182c" stroke-width="0.8" stroke-linejoin="round"/><polygon points="1256.0,601.9 1310.4,611.9 1309.8,631.6 1256.0,615.6" fill="#a3a3a3" stroke="#15182c" stroke-width="0.9" stroke-linejoin="round"/><polygon points="1259.4,606.5 1280.4,611.6 1282.9,615.0 1282.2,618.7 1259.4,612.7" fill="#55586a" stroke="#15182c" stroke-width="1.8" stroke-linejoin="round"/><polygon points="1261.6,611.9 1280.4,616.2 1281.0,618.1 1261.6,613.1" fill="#22253a" /><polygon points="1294.1,611.9 1301.0,613.1 1300.8,616.9 1293.9,615.6" fill="#d0d0d0" stroke="#15182c" stroke-width="1.0" stroke-linejoin="round"/><polygon points="1293.5,598.7 1300.4,600.0 1299.1,609.6 1291.6,608.4" fill="#e8e8e8" stroke="#15182c" stroke-width="0.6" stroke-linejoin="round"/><polygon points="1296.6,588.1 1301.0,588.7 1299.8,600.0 1294.1,598.7" fill="#a8a8a8" /><polyline points="1291.0,603.1 1289.5,611.9" fill="none" stroke="#15182c" stroke-width="2" stroke-linejoin="round" stroke-linecap="round" /><polygon points="1253.5,618.1 1264.8,620.6 1272.2,631.9 1268.5,636.9" fill="#6c6c6c" stroke="#15182c" stroke-width="0.8" stroke-linejoin="round"/><polygon points="1251.0,604.4 1256.0,603.7 1255.4,618.1 1251.6,616.9" fill="#2a2c38" />
<line x1="1320" y1="497" x2="1196" y2="695" stroke="#dfe6f2" stroke-width="1" stroke-dasharray="4 5.5"/>
<line x1="1320" y1="497" x2="1360" y2="510" stroke="#dfe6f2" stroke-width="1"/>
<polygon points="105.3,614.1 127.5,620.9 120.2,633.9 96.2,626.9" fill="#8c9352" stroke="#e6e04a" stroke-width="1"/><polygon points="96.2,626.9 120.2,633.9 119.4,654.7 95.2,648.0" fill="#6e7ea4" fill-opacity=".55" stroke="#d8dce8" stroke-width=".8"/><polygon points="120.2,633.9 129.5,624.5 128.8,642.5 120.9,652.7" fill="#5c6f9a" fill-opacity=".5" stroke="#d8dce8" stroke-width=".8"/><polyline points="119.4,639.4 117.0,684.7" fill="none" stroke="#16b8b8" stroke-width="3.2" stroke-linejoin="round" stroke-linecap="round" /><ellipse cx="117.03" cy="686.56" rx="4.2" ry="2.6" fill="#22d8d8"/><polygon points="113.9,687.8 120.2,687.8 117.0,692.5" fill="#0f9a9a" /><polyline points="118.6,634.7 95.9,628.8" fill="none" stroke="#e81818" stroke-width="3.4" stroke-linejoin="round" stroke-linecap="round" /><polygon points="87.8,626.6 97.5,624.5 95.6,632.8" fill="#f01c1c" /><polyline points="121.2,633.1 135.0,612.0" fill="none" stroke="#18b030" stroke-width="3.4" stroke-linejoin="round" stroke-linecap="round" /><polygon points="138.1,605.8 140.5,613.6 131.6,609.4" fill="#20c038" /><circle cx="120.16" cy="635.94" r="3.6" fill="#8a8a82"/><text x="80.0" y="628.75" font-family="Liberation Sans,sans-serif" font-size="8" font-weight="bold" fill="#e02020">X</text><text x="137.81" y="605.0" font-family="Liberation Sans,sans-serif" font-size="8" font-weight="bold" fill="#e02040">Y</text>
</svg>
</body></html>
